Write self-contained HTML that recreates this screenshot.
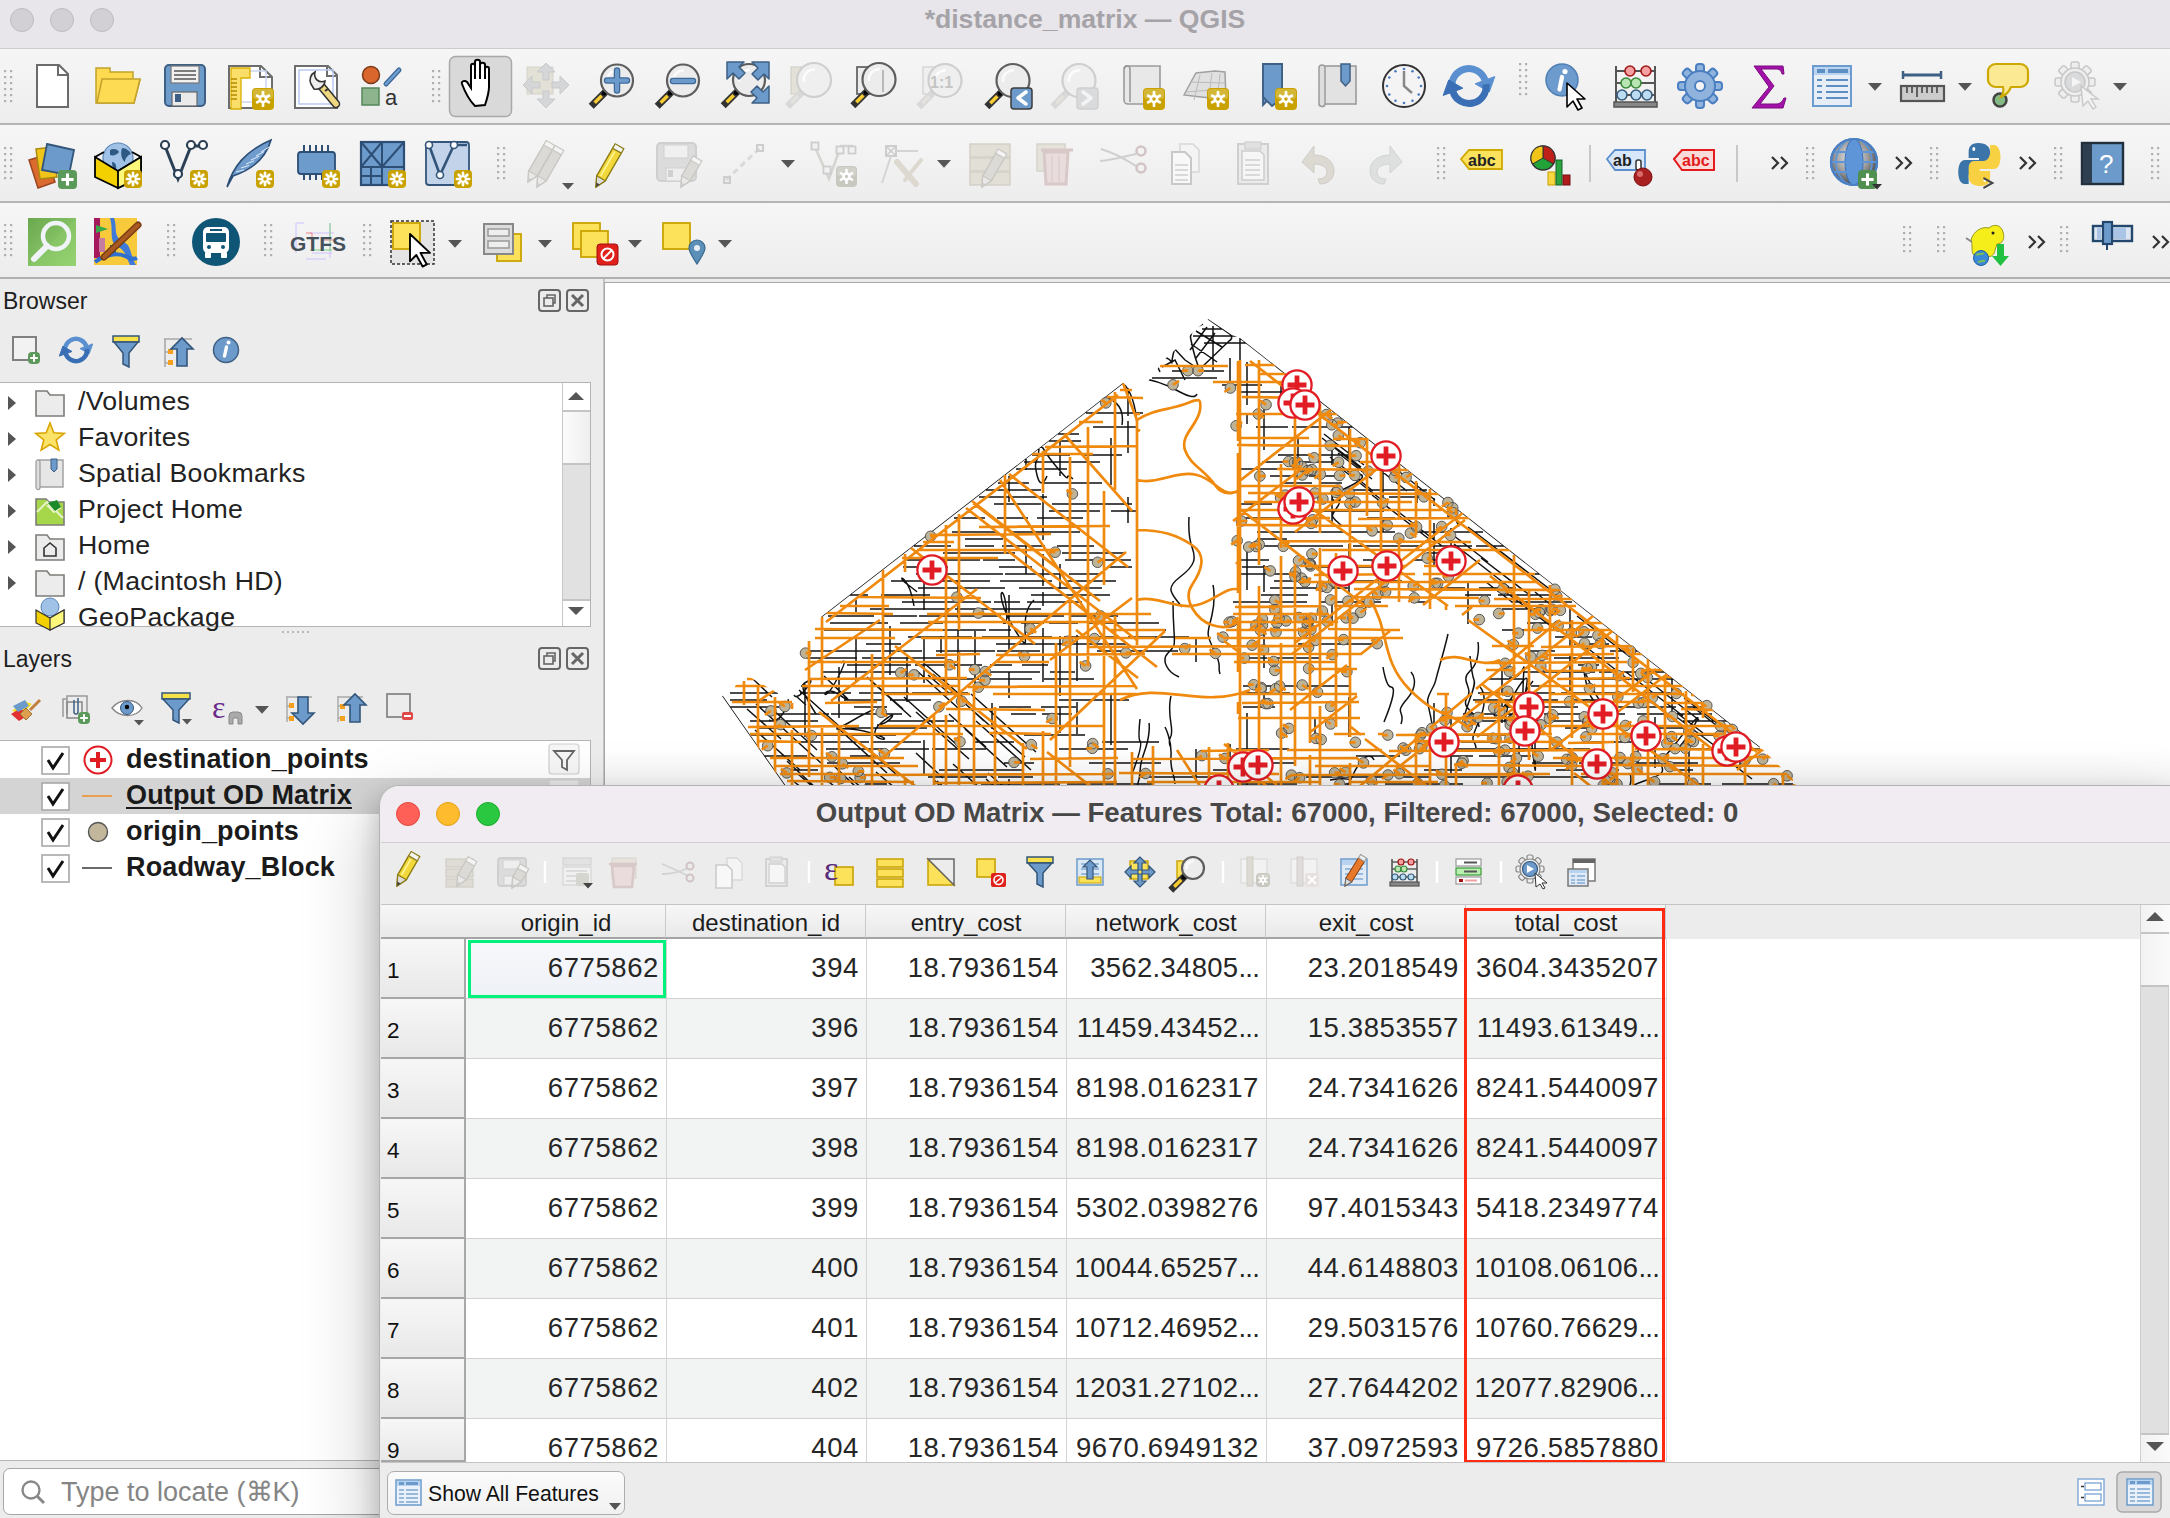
<!DOCTYPE html>
<html><head><meta charset="utf-8"><title>QGIS</title><style>
*{margin:0;padding:0;box-sizing:border-box}
html,body{width:2170px;height:1518px;overflow:hidden;background:#ececec;font-family:"Liberation Sans",sans-serif;color:#1e1e1e}
.a{position:absolute}
.t{position:absolute;white-space:nowrap;line-height:1}
svg.i{position:absolute;overflow:visible}
.grip{position:absolute;width:10px;background-image:radial-gradient(circle at 2px 2px,#a8a8a8 1.3px,transparent 1.6px);background-size:6px 6px}

.tbrow{position:absolute;left:0;width:2170px;background:linear-gradient(#f6f6f6,#ededed)}

.dlg{position:absolute;left:379px;top:785px;width:1810px;height:760px;border-radius:20px 20px 0 0;background:#ececec;box-shadow:-4px 10px 22px rgba(0,0,0,.16),-10px 24px 70px rgba(0,0,0,.20);overflow:hidden;border:1px solid #b4b4b4}
.hd{position:absolute;top:905px;height:34px;background:linear-gradient(#f7f7f7,#e9e9e9);border-bottom:2px solid #a4a4a4;border-right:1px solid #c9c9c9}
.rn{position:absolute;left:381px;width:85px;background:linear-gradient(#f7f7f7,#e8e8e8);border-bottom:2px solid #a6a6a6;border-right:2px solid #a8a8a8}
.num{letter-spacing:0.6px}
</style></head>
<body>
<div class="a" style="left:0px;top:0px;width:2170px;height:49px;background:#e8e6ea"></div><div class="a" style="left:0px;top:48px;width:2170px;height:1px;background:#cdcbce"></div><div class="a" style="left:10px;top:8px;width:24px;height:24px;border-radius:50%;background:#d2d0d5;border:1px solid #bdbbc0"></div><div class="a" style="left:50px;top:8px;width:24px;height:24px;border-radius:50%;background:#d2d0d5;border:1px solid #bdbbc0"></div><div class="a" style="left:90px;top:8px;width:24px;height:24px;border-radius:50%;background:#d2d0d5;border:1px solid #bdbbc0"></div><div class="t" style="left:585px;width:1000px;text-align:center;top:5.5px;font-size:26.6px;color:#a5a3a8;font-weight:bold;">*distance_matrix — QGIS</div><div class="tbrow" style="top:49px;height:74px"></div><div class="a" style="left:0px;top:123px;width:2170px;height:2px;background:#b4b4b4"></div><div class="tbrow" style="top:125px;height:76px"></div><div class="a" style="left:0px;top:201px;width:2170px;height:2px;background:#b4b4b4"></div><div class="tbrow" style="top:203px;height:74px"></div><div class="a" style="left:0px;top:277px;width:2170px;height:2px;background:#b0b0b0"></div><svg class="i" style="left:0px;top:0px" width="2170" height="280" viewBox="0 0 2170 280"><rect x="4" y="70" width="2.2" height="2.2" rx="0" fill="#b0b0b0" stroke="none" stroke-width="2" /><rect x="10" y="70" width="2.2" height="2.2" rx="0" fill="#b0b0b0" stroke="none" stroke-width="2" /><rect x="4" y="76" width="2.2" height="2.2" rx="0" fill="#b0b0b0" stroke="none" stroke-width="2" /><rect x="10" y="76" width="2.2" height="2.2" rx="0" fill="#b0b0b0" stroke="none" stroke-width="2" /><rect x="4" y="82" width="2.2" height="2.2" rx="0" fill="#b0b0b0" stroke="none" stroke-width="2" /><rect x="10" y="82" width="2.2" height="2.2" rx="0" fill="#b0b0b0" stroke="none" stroke-width="2" /><rect x="4" y="88" width="2.2" height="2.2" rx="0" fill="#b0b0b0" stroke="none" stroke-width="2" /><rect x="10" y="88" width="2.2" height="2.2" rx="0" fill="#b0b0b0" stroke="none" stroke-width="2" /><rect x="4" y="94" width="2.2" height="2.2" rx="0" fill="#b0b0b0" stroke="none" stroke-width="2" /><rect x="10" y="94" width="2.2" height="2.2" rx="0" fill="#b0b0b0" stroke="none" stroke-width="2" /><rect x="4" y="100" width="2.2" height="2.2" rx="0" fill="#b0b0b0" stroke="none" stroke-width="2" /><rect x="10" y="100" width="2.2" height="2.2" rx="0" fill="#b0b0b0" stroke="none" stroke-width="2" /><path d="M37 65h22l9 9v33h-31z" fill="#fff" stroke="#6b6b6b" stroke-width="2" /><path d="M58 65v10h10" fill="none" stroke="#6b6b6b" stroke-width="2" /><path d="M96 68h14v4h23v8h7l-6 23h-38z" fill="#fdda50" stroke="#c2a22c" stroke-width="1.5" /><path d="M97 103l5-24h38l-6 24z" fill="#fddb52" stroke="#c2a22c" stroke-width="1.5" /><rect x="165" y="65" width="40" height="41" rx="4" fill="#6d9bca" stroke="#3e5f84" stroke-width="2" /><rect x="171" y="66" width="28" height="17" rx="0" fill="#f0f0f0" stroke="#777" stroke-width="1.2" /><line x1="174" y1="71" x2="196" y2="71" stroke="#555" stroke-width="1.5" /><line x1="174" y1="75" x2="196" y2="75" stroke="#555" stroke-width="1.5" /><line x1="174" y1="79" x2="196" y2="79" stroke="#555" stroke-width="1.5" /><rect x="172" y="92" width="25" height="14" rx="0" fill="#eaeaea" stroke="#666" stroke-width="1.2" /><rect x="175" y="94" width="6" height="8" rx="0" fill="#3e5f84" stroke="none" stroke-width="2" /><path d="M229 66h32l11 11v31h-43z" fill="#fff" stroke="#6d6d6d" stroke-width="2" /><path d="M260 66v11h12" fill="none" stroke="#6d6d6d" stroke-width="2" /><rect x="236" y="71" width="30" height="31" rx="0" fill="none" stroke="#c8d4f0" stroke-width="1.5" /><path d="M231 68h19v10h-9v31h-10z" fill="#fbdd6a" stroke="#d9b000" stroke-width="1.3" /><line x1="231" y1="79" x2="237" y2="79" stroke="#b08a00" stroke-width="1.5" /><line x1="231" y1="83" x2="237" y2="83" stroke="#b08a00" stroke-width="1.5" /><line x1="231" y1="87" x2="237" y2="87" stroke="#b08a00" stroke-width="1.5" /><line x1="231" y1="91" x2="237" y2="91" stroke="#b08a00" stroke-width="1.5" /><line x1="231" y1="95" x2="237" y2="95" stroke="#b08a00" stroke-width="1.5" /><line x1="231" y1="99" x2="237" y2="99" stroke="#b08a00" stroke-width="1.5" /><rect x="252" y="88" width="22" height="22" rx="4" fill="#c9a200" stroke="none" stroke-width="2" /><rect x="253" y="89" width="20" height="10.0" rx="3" fill="#dcc55a" stroke="none" stroke-width="2" opacity="0.6"/><line x1="263.0" y1="99.0" x2="263.0" y2="106.92" stroke="#fff" stroke-width="2.6399999999999997" /><line x1="263.0" y1="99.0" x2="256.14107880202727" y2="102.96000000000001" stroke="#fff" stroke-width="2.6399999999999997" /><line x1="263.0" y1="99.0" x2="256.14107880202727" y2="95.04" stroke="#fff" stroke-width="2.6399999999999997" /><line x1="263.0" y1="99.0" x2="263.0" y2="91.08" stroke="#fff" stroke-width="2.6399999999999997" /><line x1="263.0" y1="99.0" x2="269.85892119797273" y2="95.03999999999999" stroke="#fff" stroke-width="2.6399999999999997" /><line x1="263.0" y1="99.0" x2="269.85892119797273" y2="102.96" stroke="#fff" stroke-width="2.6399999999999997" /><circle cx="263.0" cy="99.0" r="4.4" fill="#fff" stroke="none" stroke-width="2" /><circle cx="263.0" cy="99.0" r="1.76" fill="#c9a200" stroke="none" stroke-width="2" /><path d="M295 66h33l9 9v33h-42z" fill="#fff" stroke="#6d6d6d" stroke-width="2" /><path d="M327 66v10h10" fill="none" stroke="#6d6d6d" stroke-width="2" /><rect x="299" y="70" width="34" height="34" rx="0" fill="none" stroke="#b9c9f0" stroke-width="1.5" /><line x1="322" y1="87" x2="336" y2="104" stroke="#333" stroke-width="8.5" stroke-linecap="round"/><line x1="322" y1="87" x2="336" y2="104" stroke="#f0d880" stroke-width="5.5" stroke-linecap="round"/><line x1="325" y1="91" x2="328" y2="89" stroke="#333" stroke-width="2" /><path d="M311 84a9 9 0 0 1 4-12 8 8 0 0 0 2 8 8 8 0 0 0 8 1 9 9 0 0 1-11 8z" fill="#eee" stroke="#333" stroke-width="1.6" /><circle cx="371" cy="75" r="8.5" fill="#d9672d" stroke="#7a3a19" stroke-width="1.5" /><line x1="386" y1="84" x2="399" y2="70" stroke="#3e6a9a" stroke-width="5" stroke-linecap="round"/><line x1="386" y1="84" x2="399" y2="70" stroke="#6f9ed0" stroke-width="2.5" stroke-linecap="round"/><rect x="362" y="88" width="17" height="17" rx="0" fill="#8db48c" stroke="#55875a" stroke-width="1.5" /><text x="385" y="105" font-family="Liberation Sans" font-size="22" fill="#333" font-weight="normal" >a</text><rect x="432" y="70" width="2.2" height="2.2" rx="0" fill="#b0b0b0" stroke="none" stroke-width="2" /><rect x="438" y="70" width="2.2" height="2.2" rx="0" fill="#b0b0b0" stroke="none" stroke-width="2" /><rect x="432" y="76" width="2.2" height="2.2" rx="0" fill="#b0b0b0" stroke="none" stroke-width="2" /><rect x="438" y="76" width="2.2" height="2.2" rx="0" fill="#b0b0b0" stroke="none" stroke-width="2" /><rect x="432" y="82" width="2.2" height="2.2" rx="0" fill="#b0b0b0" stroke="none" stroke-width="2" /><rect x="438" y="82" width="2.2" height="2.2" rx="0" fill="#b0b0b0" stroke="none" stroke-width="2" /><rect x="432" y="88" width="2.2" height="2.2" rx="0" fill="#b0b0b0" stroke="none" stroke-width="2" /><rect x="438" y="88" width="2.2" height="2.2" rx="0" fill="#b0b0b0" stroke="none" stroke-width="2" /><rect x="432" y="94" width="2.2" height="2.2" rx="0" fill="#b0b0b0" stroke="none" stroke-width="2" /><rect x="438" y="94" width="2.2" height="2.2" rx="0" fill="#b0b0b0" stroke="none" stroke-width="2" /><rect x="432" y="100" width="2.2" height="2.2" rx="0" fill="#b0b0b0" stroke="none" stroke-width="2" /><rect x="438" y="100" width="2.2" height="2.2" rx="0" fill="#b0b0b0" stroke="none" stroke-width="2" /><rect x="449.5" y="56.5" width="62" height="60" rx="6" fill="#d9d9d9" stroke="#a9a9a9" stroke-width="1.5" /><path d="M475 106c-6-6-10-14-13-22-1-3 3-4 5-2l4 6v-22c0-3 4-3 4 0v13-17c0-3 5-3 5 0v17-14c0-3 5-3 5 0v14-10c0-3 4-3 4 0v18c0 6-2 12-4 18z" fill="#fff" stroke="#000" stroke-width="2" /><rect x="527" y="67" width="26" height="27" rx="0" fill="#e3e0d6" stroke="#d6d3ca" stroke-width="1" /><path d="M546 63l-9 9h6v8h6v-8h6z" fill="#d4d6d8" stroke="#c7c9cb" stroke-width="1" /><path d="M546 108l-9-9h6v-8h6v8h6z" fill="#d4d6d8" stroke="#c7c9cb" stroke-width="1" /><path d="M523 85l9-9v6h8v6h-8v6z" fill="#d4d6d8" stroke="#c7c9cb" stroke-width="1" /><path d="M569 85l-9-9v6h-8v6h8v6z" fill="#d4d6d8" stroke="#c7c9cb" stroke-width="1" /><line x1="605.6862915010153" y1="91.81370849898477" x2="593.665476220844" y2="103.83452377915607" stroke="#333" stroke-width="7" stroke-linecap="square"/><line x1="601.6862915010153" y1="95.81370849898477" x2="594.665476220844" y2="102.83452377915607" stroke="#f6cc32" stroke-width="3.5" /><circle cx="604.1862915010153" cy="93.31370849898477" r="2.2" fill="#000" stroke="none" stroke-width="2" /><circle cx="617" cy="80.5" r="16" fill="#ececec" stroke="#5e5e5e" stroke-width="2.2" /><path d="M607.4 82.1A9.92 9.92 0 0 1 617.8 70.58" fill="none" stroke="#fff" stroke-width="2.5" opacity="0.8"/><path d="M607 80.5h20M617 70.5v20" fill="none" stroke="#3e6a9a" stroke-width="6.5" stroke-linecap="round"/><path d="M607 80.5h20M617 70.5v20" fill="none" stroke="#6c9bcb" stroke-width="4" stroke-linecap="round"/><line x1="671.6862915010153" y1="91.81370849898477" x2="659.665476220844" y2="103.83452377915607" stroke="#333" stroke-width="7" stroke-linecap="square"/><line x1="667.6862915010153" y1="95.81370849898477" x2="660.665476220844" y2="102.83452377915607" stroke="#f6cc32" stroke-width="3.5" /><circle cx="670.1862915010153" cy="93.31370849898477" r="2.2" fill="#000" stroke="none" stroke-width="2" /><circle cx="683" cy="80.5" r="16" fill="#ececec" stroke="#5e5e5e" stroke-width="2.2" /><path d="M673.4 82.1A9.92 9.92 0 0 1 683.8 70.58" fill="none" stroke="#fff" stroke-width="2.5" opacity="0.8"/><path d="M673 81h20" fill="none" stroke="#3e6a9a" stroke-width="6.5" stroke-linecap="round"/><path d="M673 81h20" fill="none" stroke="#6c9bcb" stroke-width="4" stroke-linecap="round"/><line x1="737.6862915010153" y1="91.31370849898477" x2="725.665476220844" y2="103.33452377915607" stroke="#333" stroke-width="7" stroke-linecap="square"/><line x1="733.6862915010153" y1="95.31370849898477" x2="726.665476220844" y2="102.33452377915607" stroke="#f6cc32" stroke-width="3.5" /><circle cx="736.1862915010153" cy="92.81370849898477" r="2.2" fill="#000" stroke="none" stroke-width="2" /><circle cx="749" cy="80" r="16" fill="#ececec" stroke="#5e5e5e" stroke-width="2.2" /><path d="M739.4 81.6A9.92 9.92 0 0 1 749.8 70.08" fill="none" stroke="#fff" stroke-width="2.5" opacity="0.8"/><path d="M0 0h17l-5 5 6 6-6 6-6-6-6 6z" fill="#6c9bcb" stroke="#3e5f84" stroke-width="1.5" stroke-linejoin="round" transform="translate(727 62) rotate(0)"/><path d="M0 0h17l-5 5 6 6-6 6-6-6-6 6z" fill="#6c9bcb" stroke="#3e5f84" stroke-width="1.5" stroke-linejoin="round" transform="translate(769 62) rotate(90)"/><path d="M0 0h17l-5 5 6 6-6 6-6-6-6 6z" fill="#6c9bcb" stroke="#3e5f84" stroke-width="1.5" stroke-linejoin="round" transform="translate(769 103) rotate(180)"/><rect x="791" y="67" width="20" height="27" rx="0" fill="#e4e1d8" stroke="#d2d0c8" stroke-width="1.2" /><line x1="801.9791847198287" y1="92.0208152801713" x2="789.9583694396574" y2="104.04163056034261" stroke="#d8d8d8" stroke-width="7" stroke-linecap="square"/><line x1="797.9791847198287" y1="96.0208152801713" x2="790.9583694396574" y2="103.04163056034261" stroke="#e4e2dc" stroke-width="3.5" /><circle cx="814" cy="80" r="17" fill="#efefef" stroke="#cfcfcf" stroke-width="2.2" /><path d="M803.8 81.7A10.54 10.54 0 0 1 814.85 69.46000000000001" fill="none" stroke="#fff" stroke-width="2.5" opacity="0.8"/><rect x="857" y="67" width="18" height="27" rx="0" fill="#ececec" stroke="#666" stroke-width="1.8" /><line x1="867.3327381104219" y1="91.16726188957803" x2="855.3119228302506" y2="103.18807716974935" stroke="#333" stroke-width="7" stroke-linecap="square"/><line x1="863.3327381104219" y1="95.16726188957803" x2="856.3119228302506" y2="102.18807716974935" stroke="#f6cc32" stroke-width="3.5" /><circle cx="865.8327381104219" cy="92.66726188957803" r="2.2" fill="#000" stroke="none" stroke-width="2" /><circle cx="879" cy="79.5" r="16.5" fill="#ececec" stroke="#5e5e5e" stroke-width="2.2" /><path d="M869.1 81.15A10.23 10.23 0 0 1 879.825 69.27" fill="none" stroke="#fff" stroke-width="2.5" opacity="0.8"/><line x1="883" y1="70" x2="883" y2="92" stroke="#888" stroke-width="1" /><rect x="923" y="67" width="18" height="27" rx="0" fill="#efefef" stroke="#d0d0d0" stroke-width="1.2" /><line x1="933.3327381104219" y1="92.16726188957803" x2="921.3119228302506" y2="104.18807716974935" stroke="#d8d8d8" stroke-width="7" stroke-linecap="square"/><line x1="929.3327381104219" y1="96.16726188957803" x2="922.3119228302506" y2="103.18807716974935" stroke="#e4e2dc" stroke-width="3.5" /><circle cx="945" cy="80.5" r="16.5" fill="#efefef" stroke="#cfcfcf" stroke-width="2.2" /><path d="M935.1 82.15A10.23 10.23 0 0 1 945.825 70.27" fill="none" stroke="#fff" stroke-width="2.5" opacity="0.8"/><text x="930" y="88" font-family="Liberation Sans" font-size="16" fill="#c4c4c4" font-weight="bold" >1:1</text><line x1="1001.3327381104219" y1="92.16726188957803" x2="989.3119228302506" y2="104.18807716974935" stroke="#333" stroke-width="7" stroke-linecap="square"/><line x1="997.3327381104219" y1="96.16726188957803" x2="990.3119228302506" y2="103.18807716974935" stroke="#f6cc32" stroke-width="3.5" /><circle cx="999.8327381104219" cy="93.66726188957803" r="2.2" fill="#000" stroke="none" stroke-width="2" /><circle cx="1013" cy="80.5" r="16.5" fill="#ececec" stroke="#5e5e5e" stroke-width="2.2" /><path d="M1003.1 82.15A10.23 10.23 0 0 1 1013.825 70.27" fill="none" stroke="#fff" stroke-width="2.5" opacity="0.8"/><rect x="1011" y="88" width="21" height="21" rx="3" fill="#6c9bcb" stroke="#3c3c3c" stroke-width="1.5" /><path d="M1026 92l-8 6 8 6" fill="none" stroke="#fff" stroke-width="3.5" stroke-linejoin="round" stroke-linecap="round"/><line x1="1067.332738110422" y1="92.16726188957803" x2="1055.3119228302508" y2="104.18807716974935" stroke="#d8d8d8" stroke-width="7" stroke-linecap="square"/><line x1="1063.332738110422" y1="96.16726188957803" x2="1056.3119228302508" y2="103.18807716974935" stroke="#e4e2dc" stroke-width="3.5" /><circle cx="1079" cy="80.5" r="16.5" fill="#efefef" stroke="#cfcfcf" stroke-width="2.2" /><path d="M1069.1 82.15A10.23 10.23 0 0 1 1079.825 70.27" fill="none" stroke="#fff" stroke-width="2.5" opacity="0.8"/><rect x="1077" y="88" width="21" height="21" rx="3" fill="#d8dadc" stroke="#d0d0d0" stroke-width="1.5" /><path d="M1083 92l8 6-8 6" fill="none" stroke="#f4f4f4" stroke-width="3.5" stroke-linejoin="round" stroke-linecap="round"/><path d="M1125 66h35v38h-32a4 4 0 0 1-4-4v-31a4 4 0 0 1 4-3z" fill="#e8e8e8" stroke="#9a9a9a" stroke-width="1.6" /><path d="M1124 69a3 3 0 0 1 6 0v33" fill="none" stroke="#9a9a9a" stroke-width="1.6" /><rect x="1143" y="88" width="22" height="22" rx="4" fill="#c9a200" stroke="none" stroke-width="2" /><rect x="1144" y="89" width="20" height="10.0" rx="3" fill="#dcc55a" stroke="none" stroke-width="2" opacity="0.6"/><line x1="1154.0" y1="99.0" x2="1154.0" y2="106.92" stroke="#fff" stroke-width="2.6399999999999997" /><line x1="1154.0" y1="99.0" x2="1147.1410788020273" y2="102.96000000000001" stroke="#fff" stroke-width="2.6399999999999997" /><line x1="1154.0" y1="99.0" x2="1147.1410788020273" y2="95.04" stroke="#fff" stroke-width="2.6399999999999997" /><line x1="1154.0" y1="99.0" x2="1154.0" y2="91.08" stroke="#fff" stroke-width="2.6399999999999997" /><line x1="1154.0" y1="99.0" x2="1160.8589211979727" y2="95.03999999999999" stroke="#fff" stroke-width="2.6399999999999997" /><line x1="1154.0" y1="99.0" x2="1160.8589211979727" y2="102.96" stroke="#fff" stroke-width="2.6399999999999997" /><circle cx="1154.0" cy="99.0" r="4.4" fill="#fff" stroke="none" stroke-width="2" /><circle cx="1154.0" cy="99.0" r="1.76" fill="#c9a200" stroke="none" stroke-width="2" /><path d="M1184 95l8-15 4-7 19-2 10 1 1 28-15-2-10-1z" fill="#e0e0e0" stroke="#a0a0a0" stroke-width="1.5" /><path d="M1190 82l35 1M1186 92l38-3M1200 75l-6 25M1212 73l-4 30M1220 74l-3 27" fill="none" stroke="#bbb" stroke-width="1" /><rect x="1207" y="88" width="22" height="22" rx="4" fill="#c9a200" stroke="none" stroke-width="2" /><rect x="1208" y="89" width="20" height="10.0" rx="3" fill="#dcc55a" stroke="none" stroke-width="2" opacity="0.6"/><line x1="1218.0" y1="99.0" x2="1218.0" y2="106.92" stroke="#fff" stroke-width="2.6399999999999997" /><line x1="1218.0" y1="99.0" x2="1211.1410788020273" y2="102.96000000000001" stroke="#fff" stroke-width="2.6399999999999997" /><line x1="1218.0" y1="99.0" x2="1211.1410788020273" y2="95.04" stroke="#fff" stroke-width="2.6399999999999997" /><line x1="1218.0" y1="99.0" x2="1218.0" y2="91.08" stroke="#fff" stroke-width="2.6399999999999997" /><line x1="1218.0" y1="99.0" x2="1224.8589211979727" y2="95.03999999999999" stroke="#fff" stroke-width="2.6399999999999997" /><line x1="1218.0" y1="99.0" x2="1224.8589211979727" y2="102.96" stroke="#fff" stroke-width="2.6399999999999997" /><circle cx="1218.0" cy="99.0" r="4.4" fill="#fff" stroke="none" stroke-width="2" /><circle cx="1218.0" cy="99.0" r="1.76" fill="#c9a200" stroke="none" stroke-width="2" /><path d="M1263 64h19v41l-10 -9-9 9z" fill="#6c9bcb" stroke="#3e5f84" stroke-width="1.8" /><path d="M1263 64h19v34l-10 8-9-9z" fill="#6c9bcb" stroke="#3e5f84" stroke-width="1.8" /><rect x="1275" y="88" width="22" height="22" rx="4" fill="#c9a200" stroke="none" stroke-width="2" /><rect x="1276" y="89" width="20" height="10.0" rx="3" fill="#dcc55a" stroke="none" stroke-width="2" opacity="0.6"/><line x1="1286.0" y1="99.0" x2="1286.0" y2="106.92" stroke="#fff" stroke-width="2.6399999999999997" /><line x1="1286.0" y1="99.0" x2="1279.1410788020273" y2="102.96000000000001" stroke="#fff" stroke-width="2.6399999999999997" /><line x1="1286.0" y1="99.0" x2="1279.1410788020273" y2="95.04" stroke="#fff" stroke-width="2.6399999999999997" /><line x1="1286.0" y1="99.0" x2="1286.0" y2="91.08" stroke="#fff" stroke-width="2.6399999999999997" /><line x1="1286.0" y1="99.0" x2="1292.8589211979727" y2="95.03999999999999" stroke="#fff" stroke-width="2.6399999999999997" /><line x1="1286.0" y1="99.0" x2="1292.8589211979727" y2="102.96" stroke="#fff" stroke-width="2.6399999999999997" /><circle cx="1286.0" cy="99.0" r="4.4" fill="#fff" stroke="none" stroke-width="2" /><circle cx="1286.0" cy="99.0" r="1.76" fill="#c9a200" stroke="none" stroke-width="2" /><rect x="1321" y="66" width="35" height="38" rx="0" fill="#e2e2e2" stroke="#9c9c9c" stroke-width="1.6" /><path d="M1319 68a3 3 0 0 1 6 0v36a3 3 0 0 1-6-1z" fill="#ddd" stroke="#9c9c9c" stroke-width="1.5" /><path d="M1341 64h9v17l-4.5 5-4.5-5z" fill="#6c9bcb" stroke="#3e5f84" stroke-width="1.5" /><circle cx="1404" cy="86" r="21" fill="#f4f4f4" stroke="#333" stroke-width="2" /><circle cx="1421.0" cy="86.0" r="1.3" fill="#4a7ac0" stroke="none" stroke-width="2" /><circle cx="1418.7224318643355" cy="94.5" r="1.3" fill="#4a7ac0" stroke="none" stroke-width="2" /><circle cx="1412.5" cy="100.72243186433546" r="1.3" fill="#4a7ac0" stroke="none" stroke-width="2" /><circle cx="1404.0" cy="103.0" r="1.3" fill="#4a7ac0" stroke="none" stroke-width="2" /><circle cx="1395.5" cy="100.72243186433546" r="1.3" fill="#4a7ac0" stroke="none" stroke-width="2" /><circle cx="1389.2775681356645" cy="94.5" r="1.3" fill="#4a7ac0" stroke="none" stroke-width="2" /><circle cx="1387.0" cy="86.0" r="1.3" fill="#4a7ac0" stroke="none" stroke-width="2" /><circle cx="1389.2775681356645" cy="77.5" r="1.3" fill="#4a7ac0" stroke="none" stroke-width="2" /><circle cx="1395.5" cy="71.27756813566455" r="1.3" fill="#4a7ac0" stroke="none" stroke-width="2" /><circle cx="1404.0" cy="69.0" r="1.3" fill="#4a7ac0" stroke="none" stroke-width="2" /><circle cx="1412.5" cy="71.27756813566454" r="1.3" fill="#4a7ac0" stroke="none" stroke-width="2" /><circle cx="1418.7224318643355" cy="77.5" r="1.3" fill="#4a7ac0" stroke="none" stroke-width="2" /><path d="M1404 71v15l8 7" fill="none" stroke="#888" stroke-width="2.5" /><path d="M1452.0 87.7A17 17 0 0 1 1485.0 80.2" fill="none" stroke="#5a90d0" stroke-width="7" /><path d="M1489.3 92.0L1475.1 83.8L1494.8 76.6z" fill="#5a90d0" stroke="#5a90d0" stroke-width="1" /><path d="M1486.0 84.3A17 17 0 0 1 1453.0 91.8" fill="none" stroke="#3a6fb5" stroke-width="7" /><path d="M1448.7 80.0L1462.9 88.2L1443.2 95.4z" fill="#3a6fb5" stroke="#3a6fb5" stroke-width="1" /><rect x="1519" y="63" width="2.2" height="2.2" rx="0" fill="#b0b0b0" stroke="none" stroke-width="2" /><rect x="1525" y="63" width="2.2" height="2.2" rx="0" fill="#b0b0b0" stroke="none" stroke-width="2" /><rect x="1519" y="69" width="2.2" height="2.2" rx="0" fill="#b0b0b0" stroke="none" stroke-width="2" /><rect x="1525" y="69" width="2.2" height="2.2" rx="0" fill="#b0b0b0" stroke="none" stroke-width="2" /><rect x="1519" y="75" width="2.2" height="2.2" rx="0" fill="#b0b0b0" stroke="none" stroke-width="2" /><rect x="1525" y="75" width="2.2" height="2.2" rx="0" fill="#b0b0b0" stroke="none" stroke-width="2" /><rect x="1519" y="81" width="2.2" height="2.2" rx="0" fill="#b0b0b0" stroke="none" stroke-width="2" /><rect x="1525" y="81" width="2.2" height="2.2" rx="0" fill="#b0b0b0" stroke="none" stroke-width="2" /><rect x="1519" y="87" width="2.2" height="2.2" rx="0" fill="#b0b0b0" stroke="none" stroke-width="2" /><rect x="1525" y="87" width="2.2" height="2.2" rx="0" fill="#b0b0b0" stroke="none" stroke-width="2" /><rect x="1519" y="93" width="2.2" height="2.2" rx="0" fill="#b0b0b0" stroke="none" stroke-width="2" /><rect x="1525" y="93" width="2.2" height="2.2" rx="0" fill="#b0b0b0" stroke="none" stroke-width="2" /><circle cx="1562" cy="80" r="16" fill="#6d9bcd" stroke="#4f7fb4" stroke-width="1.5" /><circle cx="1565" cy="71.5" r="2.6" fill="#fff" stroke="none" stroke-width="2" /><path d="M1562 77l-2.5 12.5" fill="none" stroke="#fff" stroke-width="4.2" stroke-linecap="round"/><path d="M1567 83l0 24 6-6 5 9 4-2-5-9h8z" fill="#fff" stroke="#000" stroke-width="1.6" stroke-linejoin="round"/><rect x="1614" y="102" width="43" height="5" rx="0" fill="#888" stroke="#555" stroke-width="1.5" /><line x1="1616" y1="66" x2="1616" y2="102" stroke="#555" stroke-width="2" /><line x1="1655" y1="66" x2="1655" y2="102" stroke="#555" stroke-width="2" /><line x1="1616" y1="71" x2="1655" y2="71" stroke="#555" stroke-width="2" /><circle cx="1630" cy="71" r="5" fill="#f4a0a0" stroke="#a01818" stroke-width="1.6" /><circle cx="1646" cy="71" r="5" fill="#f4a0a0" stroke="#a01818" stroke-width="1.6" /><line x1="1616" y1="83" x2="1655" y2="83" stroke="#555" stroke-width="2" /><circle cx="1626" cy="83" r="5" fill="#b9e4b4" stroke="#3b8a3b" stroke-width="1.6" /><circle cx="1636" cy="83" r="5" fill="#b9e4b4" stroke="#3b8a3b" stroke-width="1.6" /><line x1="1616" y1="95" x2="1655" y2="95" stroke="#555" stroke-width="2" /><circle cx="1622" cy="95" r="5" fill="#bcdcf2" stroke="#365b7b" stroke-width="1.6" /><circle cx="1636" cy="95" r="5" fill="#bcdcf2" stroke="#365b7b" stroke-width="1.6" /><circle cx="1647" cy="95" r="5" fill="#bcdcf2" stroke="#365b7b" stroke-width="1.6" /><rect x="1696" y="64" width="8" height="10" rx="3" transform="rotate(0 1700 86)" fill="#8fb3dd" stroke="#4a7fc1" stroke-width="2"/><rect x="1696" y="64" width="8" height="10" rx="3" transform="rotate(45 1700 86)" fill="#8fb3dd" stroke="#4a7fc1" stroke-width="2"/><rect x="1696" y="64" width="8" height="10" rx="3" transform="rotate(90 1700 86)" fill="#8fb3dd" stroke="#4a7fc1" stroke-width="2"/><rect x="1696" y="64" width="8" height="10" rx="3" transform="rotate(135 1700 86)" fill="#8fb3dd" stroke="#4a7fc1" stroke-width="2"/><rect x="1696" y="64" width="8" height="10" rx="3" transform="rotate(180 1700 86)" fill="#8fb3dd" stroke="#4a7fc1" stroke-width="2"/><rect x="1696" y="64" width="8" height="10" rx="3" transform="rotate(225 1700 86)" fill="#8fb3dd" stroke="#4a7fc1" stroke-width="2"/><rect x="1696" y="64" width="8" height="10" rx="3" transform="rotate(270 1700 86)" fill="#8fb3dd" stroke="#4a7fc1" stroke-width="2"/><rect x="1696" y="64" width="8" height="10" rx="3" transform="rotate(315 1700 86)" fill="#8fb3dd" stroke="#4a7fc1" stroke-width="2"/><circle cx="1700" cy="86" r="15" fill="#8fb3dd" stroke="#4a7fc1" stroke-width="2" /><circle cx="1700" cy="86" r="5" fill="#f4f4f4" stroke="#4a7fc1" stroke-width="2" /><path d="M1754 66h29l1 8h-2c-1-4-3-5-7-5h-14l13 17-14 18h16c4 0 6-2 8-6h2l-3 10h-31l17-21z" fill="#a312a8" stroke="#7a0a80" stroke-width="1" /><rect x="1813" y="66" width="38" height="40" rx="0" fill="#e8eef6" stroke="#6c9bd0" stroke-width="2" /><rect x="1814" y="67" width="36" height="8" rx="0" fill="#b9d4f0" stroke="none" stroke-width="2" /><rect x="1817" y="69" width="8" height="4" rx="0" fill="#5e8fc4" stroke="none" stroke-width="2" /><rect x="1828" y="69" width="20" height="4" rx="0" fill="#5e8fc4" stroke="none" stroke-width="2" /><line x1="1817" y1="80" x2="1822" y2="80" stroke="#5e8fc4" stroke-width="2" /><line x1="1826" y1="80" x2="1848" y2="80" stroke="#5e8fc4" stroke-width="2" /><line x1="1817" y1="86" x2="1822" y2="86" stroke="#5e8fc4" stroke-width="2" /><line x1="1826" y1="86" x2="1848" y2="86" stroke="#5e8fc4" stroke-width="2" /><line x1="1817" y1="92" x2="1822" y2="92" stroke="#5e8fc4" stroke-width="2" /><line x1="1826" y1="92" x2="1848" y2="92" stroke="#5e8fc4" stroke-width="2" /><line x1="1817" y1="98" x2="1822" y2="98" stroke="#5e8fc4" stroke-width="2" /><line x1="1826" y1="98" x2="1848" y2="98" stroke="#5e8fc4" stroke-width="2" /><path d="M1868 83h14l-7.0 7.700000000000001z" fill="#555" stroke="none" stroke-width="2" /><rect x="1901" y="86" width="43" height="15" rx="0" fill="#ccc" stroke="#555" stroke-width="2.2" /><line x1="1907" y1="87" x2="1907" y2="93" stroke="#555" stroke-width="1.8" /><line x1="1912" y1="87" x2="1912" y2="93" stroke="#555" stroke-width="1.8" /><line x1="1917" y1="87" x2="1917" y2="97" stroke="#555" stroke-width="1.8" /><line x1="1922" y1="87" x2="1922" y2="93" stroke="#555" stroke-width="1.8" /><line x1="1927" y1="87" x2="1927" y2="93" stroke="#555" stroke-width="1.8" /><line x1="1932" y1="87" x2="1932" y2="93" stroke="#555" stroke-width="1.8" /><line x1="1937" y1="87" x2="1937" y2="93" stroke="#555" stroke-width="1.8" /><line x1="1903" y1="75" x2="1941" y2="75" stroke="#3e5f84" stroke-width="3" /><line x1="1903" y1="71" x2="1903" y2="79" stroke="#3e5f84" stroke-width="2.5" /><line x1="1941" y1="71" x2="1941" y2="79" stroke="#3e5f84" stroke-width="2.5" /><path d="M1958 83h14l-7.0 7.700000000000001z" fill="#555" stroke="none" stroke-width="2" /><circle cx="2000" cy="100" r="6.5" fill="#84ba84" stroke="#444" stroke-width="2.5" /><path d="M1996 64h24c4 0 8 3 8 7v9c0 4-4 7-8 7h-9c-2 5-5 8-10 10 2-3 3-6 2-10h-7c-4 0-8-3-8-7v-9c0-4 4-7 8-7z" fill="#fbe993" stroke="#cda900" stroke-width="2.2" /><rect x="2071" y="62" width="8" height="9" rx="2" transform="rotate(0 2075 82)" fill="#eee" stroke="#c8c8c8" stroke-width="1.5"/><rect x="2071" y="62" width="8" height="9" rx="2" transform="rotate(45 2075 82)" fill="#eee" stroke="#c8c8c8" stroke-width="1.5"/><rect x="2071" y="62" width="8" height="9" rx="2" transform="rotate(90 2075 82)" fill="#eee" stroke="#c8c8c8" stroke-width="1.5"/><rect x="2071" y="62" width="8" height="9" rx="2" transform="rotate(135 2075 82)" fill="#eee" stroke="#c8c8c8" stroke-width="1.5"/><rect x="2071" y="62" width="8" height="9" rx="2" transform="rotate(180 2075 82)" fill="#eee" stroke="#c8c8c8" stroke-width="1.5"/><rect x="2071" y="62" width="8" height="9" rx="2" transform="rotate(225 2075 82)" fill="#eee" stroke="#c8c8c8" stroke-width="1.5"/><rect x="2071" y="62" width="8" height="9" rx="2" transform="rotate(270 2075 82)" fill="#eee" stroke="#c8c8c8" stroke-width="1.5"/><rect x="2071" y="62" width="8" height="9" rx="2" transform="rotate(315 2075 82)" fill="#eee" stroke="#c8c8c8" stroke-width="1.5"/><circle cx="2075" cy="82" r="14" fill="#eee" stroke="#c8c8c8" stroke-width="1.5" /><circle cx="2075" cy="82" r="10" fill="#d8dadc" stroke="#c8c8c8" stroke-width="1.5" /><path d="M2072 77l9 5-9 5z" fill="#f4f4f4" stroke="none" stroke-width="2" /><path d="M2081 86l2 20 5-5 5 8 3-2-5-8h7z" fill="#f2f2f2" stroke="#c8c8c8" stroke-width="1.4" /><path d="M2113 83h14l-7.0 7.700000000000001z" fill="#555" stroke="none" stroke-width="2" /><rect x="4" y="147" width="2.2" height="2.2" rx="0" fill="#b0b0b0" stroke="none" stroke-width="2" /><rect x="10" y="147" width="2.2" height="2.2" rx="0" fill="#b0b0b0" stroke="none" stroke-width="2" /><rect x="4" y="153" width="2.2" height="2.2" rx="0" fill="#b0b0b0" stroke="none" stroke-width="2" /><rect x="10" y="153" width="2.2" height="2.2" rx="0" fill="#b0b0b0" stroke="none" stroke-width="2" /><rect x="4" y="159" width="2.2" height="2.2" rx="0" fill="#b0b0b0" stroke="none" stroke-width="2" /><rect x="10" y="159" width="2.2" height="2.2" rx="0" fill="#b0b0b0" stroke="none" stroke-width="2" /><rect x="4" y="165" width="2.2" height="2.2" rx="0" fill="#b0b0b0" stroke="none" stroke-width="2" /><rect x="10" y="165" width="2.2" height="2.2" rx="0" fill="#b0b0b0" stroke="none" stroke-width="2" /><rect x="4" y="171" width="2.2" height="2.2" rx="0" fill="#b0b0b0" stroke="none" stroke-width="2" /><rect x="10" y="171" width="2.2" height="2.2" rx="0" fill="#b0b0b0" stroke="none" stroke-width="2" /><rect x="4" y="177" width="2.2" height="2.2" rx="0" fill="#b0b0b0" stroke="none" stroke-width="2" /><rect x="10" y="177" width="2.2" height="2.2" rx="0" fill="#b0b0b0" stroke="none" stroke-width="2" /><path d="M29 160l17-5 9 27-17 6z" fill="#db6a2f" stroke="#9a4620" stroke-width="1.5" /><path d="M36 149l17-2 4 30-17 2z" fill="#f0c419" stroke="#a98a10" stroke-width="1.5" /><path d="M47 144l27 6-5 25-27-5z" fill="#6c9bcb" stroke="#33557a" stroke-width="1.8" /><rect x="58" y="170" width="19" height="19" rx="4" fill="#5b995b" stroke="none" stroke-width="2" /><rect x="65.98" y="173.42" width="3.04" height="12.16" rx="0" fill="#fff" stroke="none" stroke-width="2" /><rect x="61.42" y="177.98" width="12.16" height="3.04" rx="0" fill="#fff" stroke="none" stroke-width="2" /><circle cx="118" cy="158" r="15" fill="#9fc2e6" stroke="#5c86b6" stroke-width="1.2" /><path d="M110 150c3-2 8-1 9 2-2 3-6 4-9 3zM122 148c4 0 8 3 9 6-3 1-6 4-6 8-3-2-5-8-3-14zM112 162c3 0 5 3 4 8-2 0-4-3-4-8z" fill="#2f5985" stroke="none" stroke-width="2" /><path d="M95 157l23 14 23-14v20l-23 11-23-11z" fill="#f3d000" stroke="#000" stroke-width="1.8" /><path d="M118 171v17l23-11v-20z" fill="#fdf77a" stroke="#000" stroke-width="1.8" /><path d="M95 157l9-5M141 157l-9-5" fill="none" stroke="#000" stroke-width="1.8" /><rect x="124" y="170" width="18" height="18" rx="4" fill="#c9a200" stroke="none" stroke-width="2" /><line x1="133.0" y1="179.0" x2="139.12" y2="179.0" stroke="#fff" stroke-width="2.6999999999999997" stroke-linecap="round"/><line x1="133.0" y1="179.0" x2="137.32749350086166" y2="183.32749350086166" stroke="#fff" stroke-width="2.6999999999999997" stroke-linecap="round"/><line x1="133.0" y1="179.0" x2="133.0" y2="185.12" stroke="#fff" stroke-width="2.6999999999999997" stroke-linecap="round"/><line x1="133.0" y1="179.0" x2="128.67250649913834" y2="183.32749350086166" stroke="#fff" stroke-width="2.6999999999999997" stroke-linecap="round"/><line x1="133.0" y1="179.0" x2="126.88" y2="179.0" stroke="#fff" stroke-width="2.6999999999999997" stroke-linecap="round"/><line x1="133.0" y1="179.0" x2="128.67250649913834" y2="174.67250649913834" stroke="#fff" stroke-width="2.6999999999999997" stroke-linecap="round"/><line x1="133.0" y1="179.0" x2="133.0" y2="172.88" stroke="#fff" stroke-width="2.6999999999999997" stroke-linecap="round"/><line x1="133.0" y1="179.0" x2="137.32749350086166" y2="174.67250649913834" stroke="#fff" stroke-width="2.6999999999999997" stroke-linecap="round"/><circle cx="133.0" cy="179.0" r="1.8" fill="#c9a200" stroke="none" stroke-width="2" /><path d="M165 146l13 33 13-33h15" fill="none" stroke="#2b3f55" stroke-width="3" /><circle cx="165" cy="145" r="4" fill="#fff" stroke="#2b3f55" stroke-width="2.2" /><circle cx="178" cy="174" r="4" fill="#fff" stroke="#2b3f55" stroke-width="2.2" /><circle cx="191" cy="145" r="4" fill="#fff" stroke="#2b3f55" stroke-width="2.2" /><circle cx="203" cy="145" r="4" fill="#fff" stroke="#2b3f55" stroke-width="2.2" /><rect x="190" y="170" width="18" height="18" rx="4" fill="#c9a200" stroke="none" stroke-width="2" /><line x1="199.0" y1="179.0" x2="205.12" y2="179.0" stroke="#fff" stroke-width="2.6999999999999997" stroke-linecap="round"/><line x1="199.0" y1="179.0" x2="203.32749350086166" y2="183.32749350086166" stroke="#fff" stroke-width="2.6999999999999997" stroke-linecap="round"/><line x1="199.0" y1="179.0" x2="199.0" y2="185.12" stroke="#fff" stroke-width="2.6999999999999997" stroke-linecap="round"/><line x1="199.0" y1="179.0" x2="194.67250649913834" y2="183.32749350086166" stroke="#fff" stroke-width="2.6999999999999997" stroke-linecap="round"/><line x1="199.0" y1="179.0" x2="192.88" y2="179.0" stroke="#fff" stroke-width="2.6999999999999997" stroke-linecap="round"/><line x1="199.0" y1="179.0" x2="194.67250649913834" y2="174.67250649913834" stroke="#fff" stroke-width="2.6999999999999997" stroke-linecap="round"/><line x1="199.0" y1="179.0" x2="199.0" y2="172.88" stroke="#fff" stroke-width="2.6999999999999997" stroke-linecap="round"/><line x1="199.0" y1="179.0" x2="203.32749350086166" y2="174.67250649913834" stroke="#fff" stroke-width="2.6999999999999997" stroke-linecap="round"/><circle cx="199.0" cy="179.0" r="1.8" fill="#c9a200" stroke="none" stroke-width="2" /><path d="M227 187c6-20 18-36 44-47-4 14-14 28-38 36l-6 11z" fill="#6f9ccd" stroke="#2b4f77" stroke-width="1.6" /><line x1="236" y1="172" x2="244" y2="170.0" stroke="#e0ecf8" stroke-width="1" /><line x1="241" y1="168" x2="249" y2="165.4" stroke="#e0ecf8" stroke-width="1" /><line x1="246" y1="164" x2="254" y2="160.8" stroke="#e0ecf8" stroke-width="1" /><line x1="251" y1="160" x2="259" y2="156.2" stroke="#e0ecf8" stroke-width="1" /><line x1="256" y1="156" x2="264" y2="151.6" stroke="#e0ecf8" stroke-width="1" /><line x1="261" y1="152" x2="269" y2="147.0" stroke="#e0ecf8" stroke-width="1" /><rect x="256" y="170" width="18" height="18" rx="4" fill="#c9a200" stroke="none" stroke-width="2" /><line x1="265.0" y1="179.0" x2="271.12" y2="179.0" stroke="#fff" stroke-width="2.6999999999999997" stroke-linecap="round"/><line x1="265.0" y1="179.0" x2="269.3274935008617" y2="183.32749350086166" stroke="#fff" stroke-width="2.6999999999999997" stroke-linecap="round"/><line x1="265.0" y1="179.0" x2="265.0" y2="185.12" stroke="#fff" stroke-width="2.6999999999999997" stroke-linecap="round"/><line x1="265.0" y1="179.0" x2="260.6725064991383" y2="183.32749350086166" stroke="#fff" stroke-width="2.6999999999999997" stroke-linecap="round"/><line x1="265.0" y1="179.0" x2="258.88" y2="179.0" stroke="#fff" stroke-width="2.6999999999999997" stroke-linecap="round"/><line x1="265.0" y1="179.0" x2="260.6725064991383" y2="174.67250649913834" stroke="#fff" stroke-width="2.6999999999999997" stroke-linecap="round"/><line x1="265.0" y1="179.0" x2="265.0" y2="172.88" stroke="#fff" stroke-width="2.6999999999999997" stroke-linecap="round"/><line x1="265.0" y1="179.0" x2="269.3274935008617" y2="174.67250649913834" stroke="#fff" stroke-width="2.6999999999999997" stroke-linecap="round"/><circle cx="265.0" cy="179.0" r="1.8" fill="#c9a200" stroke="none" stroke-width="2" /><rect x="298" y="152" width="37" height="22" rx="3" fill="#6d9bcb" stroke="#2d4e75" stroke-width="1.8" /><line x1="304" y1="145" x2="304" y2="152" stroke="#2d4e75" stroke-width="2" /><line x1="304" y1="174" x2="304" y2="180" stroke="#2d4e75" stroke-width="2" /><line x1="310" y1="145" x2="310" y2="152" stroke="#2d4e75" stroke-width="2" /><line x1="310" y1="174" x2="310" y2="180" stroke="#2d4e75" stroke-width="2" /><line x1="316" y1="145" x2="316" y2="152" stroke="#2d4e75" stroke-width="2" /><line x1="316" y1="174" x2="316" y2="180" stroke="#2d4e75" stroke-width="2" /><line x1="322" y1="145" x2="322" y2="152" stroke="#2d4e75" stroke-width="2" /><line x1="322" y1="174" x2="322" y2="180" stroke="#2d4e75" stroke-width="2" /><line x1="328" y1="145" x2="328" y2="152" stroke="#2d4e75" stroke-width="2" /><line x1="328" y1="174" x2="328" y2="180" stroke="#2d4e75" stroke-width="2" /><rect x="322" y="170" width="18" height="18" rx="4" fill="#c9a200" stroke="none" stroke-width="2" /><line x1="331.0" y1="179.0" x2="337.12" y2="179.0" stroke="#fff" stroke-width="2.6999999999999997" stroke-linecap="round"/><line x1="331.0" y1="179.0" x2="335.3274935008617" y2="183.32749350086166" stroke="#fff" stroke-width="2.6999999999999997" stroke-linecap="round"/><line x1="331.0" y1="179.0" x2="331.0" y2="185.12" stroke="#fff" stroke-width="2.6999999999999997" stroke-linecap="round"/><line x1="331.0" y1="179.0" x2="326.6725064991383" y2="183.32749350086166" stroke="#fff" stroke-width="2.6999999999999997" stroke-linecap="round"/><line x1="331.0" y1="179.0" x2="324.88" y2="179.0" stroke="#fff" stroke-width="2.6999999999999997" stroke-linecap="round"/><line x1="331.0" y1="179.0" x2="326.6725064991383" y2="174.67250649913834" stroke="#fff" stroke-width="2.6999999999999997" stroke-linecap="round"/><line x1="331.0" y1="179.0" x2="331.0" y2="172.88" stroke="#fff" stroke-width="2.6999999999999997" stroke-linecap="round"/><line x1="331.0" y1="179.0" x2="335.3274935008617" y2="174.67250649913834" stroke="#fff" stroke-width="2.6999999999999997" stroke-linecap="round"/><circle cx="331.0" cy="179.0" r="1.8" fill="#c9a200" stroke="none" stroke-width="2" /><rect x="361" y="142" width="43" height="43" rx="0" fill="#6d9bcb" stroke="#2d4e75" stroke-width="2.2" /><path d="M361 167h43M382 142v43M361 142l21 25M382 142l-21 25M404 142l-22 25M361 176h21M371 167v18" fill="none" stroke="#2d4e75" stroke-width="2" /><rect x="388" y="170" width="18" height="18" rx="4" fill="#c9a200" stroke="none" stroke-width="2" /><line x1="397.0" y1="179.0" x2="403.12" y2="179.0" stroke="#fff" stroke-width="2.6999999999999997" stroke-linecap="round"/><line x1="397.0" y1="179.0" x2="401.3274935008617" y2="183.32749350086166" stroke="#fff" stroke-width="2.6999999999999997" stroke-linecap="round"/><line x1="397.0" y1="179.0" x2="397.0" y2="185.12" stroke="#fff" stroke-width="2.6999999999999997" stroke-linecap="round"/><line x1="397.0" y1="179.0" x2="392.6725064991383" y2="183.32749350086166" stroke="#fff" stroke-width="2.6999999999999997" stroke-linecap="round"/><line x1="397.0" y1="179.0" x2="390.88" y2="179.0" stroke="#fff" stroke-width="2.6999999999999997" stroke-linecap="round"/><line x1="397.0" y1="179.0" x2="392.6725064991383" y2="174.67250649913834" stroke="#fff" stroke-width="2.6999999999999997" stroke-linecap="round"/><line x1="397.0" y1="179.0" x2="397.0" y2="172.88" stroke="#fff" stroke-width="2.6999999999999997" stroke-linecap="round"/><line x1="397.0" y1="179.0" x2="401.3274935008617" y2="174.67250649913834" stroke="#fff" stroke-width="2.6999999999999997" stroke-linecap="round"/><circle cx="397.0" cy="179.0" r="1.8" fill="#c9a200" stroke="none" stroke-width="2" /><rect x="426" y="142" width="43" height="43" rx="3" fill="#c2d3ea" stroke="#33557a" stroke-width="1.8" /><path d="M429 145l11 30 14-30h13" fill="none" stroke="#33557a" stroke-width="2.6" /><circle cx="429" cy="145" r="3.5" fill="#fff" stroke="#33557a" stroke-width="1.6" /><circle cx="440" cy="175" r="3.5" fill="#fff" stroke="#33557a" stroke-width="1.6" /><circle cx="454" cy="145" r="3.5" fill="#fff" stroke="#33557a" stroke-width="1.6" /><rect x="454" y="170" width="18" height="18" rx="4" fill="#c9a200" stroke="none" stroke-width="2" /><line x1="463.0" y1="179.0" x2="469.12" y2="179.0" stroke="#fff" stroke-width="2.6999999999999997" stroke-linecap="round"/><line x1="463.0" y1="179.0" x2="467.3274935008617" y2="183.32749350086166" stroke="#fff" stroke-width="2.6999999999999997" stroke-linecap="round"/><line x1="463.0" y1="179.0" x2="463.0" y2="185.12" stroke="#fff" stroke-width="2.6999999999999997" stroke-linecap="round"/><line x1="463.0" y1="179.0" x2="458.6725064991383" y2="183.32749350086166" stroke="#fff" stroke-width="2.6999999999999997" stroke-linecap="round"/><line x1="463.0" y1="179.0" x2="456.88" y2="179.0" stroke="#fff" stroke-width="2.6999999999999997" stroke-linecap="round"/><line x1="463.0" y1="179.0" x2="458.6725064991383" y2="174.67250649913834" stroke="#fff" stroke-width="2.6999999999999997" stroke-linecap="round"/><line x1="463.0" y1="179.0" x2="463.0" y2="172.88" stroke="#fff" stroke-width="2.6999999999999997" stroke-linecap="round"/><line x1="463.0" y1="179.0" x2="467.3274935008617" y2="174.67250649913834" stroke="#fff" stroke-width="2.6999999999999997" stroke-linecap="round"/><circle cx="463.0" cy="179.0" r="1.8" fill="#c9a200" stroke="none" stroke-width="2" /><rect x="497" y="147" width="2.2" height="2.2" rx="0" fill="#b0b0b0" stroke="none" stroke-width="2" /><rect x="503" y="147" width="2.2" height="2.2" rx="0" fill="#b0b0b0" stroke="none" stroke-width="2" /><rect x="497" y="153" width="2.2" height="2.2" rx="0" fill="#b0b0b0" stroke="none" stroke-width="2" /><rect x="503" y="153" width="2.2" height="2.2" rx="0" fill="#b0b0b0" stroke="none" stroke-width="2" /><rect x="497" y="159" width="2.2" height="2.2" rx="0" fill="#b0b0b0" stroke="none" stroke-width="2" /><rect x="503" y="159" width="2.2" height="2.2" rx="0" fill="#b0b0b0" stroke="none" stroke-width="2" /><rect x="497" y="165" width="2.2" height="2.2" rx="0" fill="#b0b0b0" stroke="none" stroke-width="2" /><rect x="503" y="165" width="2.2" height="2.2" rx="0" fill="#b0b0b0" stroke="none" stroke-width="2" /><rect x="497" y="171" width="2.2" height="2.2" rx="0" fill="#b0b0b0" stroke="none" stroke-width="2" /><rect x="503" y="171" width="2.2" height="2.2" rx="0" fill="#b0b0b0" stroke="none" stroke-width="2" /><rect x="497" y="177" width="2.2" height="2.2" rx="0" fill="#b0b0b0" stroke="none" stroke-width="2" /><rect x="503" y="177" width="2.2" height="2.2" rx="0" fill="#b0b0b0" stroke="none" stroke-width="2" /><g transform="translate(528 182) rotate(-60)"><path d="M0 0l10-5h30v10h-30z" fill="#dcdad6" stroke="#c9c7c2" stroke-width="1.4" /><path d="M0 0l10-5v10z" fill="#e8e8e8" stroke="#c9c7c2" stroke-width="1.2" /><path d="M0 0l4-2v4z" fill="#ccc" stroke="none" stroke-width="2" /><line x1="40" y1="-5" x2="40" y2="5" stroke="#eee" stroke-width="1" /><rect x="40" y="-5" width="5" height="10" rx="0" fill="#f4f4f4" stroke="#c9c7c2" stroke-width="1.2" /></g><g transform="translate(537 187) rotate(-60)"><path d="M0 0l10-5h30v10h-30z" fill="#dcdad6" stroke="#c9c7c2" stroke-width="1.4" /><path d="M0 0l10-5v10z" fill="#e8e8e8" stroke="#c9c7c2" stroke-width="1.2" /><path d="M0 0l4-2v4z" fill="#ccc" stroke="none" stroke-width="2" /><line x1="40" y1="-5" x2="40" y2="5" stroke="#eee" stroke-width="1" /><rect x="40" y="-5" width="5" height="10" rx="0" fill="#f4f4f4" stroke="#c9c7c2" stroke-width="1.2" /></g><path d="M562 183h12l-6.0 6.6000000000000005z" fill="#555" stroke="none" stroke-width="2" /><g transform="translate(596 187) rotate(-60)"><path d="M0 0l10-5h32v10h-32z" fill="#f2d83a" stroke="#8a7a10" stroke-width="1.4" /><path d="M0 0l10-5v10z" fill="#ddd" stroke="#8a7a10" stroke-width="1.2" /><path d="M0 0l4-2v4z" fill="#444" stroke="none" stroke-width="2" /><line x1="42" y1="-5" x2="42" y2="5" stroke="#eee" stroke-width="1" /><rect x="42" y="-5" width="5" height="10" rx="0" fill="#f4f4f4" stroke="#8a7a10" stroke-width="1.2" /><line x1="12" y1="-1.5" x2="40" y2="-1.5" stroke="#fff6a0" stroke-width="1.5" /></g><rect x="657" y="143" width="39" height="38" rx="4" fill="#dcdcdc" stroke="#cfcfcf" stroke-width="2" /><rect x="664" y="145" width="24" height="13" rx="0" fill="#f0f0f0" stroke="#cfcfcf" stroke-width="1" /><rect x="666" y="168" width="22" height="13" rx="0" fill="#eee" stroke="#cfcfcf" stroke-width="1" /><rect x="668" y="170" width="5" height="7" rx="0" fill="#d0d0d0" stroke="none" stroke-width="2" /><g transform="translate(681 187) rotate(-60)"><path d="M0 0l10-5h18v10h-18z" fill="#dcdad6" stroke="#c9c7c2" stroke-width="1.4" /><path d="M0 0l10-5v10z" fill="#e8e8e8" stroke="#c9c7c2" stroke-width="1.2" /><path d="M0 0l4-2v4z" fill="#ccc" stroke="none" stroke-width="2" /><line x1="28" y1="-5" x2="28" y2="5" stroke="#eee" stroke-width="1" /><rect x="28" y="-5" width="5" height="10" rx="0" fill="#f4f4f4" stroke="#c9c7c2" stroke-width="1.2" /></g><line x1="726" y1="180" x2="760" y2="148" stroke="#dadada" stroke-width="3" stroke-dasharray="6 4"/><rect x="724" y="177" width="6" height="6" rx="0" fill="none" stroke="#cdcdcd" stroke-width="2" /><rect x="757" y="145" width="6" height="6" rx="0" fill="none" stroke="#cdcdcd" stroke-width="2" /><path d="M781 160h14l-7.0 7.700000000000001z" fill="#555" stroke="none" stroke-width="2" /><path d="M815 147l14 32 12-33h12" fill="none" stroke="#d4d4d0" stroke-width="2.5" /><rect x="811.5" y="142.5" width="7" height="7" rx="0" fill="#f2f2f2" stroke="#cdcdcd" stroke-width="1.8" /><rect x="823.5" y="166.5" width="7" height="7" rx="0" fill="#f2f2f2" stroke="#cdcdcd" stroke-width="1.8" /><rect x="836.5" y="146.5" width="7" height="7" rx="0" fill="#f2f2f2" stroke="#cdcdcd" stroke-width="1.8" /><rect x="848.5" y="146.5" width="7" height="7" rx="0" fill="#f2f2f2" stroke="#cdcdcd" stroke-width="1.8" /><rect x="836" y="166" width="21" height="21" rx="4" fill="#c8c8c0" stroke="none" stroke-width="2" /><rect x="837" y="167" width="19" height="9.5" rx="3" fill="#d8d8d0" stroke="none" stroke-width="2" opacity="0.6"/><line x1="846.5" y1="176.5" x2="846.5" y2="184.06" stroke="#fff" stroke-width="2.52" /><line x1="846.5" y1="176.5" x2="839.9528479473896" y2="180.28" stroke="#fff" stroke-width="2.52" /><line x1="846.5" y1="176.5" x2="839.9528479473896" y2="172.72" stroke="#fff" stroke-width="2.52" /><line x1="846.5" y1="176.5" x2="846.5" y2="168.94" stroke="#fff" stroke-width="2.52" /><line x1="846.5" y1="176.5" x2="853.0471520526104" y2="172.72" stroke="#fff" stroke-width="2.52" /><line x1="846.5" y1="176.5" x2="853.0471520526104" y2="180.28" stroke="#fff" stroke-width="2.52" /><circle cx="846.5" cy="176.5" r="4.2" fill="#fff" stroke="none" stroke-width="2" /><circle cx="846.5" cy="176.5" r="1.68" fill="#c8c8c0" stroke="none" stroke-width="2" /><rect x="886" y="146" width="10" height="10" rx="0" fill="#f2f2f2" stroke="#cdcdcd" stroke-width="2" /><path d="M886 146l10 10M896 146l-10 10" fill="none" stroke="#cdcdcd" stroke-width="1.5" /><line x1="896" y1="151" x2="918" y2="151" stroke="#d4d4d4" stroke-width="2" /><line x1="891" y1="156" x2="882" y2="183" stroke="#d4d4d4" stroke-width="2" /><line x1="897" y1="162" x2="916" y2="184" stroke="#ddd9d0" stroke-width="6" stroke-linecap="round"/><line x1="905" y1="180" x2="921" y2="160" stroke="#ddd9d0" stroke-width="4" stroke-linecap="round"/><path d="M937 160h14l-7.0 7.700000000000001z" fill="#555" stroke="none" stroke-width="2" /><rect x="970" y="144" width="40" height="13" rx="0" fill="#e2e0d6" stroke="#d3d1c8" stroke-width="1.5" /><rect x="970" y="158" width="40" height="13" rx="0" fill="#e2e0d6" stroke="#d3d1c8" stroke-width="1.5" /><rect x="970" y="172" width="40" height="13" rx="0" fill="#e2e0d6" stroke="#d3d1c8" stroke-width="1.5" /><g transform="translate(982 187) rotate(-60)"><path d="M0 0l10-5h26v10h-26z" fill="#dcdad6" stroke="#c9c7c2" stroke-width="1.4" /><path d="M0 0l10-5v10z" fill="#e8e8e8" stroke="#c9c7c2" stroke-width="1.2" /><path d="M0 0l4-2v4z" fill="#ccc" stroke="none" stroke-width="2" /><line x1="36" y1="-5" x2="36" y2="5" stroke="#eee" stroke-width="1" /><rect x="36" y="-5" width="5" height="10" rx="0" fill="#f4f4f4" stroke="#c9c7c2" stroke-width="1.2" /></g><rect x="1037" y="144" width="28" height="27" rx="0" fill="#e4e2da" stroke="#d6d4cc" stroke-width="1.5" /><path d="M1041 150h32M1044 152l2 32h20l2-32z" fill="#e8dcdc" stroke="#d8c8c8" stroke-width="3" /><path d="M1052 156v26M1059 156v26" fill="none" stroke="#e0d2d2" stroke-width="2" /><path d="M1101 149c10 3 24 10 35 17M1100 161c12-1 22-4 36-7" fill="none" stroke="#cfcfcf" stroke-width="2" /><circle cx="1141" cy="151" r="4.5" fill="none" stroke="#d2c4c4" stroke-width="2.5" /><circle cx="1141" cy="168" r="4.5" fill="none" stroke="#d2c4c4" stroke-width="2.5" /><path d="M1180 144h13l6 6v22h-19z" fill="#f4f4f4" stroke="#d6d6d6" stroke-width="1.5" /><path d="M1172 152h13l6 6v26h-19z" fill="#f8f8f8" stroke="#c8c8c8" stroke-width="2" /><line x1="1175" y1="165" x2="1188" y2="165" stroke="#cfcfcf" stroke-width="1.5" /><line x1="1175" y1="170" x2="1188" y2="170" stroke="#cfcfcf" stroke-width="1.5" /><line x1="1175" y1="175" x2="1188" y2="175" stroke="#cfcfcf" stroke-width="1.5" /><line x1="1175" y1="180" x2="1188" y2="180" stroke="#cfcfcf" stroke-width="1.5" /><rect x="1238" y="144" width="30" height="40" rx="0" fill="#ebebeb" stroke="#cfcfcf" stroke-width="2" /><rect x="1245" y="142" width="16" height="7" rx="0" fill="#e0e0e0" stroke="#cfcfcf" stroke-width="1.2" /><path d="M1242 151h18l4 4v25h-22z" fill="#f6f6f6" stroke="#cdcdcd" stroke-width="1.5" /><line x1="1245" y1="160" x2="1260" y2="160" stroke="#cfcfcf" stroke-width="1.5" /><line x1="1245" y1="165" x2="1260" y2="165" stroke="#cfcfcf" stroke-width="1.5" /><line x1="1245" y1="170" x2="1260" y2="170" stroke="#cfcfcf" stroke-width="1.5" /><line x1="1245" y1="175" x2="1260" y2="175" stroke="#cfcfcf" stroke-width="1.5" /><path d="M1302 162l12-16v9c14 0 20 8 20 16 0 8-6 13-14 13l-2-5c6 0 9-3 9-7s-4-8-13-8v9z" fill="#dcd8d2" stroke="#d0ccc6" stroke-width="1" /><path d="M1402 162l-12-16v9c-14 0-20 8-20 16 0 8 6 13 14 13l2-5c-6 0-9-3-9-7s4-8 13-8v9z" fill="#dde0de" stroke="#d0d4d2" stroke-width="1" /><rect x="1437" y="147" width="2.2" height="2.2" rx="0" fill="#b0b0b0" stroke="none" stroke-width="2" /><rect x="1443" y="147" width="2.2" height="2.2" rx="0" fill="#b0b0b0" stroke="none" stroke-width="2" /><rect x="1437" y="153" width="2.2" height="2.2" rx="0" fill="#b0b0b0" stroke="none" stroke-width="2" /><rect x="1443" y="153" width="2.2" height="2.2" rx="0" fill="#b0b0b0" stroke="none" stroke-width="2" /><rect x="1437" y="159" width="2.2" height="2.2" rx="0" fill="#b0b0b0" stroke="none" stroke-width="2" /><rect x="1443" y="159" width="2.2" height="2.2" rx="0" fill="#b0b0b0" stroke="none" stroke-width="2" /><rect x="1437" y="165" width="2.2" height="2.2" rx="0" fill="#b0b0b0" stroke="none" stroke-width="2" /><rect x="1443" y="165" width="2.2" height="2.2" rx="0" fill="#b0b0b0" stroke="none" stroke-width="2" /><rect x="1437" y="171" width="2.2" height="2.2" rx="0" fill="#b0b0b0" stroke="none" stroke-width="2" /><rect x="1443" y="171" width="2.2" height="2.2" rx="0" fill="#b0b0b0" stroke="none" stroke-width="2" /><rect x="1437" y="177" width="2.2" height="2.2" rx="0" fill="#b0b0b0" stroke="none" stroke-width="2" /><rect x="1443" y="177" width="2.2" height="2.2" rx="0" fill="#b0b0b0" stroke="none" stroke-width="2" /><path d="M1461 159l8-9h33v19h-33z" fill="#fbe15c" stroke="#cfa800" stroke-width="1.8" /><text x="1468" y="166" font-family="Liberation Sans" font-size="16" fill="#222" font-weight="bold" >abc</text><circle cx="1543" cy="158" r="12" fill="#21a33a" stroke="#333" stroke-width="1.5" /><path d="M1543 158v-12a12 12 0 0 1 10.4 18z" fill="#c0201a" stroke="#333" stroke-width="1" /><path d="M1543 158v-12a12 12 0 0 0-10.4 18z" fill="#f0c419" stroke="#333" stroke-width="1" /><rect x="1548" y="172" width="7" height="13" rx="0" fill="#f8d840" stroke="#c9a000" stroke-width="1" /><rect x="1556" y="160" width="6" height="25" rx="0" fill="#2aa43e" stroke="#16602a" stroke-width="1" /><rect x="1563" y="175" width="7" height="10" rx="0" fill="#b01c1c" stroke="#701010" stroke-width="1" /><line x1="1590" y1="145" x2="1590" y2="182" stroke="#c8c8c8" stroke-width="2" /><path d="M1607 159l8-9h30v20h-30z" fill="#d7e6f8" stroke="#5b8fcf" stroke-width="1.8" /><text x="1613" y="166" font-family="Liberation Sans" font-size="16" fill="#222" font-weight="bold" >ab</text><path d="M1638 164v10" fill="none" stroke="#333" stroke-width="2" /><rect x="1636" y="160" width="5" height="10" rx="2" fill="#fff" stroke="#333" stroke-width="1.5" /><circle cx="1643" cy="177" r="9" fill="#a82020" stroke="#7a1010" stroke-width="1" /><circle cx="1640" cy="174" r="3" fill="#d86a6a" stroke="none" stroke-width="2" /><path d="M1674 159l8-9h32v20h-32z" fill="#fbdada" stroke="#e21b1b" stroke-width="2" /><text x="1682" y="166" font-family="Liberation Sans" font-size="16" fill="#e21b1b" font-weight="bold" >abc</text><line x1="1737" y1="145" x2="1737" y2="182" stroke="#c8c8c8" stroke-width="2" /><path d="M1772 157l6 6-6 6M1781 157l6 6-6 6" fill="none" stroke="#333" stroke-width="2.2" /><rect x="1806" y="147" width="2.2" height="2.2" rx="0" fill="#b0b0b0" stroke="none" stroke-width="2" /><rect x="1812" y="147" width="2.2" height="2.2" rx="0" fill="#b0b0b0" stroke="none" stroke-width="2" /><rect x="1806" y="153" width="2.2" height="2.2" rx="0" fill="#b0b0b0" stroke="none" stroke-width="2" /><rect x="1812" y="153" width="2.2" height="2.2" rx="0" fill="#b0b0b0" stroke="none" stroke-width="2" /><rect x="1806" y="159" width="2.2" height="2.2" rx="0" fill="#b0b0b0" stroke="none" stroke-width="2" /><rect x="1812" y="159" width="2.2" height="2.2" rx="0" fill="#b0b0b0" stroke="none" stroke-width="2" /><rect x="1806" y="165" width="2.2" height="2.2" rx="0" fill="#b0b0b0" stroke="none" stroke-width="2" /><rect x="1812" y="165" width="2.2" height="2.2" rx="0" fill="#b0b0b0" stroke="none" stroke-width="2" /><rect x="1806" y="171" width="2.2" height="2.2" rx="0" fill="#b0b0b0" stroke="none" stroke-width="2" /><rect x="1812" y="171" width="2.2" height="2.2" rx="0" fill="#b0b0b0" stroke="none" stroke-width="2" /><rect x="1806" y="177" width="2.2" height="2.2" rx="0" fill="#b0b0b0" stroke="none" stroke-width="2" /><rect x="1812" y="177" width="2.2" height="2.2" rx="0" fill="#b0b0b0" stroke="none" stroke-width="2" /><defs><radialGradient id="gg" cx="0.45" cy="0.4" r="0.6"><stop offset="0" stop-color="#f4f4f4"/><stop offset="0.6" stop-color="#9a9a9a"/><stop offset="1" stop-color="#4a4a4a"/></radialGradient></defs><circle cx="1854" cy="162" r="23" fill="url(#gg)" stroke="#4a80c4" stroke-width="2.2" /><path d="M1854 139a9 23 0 0 1 0 46a9 23 0 0 1 0-46z" fill="#5d95d8" stroke="#3a70b8" stroke-width="1" /><path d="M1834 152h40M1831 162h46M1834 172h40M1854 139v46" fill="none" stroke="#5d95d8" stroke-width="2" /><path d="M1854 139a18 23 0 0 1 0 46a18 23 0 0 1 0-46z" fill="none" stroke="#5d95d8" stroke-width="1.6" /><circle cx="1854" cy="162" r="23" fill="none" stroke="#4a80c4" stroke-width="2.2" /><rect x="1858" y="170" width="19" height="19" rx="4" fill="#4f8f4f" stroke="none" stroke-width="2" /><rect x="1865.98" y="173.42" width="3.04" height="12.16" rx="0" fill="#fff" stroke="none" stroke-width="2" /><rect x="1861.42" y="177.98" width="12.16" height="3.04" rx="0" fill="#fff" stroke="none" stroke-width="2" /><path d="M1872 184h10l-5.0 5.5z" fill="#333" stroke="none" stroke-width="2" /><path d="M1896 157l6 6-6 6M1905 157l6 6-6 6" fill="none" stroke="#333" stroke-width="2.2" /><rect x="1930" y="147" width="2.2" height="2.2" rx="0" fill="#b0b0b0" stroke="none" stroke-width="2" /><rect x="1936" y="147" width="2.2" height="2.2" rx="0" fill="#b0b0b0" stroke="none" stroke-width="2" /><rect x="1930" y="153" width="2.2" height="2.2" rx="0" fill="#b0b0b0" stroke="none" stroke-width="2" /><rect x="1936" y="153" width="2.2" height="2.2" rx="0" fill="#b0b0b0" stroke="none" stroke-width="2" /><rect x="1930" y="159" width="2.2" height="2.2" rx="0" fill="#b0b0b0" stroke="none" stroke-width="2" /><rect x="1936" y="159" width="2.2" height="2.2" rx="0" fill="#b0b0b0" stroke="none" stroke-width="2" /><rect x="1930" y="165" width="2.2" height="2.2" rx="0" fill="#b0b0b0" stroke="none" stroke-width="2" /><rect x="1936" y="165" width="2.2" height="2.2" rx="0" fill="#b0b0b0" stroke="none" stroke-width="2" /><rect x="1930" y="171" width="2.2" height="2.2" rx="0" fill="#b0b0b0" stroke="none" stroke-width="2" /><rect x="1936" y="171" width="2.2" height="2.2" rx="0" fill="#b0b0b0" stroke="none" stroke-width="2" /><rect x="1930" y="177" width="2.2" height="2.2" rx="0" fill="#b0b0b0" stroke="none" stroke-width="2" /><rect x="1936" y="177" width="2.2" height="2.2" rx="0" fill="#b0b0b0" stroke="none" stroke-width="2" /><g transform="translate(1979 164) scale(0.74 1) translate(-1979 -164)"><path d="M1978 143c-10 0-13 4-13 9v6h14v2h-19c-6 0-9 5-9 12s3 12 9 12h5v-7c0-5 4-9 9-9h13c4 0 7-3 7-7v-9c0-5-5-9-16-9z" fill="#3a74a8" stroke="none" stroke-width="2" /><path d="M1981 186c10 0 13-4 13-9v-6h-14v-2h19c6 0 9-5 9-12s-3-12-9-12h-5v7c0 5-4 9-9 9h-13c-4 0-7 3-7 7v9c0 5 5 9 16 9z" fill="#f7d141" stroke="none" stroke-width="2" /><circle cx="1972" cy="149" r="2" fill="#fff" stroke="none" stroke-width="2" /><circle cx="1987" cy="180" r="2" fill="#fff" stroke="none" stroke-width="2" /><path d="M1985 178l12 5-12 5" fill="none" stroke="#444" stroke-width="2.2" /></g><path d="M2020 157l6 6-6 6M2029 157l6 6-6 6" fill="none" stroke="#333" stroke-width="2.2" /><rect x="2054" y="147" width="2.2" height="2.2" rx="0" fill="#b0b0b0" stroke="none" stroke-width="2" /><rect x="2060" y="147" width="2.2" height="2.2" rx="0" fill="#b0b0b0" stroke="none" stroke-width="2" /><rect x="2054" y="153" width="2.2" height="2.2" rx="0" fill="#b0b0b0" stroke="none" stroke-width="2" /><rect x="2060" y="153" width="2.2" height="2.2" rx="0" fill="#b0b0b0" stroke="none" stroke-width="2" /><rect x="2054" y="159" width="2.2" height="2.2" rx="0" fill="#b0b0b0" stroke="none" stroke-width="2" /><rect x="2060" y="159" width="2.2" height="2.2" rx="0" fill="#b0b0b0" stroke="none" stroke-width="2" /><rect x="2054" y="165" width="2.2" height="2.2" rx="0" fill="#b0b0b0" stroke="none" stroke-width="2" /><rect x="2060" y="165" width="2.2" height="2.2" rx="0" fill="#b0b0b0" stroke="none" stroke-width="2" /><rect x="2054" y="171" width="2.2" height="2.2" rx="0" fill="#b0b0b0" stroke="none" stroke-width="2" /><rect x="2060" y="171" width="2.2" height="2.2" rx="0" fill="#b0b0b0" stroke="none" stroke-width="2" /><rect x="2054" y="177" width="2.2" height="2.2" rx="0" fill="#b0b0b0" stroke="none" stroke-width="2" /><rect x="2060" y="177" width="2.2" height="2.2" rx="0" fill="#b0b0b0" stroke="none" stroke-width="2" /><rect x="2082" y="143" width="41" height="41" rx="0" fill="#6c9bcb" stroke="#22303e" stroke-width="2.4" /><rect x="2083" y="144" width="9" height="39" rx="0" fill="#2e3f52" stroke="none" stroke-width="2" /><text x="2099" y="173" font-family="Liberation Sans" font-size="26" fill="#fff" font-weight="normal" >?</text><rect x="2151" y="147" width="2.2" height="2.2" rx="0" fill="#b0b0b0" stroke="none" stroke-width="2" /><rect x="2157" y="147" width="2.2" height="2.2" rx="0" fill="#b0b0b0" stroke="none" stroke-width="2" /><rect x="2151" y="153" width="2.2" height="2.2" rx="0" fill="#b0b0b0" stroke="none" stroke-width="2" /><rect x="2157" y="153" width="2.2" height="2.2" rx="0" fill="#b0b0b0" stroke="none" stroke-width="2" /><rect x="2151" y="159" width="2.2" height="2.2" rx="0" fill="#b0b0b0" stroke="none" stroke-width="2" /><rect x="2157" y="159" width="2.2" height="2.2" rx="0" fill="#b0b0b0" stroke="none" stroke-width="2" /><rect x="2151" y="165" width="2.2" height="2.2" rx="0" fill="#b0b0b0" stroke="none" stroke-width="2" /><rect x="2157" y="165" width="2.2" height="2.2" rx="0" fill="#b0b0b0" stroke="none" stroke-width="2" /><rect x="2151" y="171" width="2.2" height="2.2" rx="0" fill="#b0b0b0" stroke="none" stroke-width="2" /><rect x="2157" y="171" width="2.2" height="2.2" rx="0" fill="#b0b0b0" stroke="none" stroke-width="2" /><rect x="2151" y="177" width="2.2" height="2.2" rx="0" fill="#b0b0b0" stroke="none" stroke-width="2" /><rect x="2157" y="177" width="2.2" height="2.2" rx="0" fill="#b0b0b0" stroke="none" stroke-width="2" /><rect x="4" y="224" width="2.2" height="2.2" rx="0" fill="#b0b0b0" stroke="none" stroke-width="2" /><rect x="10" y="224" width="2.2" height="2.2" rx="0" fill="#b0b0b0" stroke="none" stroke-width="2" /><rect x="4" y="230" width="2.2" height="2.2" rx="0" fill="#b0b0b0" stroke="none" stroke-width="2" /><rect x="10" y="230" width="2.2" height="2.2" rx="0" fill="#b0b0b0" stroke="none" stroke-width="2" /><rect x="4" y="236" width="2.2" height="2.2" rx="0" fill="#b0b0b0" stroke="none" stroke-width="2" /><rect x="10" y="236" width="2.2" height="2.2" rx="0" fill="#b0b0b0" stroke="none" stroke-width="2" /><rect x="4" y="242" width="2.2" height="2.2" rx="0" fill="#b0b0b0" stroke="none" stroke-width="2" /><rect x="10" y="242" width="2.2" height="2.2" rx="0" fill="#b0b0b0" stroke="none" stroke-width="2" /><rect x="4" y="248" width="2.2" height="2.2" rx="0" fill="#b0b0b0" stroke="none" stroke-width="2" /><rect x="10" y="248" width="2.2" height="2.2" rx="0" fill="#b0b0b0" stroke="none" stroke-width="2" /><rect x="4" y="254" width="2.2" height="2.2" rx="0" fill="#b0b0b0" stroke="none" stroke-width="2" /><rect x="10" y="254" width="2.2" height="2.2" rx="0" fill="#b0b0b0" stroke="none" stroke-width="2" /><defs><linearGradient id="gs" x1="0" y1="0" x2="1" y2="1"><stop offset="0" stop-color="#6aa84f"/><stop offset="1" stop-color="#9cd576"/></linearGradient></defs><rect x="28" y="218" width="48" height="48" rx="0" fill="url(#gs)" stroke="none" stroke-width="2" /><path d="M28 266l48-48v48z" fill="#8ccf6a" stroke="none" stroke-width="0" opacity="0.35"/><circle cx="56" cy="236" r="13" fill="none" stroke="#f0f4f8" stroke-width="4.5" /><line x1="47" y1="246" x2="34" y2="259" stroke="#f0f4f8" stroke-width="6" stroke-linecap="round"/><rect x="94" y="218" width="43" height="47" rx="0" fill="#f8c93a" stroke="none" stroke-width="2" /><path d="M94 218h6v40h-6z" fill="#a3195b" stroke="none" stroke-width="2" /><path d="M114 218c4 10-2 18 10 24 8 4 6 14 12 23h-6c-4-8-4-14-12-18-10-6-4-16-8-29z" fill="#3f7ad8" stroke="none" stroke-width="2" /><path d="M96 225l12 4-12 4z" fill="#3ba84a" stroke="none" stroke-width="2" /><rect x="110" y="245" width="6" height="10" rx="0" fill="#2a6e82" stroke="none" stroke-width="2" /><rect x="99" y="238" width="6" height="14" rx="0" fill="#c57ca0" stroke="none" stroke-width="2" /><path d="M95 262c8-6 20-10 30-6 4 2 8 4 12 2" fill="none" stroke="#2f6fd0" stroke-width="4" /><line x1="104" y1="257" x2="138" y2="225" stroke="#7a3d12" stroke-width="7" stroke-linecap="round"/><line x1="104" y1="257" x2="138" y2="225" stroke="#a85a20" stroke-width="4" stroke-linecap="round"/><rect x="167" y="224" width="2.2" height="2.2" rx="0" fill="#b0b0b0" stroke="none" stroke-width="2" /><rect x="173" y="224" width="2.2" height="2.2" rx="0" fill="#b0b0b0" stroke="none" stroke-width="2" /><rect x="167" y="230" width="2.2" height="2.2" rx="0" fill="#b0b0b0" stroke="none" stroke-width="2" /><rect x="173" y="230" width="2.2" height="2.2" rx="0" fill="#b0b0b0" stroke="none" stroke-width="2" /><rect x="167" y="236" width="2.2" height="2.2" rx="0" fill="#b0b0b0" stroke="none" stroke-width="2" /><rect x="173" y="236" width="2.2" height="2.2" rx="0" fill="#b0b0b0" stroke="none" stroke-width="2" /><rect x="167" y="242" width="2.2" height="2.2" rx="0" fill="#b0b0b0" stroke="none" stroke-width="2" /><rect x="173" y="242" width="2.2" height="2.2" rx="0" fill="#b0b0b0" stroke="none" stroke-width="2" /><rect x="167" y="248" width="2.2" height="2.2" rx="0" fill="#b0b0b0" stroke="none" stroke-width="2" /><rect x="173" y="248" width="2.2" height="2.2" rx="0" fill="#b0b0b0" stroke="none" stroke-width="2" /><rect x="167" y="254" width="2.2" height="2.2" rx="0" fill="#b0b0b0" stroke="none" stroke-width="2" /><rect x="173" y="254" width="2.2" height="2.2" rx="0" fill="#b0b0b0" stroke="none" stroke-width="2" /><circle cx="216" cy="242" r="24" fill="#0e5576" stroke="none" stroke-width="2" /><rect x="203" y="227" width="26" height="26" rx="5" fill="#fff" stroke="none" stroke-width="2" /><rect x="206" y="233" width="20" height="9" rx="1" fill="#0e5576" stroke="none" stroke-width="2" /><rect x="210" y="229" width="12" height="2" rx="0" fill="#0e5576" stroke="none" stroke-width="2" /><rect x="205" y="252" width="6" height="6" rx="1" fill="#fff" stroke="none" stroke-width="2" /><rect x="221" y="252" width="6" height="6" rx="1" fill="#fff" stroke="none" stroke-width="2" /><circle cx="209" cy="247" r="2" fill="#0e5576" stroke="none" stroke-width="2" /><circle cx="223" cy="247" r="2" fill="#0e5576" stroke="none" stroke-width="2" /><rect x="264" y="224" width="2.2" height="2.2" rx="0" fill="#b0b0b0" stroke="none" stroke-width="2" /><rect x="270" y="224" width="2.2" height="2.2" rx="0" fill="#b0b0b0" stroke="none" stroke-width="2" /><rect x="264" y="230" width="2.2" height="2.2" rx="0" fill="#b0b0b0" stroke="none" stroke-width="2" /><rect x="270" y="230" width="2.2" height="2.2" rx="0" fill="#b0b0b0" stroke="none" stroke-width="2" /><rect x="264" y="236" width="2.2" height="2.2" rx="0" fill="#b0b0b0" stroke="none" stroke-width="2" /><rect x="270" y="236" width="2.2" height="2.2" rx="0" fill="#b0b0b0" stroke="none" stroke-width="2" /><rect x="264" y="242" width="2.2" height="2.2" rx="0" fill="#b0b0b0" stroke="none" stroke-width="2" /><rect x="270" y="242" width="2.2" height="2.2" rx="0" fill="#b0b0b0" stroke="none" stroke-width="2" /><rect x="264" y="248" width="2.2" height="2.2" rx="0" fill="#b0b0b0" stroke="none" stroke-width="2" /><rect x="270" y="248" width="2.2" height="2.2" rx="0" fill="#b0b0b0" stroke="none" stroke-width="2" /><rect x="264" y="254" width="2.2" height="2.2" rx="0" fill="#b0b0b0" stroke="none" stroke-width="2" /><rect x="270" y="254" width="2.2" height="2.2" rx="0" fill="#b0b0b0" stroke="none" stroke-width="2" /><path d="M296 223h8M296 223v30M330 223v35M310 233h24M312 253h20M306 259h20" fill="none" stroke="#d0c0ff" stroke-width="1" /><path d="M306 233h6M312 233v15M322 240h12" fill="none" stroke="#f08080" stroke-width="1" /><path d="M330 223v28M310 250h22" fill="none" stroke="#80d080" stroke-width="1" /><text x="290" y="251" font-family="Liberation Sans" font-size="21" fill="#44505a" font-weight="bold" >GTFS</text><rect x="363" y="224" width="2.2" height="2.2" rx="0" fill="#b0b0b0" stroke="none" stroke-width="2" /><rect x="369" y="224" width="2.2" height="2.2" rx="0" fill="#b0b0b0" stroke="none" stroke-width="2" /><rect x="363" y="230" width="2.2" height="2.2" rx="0" fill="#b0b0b0" stroke="none" stroke-width="2" /><rect x="369" y="230" width="2.2" height="2.2" rx="0" fill="#b0b0b0" stroke="none" stroke-width="2" /><rect x="363" y="236" width="2.2" height="2.2" rx="0" fill="#b0b0b0" stroke="none" stroke-width="2" /><rect x="369" y="236" width="2.2" height="2.2" rx="0" fill="#b0b0b0" stroke="none" stroke-width="2" /><rect x="363" y="242" width="2.2" height="2.2" rx="0" fill="#b0b0b0" stroke="none" stroke-width="2" /><rect x="369" y="242" width="2.2" height="2.2" rx="0" fill="#b0b0b0" stroke="none" stroke-width="2" /><rect x="363" y="248" width="2.2" height="2.2" rx="0" fill="#b0b0b0" stroke="none" stroke-width="2" /><rect x="369" y="248" width="2.2" height="2.2" rx="0" fill="#b0b0b0" stroke="none" stroke-width="2" /><rect x="363" y="254" width="2.2" height="2.2" rx="0" fill="#b0b0b0" stroke="none" stroke-width="2" /><rect x="369" y="254" width="2.2" height="2.2" rx="0" fill="#b0b0b0" stroke="none" stroke-width="2" /><rect x="391" y="221" width="43" height="43" rx="0" fill="#e4e4e4" stroke="#333" stroke-width="1.5" stroke-dasharray="3 2"/><rect x="393" y="223" width="27" height="26" rx="0" fill="#fbe25a" stroke="#c9a300" stroke-width="1.8" /><path d="M0 0v26l6-6 6 11 4-2-6-11h9z" fill="#fff" stroke="#000" stroke-width="1.8" stroke-linejoin="round" transform="translate(410 234) scale(1.05)"/><path d="M448 240h14l-7.0 7.700000000000001z" fill="#555" stroke="none" stroke-width="2" /><rect x="497" y="234" width="24" height="27" rx="0" fill="#fbe25a" stroke="#c9a300" stroke-width="1.8" /><rect x="484" y="224" width="29" height="30" rx="0" fill="#dcdcdc" stroke="#888" stroke-width="2" /><rect x="488" y="229" width="21" height="7" rx="0" fill="#eee" stroke="#999" stroke-width="1.5" /><rect x="488" y="241" width="21" height="7" rx="0" fill="#eee" stroke="#999" stroke-width="1.5" /><path d="M538 240h14l-7.0 7.700000000000001z" fill="#555" stroke="none" stroke-width="2" /><rect x="573" y="223" width="27" height="26" rx="0" fill="#fbe25a" stroke="#c9a300" stroke-width="1.8" /><rect x="581" y="231" width="27" height="26" rx="0" fill="#fbe25a" stroke="#c9a300" stroke-width="1.8" /><rect x="597" y="244" width="21" height="21" rx="3" fill="#e0201a" stroke="#a01010" stroke-width="1" /><circle cx="607.5" cy="254.5" r="6" fill="none" stroke="#fff" stroke-width="2" /><line x1="603" y1="259" x2="612" y2="250" stroke="#fff" stroke-width="2" /><path d="M628 240h14l-7.0 7.700000000000001z" fill="#555" stroke="none" stroke-width="2" /><rect x="663" y="223" width="27" height="26" rx="0" fill="#fbe25a" stroke="#c9a300" stroke-width="1.8" /><path d="M697 264c-5-8-8-12-8-16a8 8 0 0 1 16 0c0 4-3 8-8 16z" fill="#5b8fb8" stroke="#3b6a90" stroke-width="1.2" /><circle cx="697" cy="248" r="3" fill="#e8eef4" stroke="none" stroke-width="2" /><path d="M718 240h14l-7.0 7.700000000000001z" fill="#555" stroke="none" stroke-width="2" /><rect x="1903" y="226" width="2.2" height="2.2" rx="0" fill="#b0b0b0" stroke="none" stroke-width="2" /><rect x="1909" y="226" width="2.2" height="2.2" rx="0" fill="#b0b0b0" stroke="none" stroke-width="2" /><rect x="1903" y="232" width="2.2" height="2.2" rx="0" fill="#b0b0b0" stroke="none" stroke-width="2" /><rect x="1909" y="232" width="2.2" height="2.2" rx="0" fill="#b0b0b0" stroke="none" stroke-width="2" /><rect x="1903" y="238" width="2.2" height="2.2" rx="0" fill="#b0b0b0" stroke="none" stroke-width="2" /><rect x="1909" y="238" width="2.2" height="2.2" rx="0" fill="#b0b0b0" stroke="none" stroke-width="2" /><rect x="1903" y="244" width="2.2" height="2.2" rx="0" fill="#b0b0b0" stroke="none" stroke-width="2" /><rect x="1909" y="244" width="2.2" height="2.2" rx="0" fill="#b0b0b0" stroke="none" stroke-width="2" /><rect x="1903" y="250" width="2.2" height="2.2" rx="0" fill="#b0b0b0" stroke="none" stroke-width="2" /><rect x="1909" y="250" width="2.2" height="2.2" rx="0" fill="#b0b0b0" stroke="none" stroke-width="2" /><rect x="1937" y="226" width="2.2" height="2.2" rx="0" fill="#b0b0b0" stroke="none" stroke-width="2" /><rect x="1943" y="226" width="2.2" height="2.2" rx="0" fill="#b0b0b0" stroke="none" stroke-width="2" /><rect x="1937" y="232" width="2.2" height="2.2" rx="0" fill="#b0b0b0" stroke="none" stroke-width="2" /><rect x="1943" y="232" width="2.2" height="2.2" rx="0" fill="#b0b0b0" stroke="none" stroke-width="2" /><rect x="1937" y="238" width="2.2" height="2.2" rx="0" fill="#b0b0b0" stroke="none" stroke-width="2" /><rect x="1943" y="238" width="2.2" height="2.2" rx="0" fill="#b0b0b0" stroke="none" stroke-width="2" /><rect x="1937" y="244" width="2.2" height="2.2" rx="0" fill="#b0b0b0" stroke="none" stroke-width="2" /><rect x="1943" y="244" width="2.2" height="2.2" rx="0" fill="#b0b0b0" stroke="none" stroke-width="2" /><rect x="1937" y="250" width="2.2" height="2.2" rx="0" fill="#b0b0b0" stroke="none" stroke-width="2" /><rect x="1943" y="250" width="2.2" height="2.2" rx="0" fill="#b0b0b0" stroke="none" stroke-width="2" /><path d="M1971 240c2-8 10-14 18-12 4-4 12-4 14 4 2 6 0 12-6 12l-2 6c0 4-4 8-8 6l-4 4c-4 2-8 0-8-4l-2-2c-2-4 0-10-2-14z" fill="#f6ee1a" stroke="#9a9a20" stroke-width="1" /><circle cx="1993" cy="233" r="1.5" fill="#222" stroke="none" stroke-width="2" /><line x1="1966" y1="238" x2="1972" y2="242" stroke="#888" stroke-width="2" /><circle cx="1981" cy="258" r="7.5" fill="#3b88d8" stroke="#2060a0" stroke-width="1" /><path d="M1976 255c3-2 6 0 8-2M1978 262c3 0 5-2 7-1" fill="none" stroke="#7ac050" stroke-width="2" /><path d="M1997 244h7v12h5l-8.5 10-8.5-10h5z" fill="#22c040" stroke="none" stroke-width="2" /><path d="M2029 236l6 6-6 6M2038 236l6 6-6 6" fill="none" stroke="#333" stroke-width="2.2" /><rect x="2060" y="226" width="2.2" height="2.2" rx="0" fill="#b0b0b0" stroke="none" stroke-width="2" /><rect x="2066" y="226" width="2.2" height="2.2" rx="0" fill="#b0b0b0" stroke="none" stroke-width="2" /><rect x="2060" y="232" width="2.2" height="2.2" rx="0" fill="#b0b0b0" stroke="none" stroke-width="2" /><rect x="2066" y="232" width="2.2" height="2.2" rx="0" fill="#b0b0b0" stroke="none" stroke-width="2" /><rect x="2060" y="238" width="2.2" height="2.2" rx="0" fill="#b0b0b0" stroke="none" stroke-width="2" /><rect x="2066" y="238" width="2.2" height="2.2" rx="0" fill="#b0b0b0" stroke="none" stroke-width="2" /><rect x="2060" y="244" width="2.2" height="2.2" rx="0" fill="#b0b0b0" stroke="none" stroke-width="2" /><rect x="2066" y="244" width="2.2" height="2.2" rx="0" fill="#b0b0b0" stroke="none" stroke-width="2" /><rect x="2060" y="250" width="2.2" height="2.2" rx="0" fill="#b0b0b0" stroke="none" stroke-width="2" /><rect x="2066" y="250" width="2.2" height="2.2" rx="0" fill="#b0b0b0" stroke="none" stroke-width="2" /><rect x="2093" y="226" width="39" height="15" rx="0" fill="#dde6f0" stroke="#23476d" stroke-width="2.4" /><rect x="2097" y="228" width="4" height="11" rx="0" fill="#a9c4e4" stroke="none" stroke-width="2" /><rect x="2112" y="228" width="14" height="11" rx="0" fill="#a9c4e4" stroke="none" stroke-width="2" /><rect x="2103" y="222" width="9" height="22" rx="0" fill="#6c9bcb" stroke="#23476d" stroke-width="2.2" /><line x1="2107" y1="244" x2="2107" y2="250" stroke="#23476d" stroke-width="2" /><path d="M2153 236l6 6-6 6M2162 236l6 6-6 6" fill="none" stroke="#333" stroke-width="2.2" /></svg><div class="t" style="left:3px;top:289.5px;font-size:23px;color:#1e1e1e;font-weight:normal;">Browser</div><div class="a" style="left:0px;top:382px;width:591px;height:245px;background:#fff;border:1px solid #b4b4b4;border-left:none"></div><div class="a" style="left:562px;top:383px;width:28px;height:243px;background:#fff;border-left:1px solid #c8c8c8"></div><div class="a" style="left:563px;top:410px;width:27px;height:53px;background:linear-gradient(90deg,#fbfbfb,#efefef);border-top:2px solid #c4c4c4"></div><div class="a" style="left:563px;top:463px;width:27px;height:138px;background:#e1e1e1;border-top:2px solid #c4c4c4;border-bottom:2px solid #c4c4c4"></div><div class="t" style="left:78px;top:388.4px;font-size:26.7px;color:#222;font-weight:normal;letter-spacing:0.3px">/Volumes</div><div class="t" style="left:78px;top:424.4px;font-size:26.7px;color:#222;font-weight:normal;letter-spacing:0.3px">Favorites</div><div class="t" style="left:78px;top:460.4px;font-size:26.7px;color:#222;font-weight:normal;letter-spacing:0.3px">Spatial Bookmarks</div><div class="t" style="left:78px;top:496.4px;font-size:26.7px;color:#222;font-weight:normal;letter-spacing:0.3px">Project Home</div><div class="t" style="left:78px;top:532.4px;font-size:26.7px;color:#222;font-weight:normal;letter-spacing:0.3px">Home</div><div class="t" style="left:78px;top:568.4px;font-size:26.7px;color:#222;font-weight:normal;letter-spacing:0.3px">/ (Macintosh HD)</div><div class="t" style="left:78px;top:604.4px;font-size:26.7px;color:#222;font-weight:normal;letter-spacing:0.3px">GeoPackage</div><svg class="i" style="left:0px;top:280px" width="605" height="360" viewBox="0 280 605 360"><rect x="539" y="290" width="21" height="21" rx="3" fill="none" stroke="#666" stroke-width="2" /><rect x="544" y="298" width="9" height="8" rx="0" fill="none" stroke="#666" stroke-width="1.6" /><path d="M547 298v-3h8v8h-2" fill="none" stroke="#666" stroke-width="1.6" /><rect x="567" y="290" width="21" height="21" rx="3" fill="none" stroke="#666" stroke-width="2" /><path d="M572 295l11 11M583 295l-11 11" fill="none" stroke="#666" stroke-width="3" /><rect x="13" y="337" width="23" height="23" rx="0" fill="#f2f2f2" stroke="#808080" stroke-width="2" /><rect x="28" y="352" width="12" height="12" rx="4" fill="#5b995b" stroke="none" stroke-width="2" /><rect x="33.04" y="354.16" width="1.92" height="7.68" rx="0" fill="#fff" stroke="none" stroke-width="2" /><rect x="30.16" y="357.04" width="7.68" height="1.92" rx="0" fill="#fff" stroke="none" stroke-width="2" /><path d="M65.0 351.1A11 11 0 0 1 86.3 346.2" fill="none" stroke="#5a90d0" stroke-width="4.5" /><path d="M89.1 353.8L80.0 348.5L92.7 343.9z" fill="#5a90d0" stroke="#5a90d0" stroke-width="1" /><path d="M87.0 348.9A11 11 0 0 1 65.7 353.8" fill="none" stroke="#3a6fb5" stroke-width="4.5" /><path d="M62.9 346.2L72.0 351.5L59.3 356.1z" fill="#3a6fb5" stroke="#3a6fb5" stroke-width="1" /><rect x="113" y="336" width="26" height="6" rx="0" fill="#f7e14a" stroke="#33557a" stroke-width="1.5" /><path d="M114 342h24l-9 11v14l-6-3v-11z" fill="#6c9bcb" stroke="#33557a" stroke-width="1.5" /><path d="M164 339h28M165 339v28M165 352h8M165 363h8" fill="none" stroke="#a8a8a8" stroke-width="1.6" /><rect x="168" y="349" width="5" height="5" rx="0" fill="#f6a020" stroke="none" stroke-width="2" /><rect x="168" y="360" width="5" height="5" rx="0" fill="#f6a020" stroke="none" stroke-width="2" /><path d="M177 366v-17h-6l11-11 11 11h-6v17z" fill="#6c9bcb" stroke="#33557a" stroke-width="1.6" /><circle cx="226" cy="350" r="12.5" fill="#6c9bcb" stroke="#3e5f84" stroke-width="1.5" /><circle cx="228.5" cy="342.5" r="2" fill="#fff" stroke="none" stroke-width="2" /><path d="M226.5 347l-2 9" fill="none" stroke="#fff" stroke-width="3.4" stroke-linecap="round"/><path d="M8 396l8 7-8 7z" fill="#555" stroke="none" stroke-width="2" /><path d="M8 432l8 7-8 7z" fill="#555" stroke="none" stroke-width="2" /><path d="M8 468l8 7-8 7z" fill="#555" stroke="none" stroke-width="2" /><path d="M8 504l8 7-8 7z" fill="#555" stroke="none" stroke-width="2" /><path d="M8 540l8 7-8 7z" fill="#555" stroke="none" stroke-width="2" /><path d="M8 576l8 7-8 7z" fill="#555" stroke="none" stroke-width="2" /><path d="M36 391h11l3 4h14v21h-28z" fill="#ececec" stroke="#7c7c78" stroke-width="1.6" /><path d="M50.0 423.0L53.8 432.7L64.3 433.4L56.2 440.0L58.8 450.1L50.0 444.5L41.2 450.1L43.8 440.0L35.7 433.4L46.2 432.7z" fill="#fbe36a" stroke="#d9a400" stroke-width="1.6" /><rect x="38" y="460" width="25" height="27" rx="0" fill="#e6e6e6" stroke="#9c9c9c" stroke-width="1.4" /><path d="M36 462a2 2 0 0 1 4 0v26a2 2 0 0 1-4-1z" fill="#ddd" stroke="#9c9c9c" stroke-width="1.2" /><path d="M51 459h6v10l-3 3-3-3z" fill="#6c9bcb" stroke="#3e5f84" stroke-width="1" /><path d="M36 499h10l3 3h15v23h-28z" fill="#a6d64a" stroke="#7c7c78" stroke-width="1.6" /><path d="M37 512l10 -10 16 16M48 506l8-4 4 6-6 4z" fill="none" stroke="#e8f4c8" stroke-width="2" /><path d="M48 503l9-3 4 7-6 4z" fill="#1d8a2a" stroke="none" stroke-width="2" /><path d="M36 535h11l3 4h14v21h-28z" fill="#ececec" stroke="#7c7c78" stroke-width="1.6" /><path d="M44 556v-8l6-5 6 5v8z" fill="none" stroke="#333" stroke-width="1.6" /><path d="M36 571h11l3 4h14v21h-28z" fill="#ececec" stroke="#7c7c78" stroke-width="1.6" /><circle cx="50" cy="607" r="9" fill="#9fc2e6" stroke="#5c86b6" stroke-width="1" /><path d="M36 610l14 8 14-8v13l-14 7-14-7z" fill="#f3d000" stroke="#333" stroke-width="1.2" /><path d="M50 618v12l14-7v-13z" fill="#fdf77a" stroke="#333" stroke-width="1.2" /><path d="M568 400l8-8 8 8z" fill="#555" stroke="none" stroke-width="2" /><path d="M568 607l8 8 8-8z" fill="#555" stroke="none" stroke-width="2" /><rect x="282" y="631" width="2" height="2" rx="0" fill="#b8b8b8" stroke="none" stroke-width="2" /><rect x="287" y="631" width="2" height="2" rx="0" fill="#b8b8b8" stroke="none" stroke-width="2" /><rect x="292" y="631" width="2" height="2" rx="0" fill="#b8b8b8" stroke="none" stroke-width="2" /><rect x="297" y="631" width="2" height="2" rx="0" fill="#b8b8b8" stroke="none" stroke-width="2" /><rect x="302" y="631" width="2" height="2" rx="0" fill="#b8b8b8" stroke="none" stroke-width="2" /><rect x="307" y="631" width="2" height="2" rx="0" fill="#b8b8b8" stroke="none" stroke-width="2" /></svg><div class="a" style="left:603px;top:279px;width:2px;height:1190px;background:#c4c4c4"></div><div class="t" style="left:3px;top:647.5px;font-size:23px;color:#1e1e1e;font-weight:normal;">Layers</div><div class="a" style="left:0px;top:740px;width:591px;height:721px;background:#fff;border:1px solid #b4b4b4;border-left:none"></div><div class="a" style="left:0px;top:778px;width:590px;height:36px;background:#d4d4d4"></div><div class="t" style="left:126px;top:746.1px;font-size:27px;color:#1a1a1a;font-weight:bold;letter-spacing:0.15px;">destination_points</div><div class="t" style="left:126px;top:782.1px;font-size:27px;color:#1a1a1a;font-weight:bold;letter-spacing:0.15px;text-decoration:underline;text-decoration-thickness:2px;text-underline-offset:3px">Output OD Matrix</div><div class="t" style="left:126px;top:818.1px;font-size:27px;color:#1a1a1a;font-weight:bold;letter-spacing:0.15px;">origin_points</div><div class="t" style="left:126px;top:854.1px;font-size:27px;color:#1a1a1a;font-weight:bold;letter-spacing:0.15px;">Roadway_Block</div><svg class="i" style="left:0px;top:640px" width="605" height="260" viewBox="0 640 605 260"><rect x="539" y="648" width="21" height="21" rx="3" fill="none" stroke="#666" stroke-width="2" /><rect x="544" y="656" width="9" height="8" rx="0" fill="none" stroke="#666" stroke-width="1.6" /><path d="M547 656v-3h8v8h-2" fill="none" stroke="#666" stroke-width="1.6" /><rect x="567" y="648" width="21" height="21" rx="3" fill="none" stroke="#666" stroke-width="2" /><path d="M572 653l11 11M583 653l-11 11" fill="none" stroke="#666" stroke-width="3" /><path d="M12 711l12-10 8 3-10 10z" fill="#f6e020" stroke="none" stroke-width="2" /><path d="M11 714l10-6 6 8-8 5z" fill="#e03030" stroke="none" stroke-width="2" /><path d="M13 706l12-6 4 6-11 6z" fill="#6c9bcb" stroke="none" stroke-width="2" /><path d="M20 714l6-6 6 6-6 6z" fill="#dca050" stroke="#a07030" stroke-width="1" /><line x1="30" y1="710" x2="40" y2="700" stroke="#c08040" stroke-width="3" /><path d="M63 717v-18h4M67 714v-18h20v18" fill="none" stroke="#999" stroke-width="1.5" /><rect x="67" y="702" width="15" height="16" rx="0" fill="none" stroke="#888" stroke-width="1.5" /><path d="M74 700v12a2 2 0 0 0 4 0v-14" fill="none" stroke="#3e5f84" stroke-width="1.5" /><rect x="78" y="712" width="12" height="12" rx="4" fill="#5b995b" stroke="none" stroke-width="2" /><rect x="83.04" y="714.16" width="1.92" height="7.68" rx="0" fill="#fff" stroke="none" stroke-width="2" /><rect x="80.16" y="717.04" width="7.68" height="1.92" rx="0" fill="#fff" stroke="none" stroke-width="2" /><path d="M112 708c8-10 24-10 30 0-6 10-22 10-30 0z" fill="#fff" stroke="#888" stroke-width="1.4" /><circle cx="127" cy="708" r="6.5" fill="#6c9bcb" stroke="#33557a" stroke-width="1" /><circle cx="127" cy="707" r="2.2" fill="#000" stroke="none" stroke-width="2" /><path d="M134 720h10l-5.0 5.5z" fill="#555" stroke="none" stroke-width="2" /><rect x="162" y="693" width="28" height="6" rx="0" fill="#f7e14a" stroke="#33557a" stroke-width="1.5" /><path d="M163 699h26l-10 11v13l-6-3v-10z" fill="#6c9bcb" stroke="#33557a" stroke-width="1.5" /><path d="M182 719h10l-5.0 5.5z" fill="#555" stroke="none" stroke-width="2" /><text x="212" y="718" font-size="32" fill="#6a2a8a" font-weight="normal" font-family="Liberation Serif">ε</text><path d="M229 724v-8a4 4 0 0 1 4-4h5a4 4 0 0 1 4 4v8h-4v-6h-5v6z" fill="#aaa" stroke="#888" stroke-width="1" /><path d="M255 706h14l-7.0 7.700000000000001z" fill="#555" stroke="none" stroke-width="2" /><path d="M286 697h26M287 697v25M287 706h6M287 718h6" fill="none" stroke="#a8a8a8" stroke-width="1.4" /><rect x="289" y="703" width="5" height="5" rx="0" fill="#f6a020" stroke="none" stroke-width="2" /><rect x="289" y="716" width="5" height="5" rx="0" fill="#f6a020" stroke="none" stroke-width="2" /><path d="M298 697v16h-6l11 11 11-11h-6v-16z" fill="#6c9bcb" stroke="#33557a" stroke-width="1.6" /><path d="M337 697h26M338 697v25M338 706h6M338 718h6" fill="none" stroke="#a8a8a8" stroke-width="1.4" /><rect x="340" y="704" width="5" height="5" rx="0" fill="#f6a020" stroke="none" stroke-width="2" /><rect x="340" y="716" width="5" height="5" rx="0" fill="#f6a020" stroke="none" stroke-width="2" /><path d="M350 722v-17h-6l11-11 11 11h-6v17z" fill="#6c9bcb" stroke="#33557a" stroke-width="1.6" /><rect x="387" y="694" width="23" height="23" rx="0" fill="none" stroke="#888" stroke-width="1.8" /><rect x="402" y="712" width="11" height="8" rx="2" fill="#e04848" stroke="none" stroke-width="2" /><line x1="404" y1="716" x2="411" y2="716" stroke="#fff" stroke-width="2" /><rect x="42" y="747" width="27" height="27" rx="0" fill="#fff" stroke="#a8a8a8" stroke-width="1.6" /><path d="M48 760l5 8 10-15" fill="none" stroke="#111" stroke-width="3" /><rect x="42" y="783" width="27" height="27" rx="0" fill="#fff" stroke="#a8a8a8" stroke-width="1.6" /><path d="M48 796l5 8 10-15" fill="none" stroke="#111" stroke-width="3" /><rect x="42" y="819" width="27" height="27" rx="0" fill="#fff" stroke="#a8a8a8" stroke-width="1.6" /><path d="M48 832l5 8 10-15" fill="none" stroke="#111" stroke-width="3" /><rect x="42" y="855" width="27" height="27" rx="0" fill="#fff" stroke="#a8a8a8" stroke-width="1.6" /><path d="M48 868l5 8 10-15" fill="none" stroke="#111" stroke-width="3" /><circle cx="98" cy="760" r="13.5" fill="#fff" stroke="#e01b22" stroke-width="2" /><path d="M90 760h16M98 752v16" fill="none" stroke="#e01b22" stroke-width="4" /><line x1="82" y1="796" x2="112" y2="796" stroke="#e8a050" stroke-width="2" /><circle cx="98" cy="832" r="9.5" fill="#c2b79c" stroke="#555" stroke-width="1.4" /><line x1="82" y1="868" x2="112" y2="868" stroke="#444" stroke-width="1.6" /><rect x="549" y="744" width="30" height="30" rx="3" fill="#f6f6f6" stroke="#cfcfcf" stroke-width="1.2" /><path d="M554 751h20l-7 9v10l-5-3v-7z" fill="none" stroke="#666" stroke-width="1.8" /><rect x="549" y="780" width="30" height="6" rx="0" fill="#e8e8e8" stroke="#cfcfcf" stroke-width="1" /></svg><div class="a" style="left:0px;top:1461px;width:380px;height:57px;background:#ececec"></div><div class="a" style="left:3px;top:1468px;width:400px;height:47px;background:#fff;border:1.5px solid #a6a6a6;border-radius:7px"></div><svg class="i" style="left:0px;top:1460px" width="100" height="58" viewBox="0 1460 100 58"><circle cx="31" cy="1490" r="8.5" fill="none" stroke="#888" stroke-width="2.4" /><line x1="37" y1="1496" x2="44" y2="1503" stroke="#888" stroke-width="3" /></svg><div class="t" style="left:61px;top:1479.1px;font-size:27px;color:#858585;font-weight:normal;">Type to locate (⌘K)</div><div class="a" style="left:604px;top:282px;width:1566px;height:510px;background:#fff;border-top:1px solid #a8a8a8;border-left:1px solid #a8a8a8"></div><svg class="i" style="left:605px;top:283px" width="1565" height="503" viewBox="605 283 1565 503"><defs><clipPath id="mc"><path d="M1208 319L1232 335L1240 338L1760 747L1800 786L785 786L722 696L748 676L790 700L803 683L805 645L821 617L1123 383L1140 392L1165 359L1175 350L1190 335z"/></clipPath><linearGradient id="msh" x1="0" y1="0" x2="0" y2="1"><stop offset="0" stop-color="#000" stop-opacity="0"/><stop offset="1" stop-color="#000" stop-opacity="0.04"/></linearGradient></defs><path d="M1202 329L1228 329M1193 336L1237 336M1204 343L1249 343M1172 371L1224 371M1152 378L1217 378M1222 385L1262 385M1240 392L1312 392M1086 413L1143 413M1093 427L1137 427M1256 427L1288 427M1292 427L1359 427M1058 434L1079 434M1049 441L1081 441M1032 455L1070 455M1082 455L1122 455M1278 455L1348 455M1024 462L1100 462M1262 462L1335 462M1016 469L1067 469M1240 469L1289 469M1291 469L1324 469M1270 476L1302 476M1309 476L1339 476M998 483L1029 483M1043 483L1102 483M1282 483L1312 483M1319 483L1342 483M986 490L1041 490M1353 490L1427 490M979 497L1047 497M1389 497L1430 497M994 504L1041 504M1052 504L1132 504M1241 504L1272 504M1049 511L1100 511M1111 511L1138 511M1297 511L1383 511M954 518L985 518M997 518L1028 518M1037 518L1083 518M1239 518L1293 518M1367 518L1395 518M1407 518L1444 518M1237 525L1262 525M1275 525L1309 525M952 532L998 532M1011 532L1080 532M1257 532L1344 532M1351 532L1395 532M1407 532L1483 532M965 539L1003 539M1257 539L1287 539M914 546L951 546M965 546L994 546M1002 546L1045 546M1057 546L1094 546M1264 546L1343 546M1353 546L1422 546M1430 546L1472 546M1476 546L1509 546M943 553L1015 553M1062 553L1124 553M1427 553L1455 553M907 560L980 560M983 560L1015 560M1065 560L1131 560M1238 560L1269 560M1363 560L1401 560M1412 560L1461 560M903 567L948 567M999 567L1032 567M1107 567L1132 567M1242 567L1272 567M1318 567L1372 567M916 574L1003 574M1005 574L1061 574M1069 574L1100 574M1241 574L1301 574M1446 574L1515 574M1524 574L1544 574M891 581L932 581M940 581L990 581M1000 581L1052 581M1066 581L1116 581M1274 581L1298 581M1341 581L1402 581M918 588L1005 588M1019 588L1102 588M1270 588L1348 588M1440 588L1465 588M1479 588L1516 588M850 595L868 595M881 595L930 595M1031 595L1110 595M1261 595L1308 595M1465 595L1491 595M1498 595L1549 595M902 602L991 602M994 602L1020 602M1027 602L1082 602M1233 602L1273 602M1280 602L1307 602M1321 602L1381 602M1413 602L1427 602M1511 602L1572 602M870 609L951 609M955 609L1041 609M1502 609L1549 609M828 616L874 616M882 616L917 616M919 616L1001 616M1008 616L1064 616M1070 616L1118 616M830 623L888 623M900 623L943 623M1021 623L1044 623M1049 623L1078 623M1089 623L1159 623M1527 623L1549 623M1554 623L1608 623M824 630L914 630M924 630L986 630M989 630L1011 630M1126 630L1166 630M1502 630L1553 630M908 637L972 637M982 637L1052 637M1064 637L1116 637M1128 637L1189 637M1555 637L1592 637M866 644L901 644M996 644L1063 644M1072 644L1128 644M1298 644L1381 644M1574 644L1609 644M809 651L881 651M883 651L922 651M936 651L995 651M997 651L1040 651M1097 651L1178 651M1529 651L1555 651M1610 651L1639 651M807 658L857 658M862 658L945 658M1244 658L1267 658M1271 658L1320 658M1554 658L1619 658M847 665L911 665M915 665L982 665M990 665L1012 665M1022 665L1048 665M1578 665L1599 665M821 672L899 672M991 672L1040 672M1050 672L1075 672M1524 672L1595 672M1599 672L1668 672M933 679L979 679M987 679L1032 679M1044 679L1094 679M1488 679L1524 679M1560 679L1616 679M1620 679L1676 679M829 686L874 686M882 686L950 686M1073 686L1109 686M1243 686L1277 686M1284 686L1349 686M1531 686L1603 686M1606 686L1660 686M730 693L778 693M800 693L851 693M859 693L909 693M912 693L968 693M1241 693L1290 693M1478 693L1499 693M1503 693L1555 693M1561 693L1624 693M1638 693L1671 693M730 700L767 700M844 700L883 700M890 700L931 700M1059 700L1129 700M1473 700L1558 700M1571 700L1601 700M730 707L779 707M854 707L887 707M999 707L1031 707M1041 707L1076 707M1243 707L1275 707M1494 707L1578 707M1589 707L1676 707M1687 707L1715 707M772 714L829 714M831 714L902 714M1011 714L1036 714M1042 714L1072 714M1463 714L1530 714M1544 714L1625 714M1637 714L1712 714M750 721L818 721M887 721L954 721M1482 721L1546 721M1549 721L1596 721M1683 721L1728 721M759 728L783 728M845 728L927 728M1565 728L1600 728M1652 728L1684 728M751 735L800 735M813 735L896 735M1024 735L1085 735M1454 735L1515 735M1692 735L1748 735M791 742L869 742M872 742L921 742M975 742L1014 742M1102 742L1159 742M1461 742L1525 742M1590 742L1651 742M826 749L883 749M893 749L929 749M932 749L986 749M1059 749L1128 749M1236 749L1289 749M1434 749L1501 749M1506 749L1590 749M1670 749L1760 749M764 756L807 756M850 756L878 756M1356 756L1400 756M1442 756L1473 756M1479 756L1531 756M827 763L900 763M1004 763L1034 763M1089 763L1161 763M1244 763L1294 763M1532 763L1574 763M1579 763L1631 763M1636 763L1698 763M790 770L818 770M939 770L1023 770M1213 770L1262 770M1424 770L1462 770M1556 770L1619 770M1668 770L1693 770M928 777L987 777M998 777L1033 777M1141 777L1228 777M1306 777L1390 777M1397 777L1430 777M1444 777L1522 777M1531 777L1610 777M865 784L887 784M981 784L1060 784M1067 784L1088 784M1090 784L1153 784M1237 784L1297 784M1385 784L1463 784M1651 784L1711 784M1722 784L1793 784M805 686L805 737M839 667L839 718M856 600L856 612M856 639L856 683M890 626L890 675M907 657L907 702M924 574L924 610M924 637L924 683M924 740L924 774M941 636L941 653M958 580L958 618M958 629L958 678M975 631L975 688M992 703L992 729M1009 476L1009 502M1009 595L1009 652M1009 672L1009 698M1009 779L1009 790M1026 459L1026 470M1026 544L1026 574M1043 494L1043 540M1043 554L1043 586M1043 592L1043 606M1043 628L1043 682M1060 441L1060 476M1060 564L1060 589M1060 636L1060 696M1060 707L1060 733M1077 635L1077 681M1077 702L1077 734M1111 438L1111 485M1111 693L1111 745M1128 388L1128 416M1128 421L1128 453M1128 497L1128 523M1196 637L1196 662M1196 749L1196 780M1213 326L1213 370M1230 358L1230 391M1230 744L1230 764M1247 362L1247 405M1247 413L1247 424M1247 542L1247 590M1247 713L1247 751M1247 779L1247 791M1264 401L1264 450M1264 565L1264 592M1264 634L1264 668M1264 695L1264 707M1281 384L1281 412M1281 667L1281 701M1298 388L1298 413M1298 439L1298 457M1315 719L1315 734M1332 442L1332 465M1332 489L1332 523M1332 599L1332 625M1349 427L1349 457M1349 544L1349 594M1349 697L1349 737M1383 461L1383 512M1383 520L1383 532M1417 483L1417 503M1434 498L1434 506M1434 523L1434 567M1434 703L1434 742M1451 528L1451 584M1451 718L1451 773M1468 582L1468 624M1502 662L1502 695M1502 702L1502 723M1519 745L1519 778M1570 606L1570 647M1570 655L1570 691M1638 734L1638 770M1655 717L1655 768M1672 679L1672 720M1689 750L1689 782M1740 746L1740 768M787 761L818 790M925 664L946 682M870 680L911 717M833 765L856 787M747 709L781 739M829 782L834 786M941 678L976 709M988 773L1007 790M864 785L869 789M953 764L981 789M876 772L895 788M796 696L806 705M971 694L1036 752M933 674L984 721M949 714L986 747M970 708L1025 757M937 781L946 789M849 777L863 789M916 670L958 708M799 690L839 726M827 718L887 773M755 730L800 770M771 708L817 750M867 677L903 709M868 749L898 776M976 721L1031 770M904 697L956 744M986 779L996 788M753 679L772 697M965 729L1007 767M798 774L813 787M756 704L821 763M934 780L943 789M916 753L943 778M792 780L802 788M928 675L950 694M916 712L969 759M1454 544L1509 587M1730 762L1752 779M1481 558L1531 596M1322 438L1369 475M1693 707L1726 733M1500 551L1560 597M1650 682L1699 720M1486 582L1512 602M1503 590L1552 627M1372 495L1429 539M1684 698L1743 743M1677 713L1703 733M1670 712L1719 749M1380 470L1407 491M1338 453L1372 479M1755 786L1760 790M1324 434L1364 465M1334 463L1387 504M1512 594L1556 628M1577 616L1630 657M1468 527L1514 562M1449 532L1488 562M1391 465L1435 500M1396 510L1442 546M1626 672L1683 716M1328 442L1361 467M1330 457L1373 491M1642 694L1666 712M1535 592L1556 609M1586 647L1629 680M1047 476s-6 16 -10 -1s1 -9 2 -26s-5 -9 16 16s6 4 18 14M1503 708s8 -14 3 7s3 -15 23 1s-7 19 -6 -26s5 -10 -14 -12M1359 474s14 2 -15 15s6 16 -7 6s9 -1 1 11s-8 9 4 20M874 710s-0 -2 -24 12s-14 1 21 11s-12 9 10 -10s8 3 -4 2M1374 760s-7 -17 -24 21s-10 3 -4 3s11 -8 -16 -4M1372 562s6 -11 9 20s7 -10 -17 28M1674 746s-0 13 18 -17s-10 7 -25 25s11 15 -23 27s-8 14 -14 -8M841 663s10 -10 -5 18s-15 2 2 13s13 8 -14 -18M1448 517s1 -18 7 -2s7 19 -13 -26M1604 704s-12 6 -18 -22s3 6 15 20s-11 -8 -18 -1M769 720s12 7 19 -19s-0 9 17 -11s-9 -2 -2 -4s-11 -9 13 28M1524 727s4 -17 9 27s0 -14 3 -26s-1 -17 -4 19M1494 714s0 12 22 -23s4 13 9 13s-11 0 8 -23M1160 372s-10 -19 4 -15s3 16 12 -13s3 -8 13 -15M1002 621s7 11 4 -15s-13 -12 9 24s-1 -12 19 -30M916 591s4 3 -9 -7s2 -10 7 22M1173 601s0 15 1 30s1 15 -6 22s-1 19 11 24M1189 517s-1 19 3 30s4 18 -12 30s-8 17 2 30M1213 585s3 12 -1 30s-7 17 2 35s3 15 6 24M1171 696s-3 10 0 28s-4 10 -1 22M1165 727s7 13 6 29s3 15 4 28M1140 719s-2 20 -0 22s0 12 -8 33M1149 723s2 11 -5 30s-1 15 -7 34M1383 667s3 20 8 20s2 13 -7 35M1411 672s10 11 -4 27s-1 11 -6 25M1478 642s3 19 -8 29s4 16 -3 27s12 14 12 29M1448 634s-3 13 -9 34s-2 11 -8 23s-3 9 1 33M1480 687s10 9 -1 34s-4 16 -3 27M1470 656s2 19 4 24s-3 14 -9 34M1240 338L1760 747M1123 383L821 617M722 696L785 786M1208 319L1231 335Q1233 339 1229 341L1200 369M1203 324Q1188 330 1191 340Q1195 360 1200 370M1196 331L1222 347M1191 344L1217 362M1207 327L1190 350M1215 333L1196 358M1171 345L1185 360L1197 368M1162 367L1175 360L1185 380M1130 376Q1160 380 1180 392Q1195 400 1197 394M1103 393L1123 383Q1135 395 1137 425M1108 398Q1125 405 1122 425M1240 338v45M1250 346h30" fill="none" stroke="#111" stroke-width="1.5" clip-path="url(#mc)"/><path d="M1332.5 490.1a5.3 5.3 0 1 0 10.6 0a5.3 5.3 0 1 0-10.6 0M1457.8 760.8a5.3 5.3 0 1 0 10.6 0a5.3 5.3 0 1 0-10.6 0M1567.0 757.9a5.3 5.3 0 1 0 10.6 0a5.3 5.3 0 1 0-10.6 0M1421.9 558.1a5.3 5.3 0 1 0 10.6 0a5.3 5.3 0 1 0-10.6 0M1366.9 530.9a5.3 5.3 0 1 0 10.6 0a5.3 5.3 0 1 0-10.6 0M1671.1 693.5a5.3 5.3 0 1 0 10.6 0a5.3 5.3 0 1 0-10.6 0M1366.1 780.4a5.3 5.3 0 1 0 10.6 0a5.3 5.3 0 1 0-10.6 0M835.4 778.5a5.3 5.3 0 1 0 10.6 0a5.3 5.3 0 1 0-10.6 0M1657.7 758.7a5.3 5.3 0 1 0 10.6 0a5.3 5.3 0 1 0-10.6 0M1269.5 670.4a5.3 5.3 0 1 0 10.6 0a5.3 5.3 0 1 0-10.6 0M826.6 756.8a5.3 5.3 0 1 0 10.6 0a5.3 5.3 0 1 0-10.6 0M1584.2 688.5a5.3 5.3 0 1 0 10.6 0a5.3 5.3 0 1 0-10.6 0M1715.2 726.1a5.3 5.3 0 1 0 10.6 0a5.3 5.3 0 1 0-10.6 0M1414.2 748.7a5.3 5.3 0 1 0 10.6 0a5.3 5.3 0 1 0-10.6 0M1445.2 535.4a5.3 5.3 0 1 0 10.6 0a5.3 5.3 0 1 0-10.6 0M1464.8 720.7a5.3 5.3 0 1 0 10.6 0a5.3 5.3 0 1 0-10.6 0M1637.8 720.9a5.3 5.3 0 1 0 10.6 0a5.3 5.3 0 1 0-10.6 0M969.4 669.7a5.3 5.3 0 1 0 10.6 0a5.3 5.3 0 1 0-10.6 0M1289.7 576.7a5.3 5.3 0 1 0 10.6 0a5.3 5.3 0 1 0-10.6 0M1409.0 597.9a5.3 5.3 0 1 0 10.6 0a5.3 5.3 0 1 0-10.6 0M1371.9 643.7a5.3 5.3 0 1 0 10.6 0a5.3 5.3 0 1 0-10.6 0M1592.6 635.4a5.3 5.3 0 1 0 10.6 0a5.3 5.3 0 1 0-10.6 0M1578.7 631.8a5.3 5.3 0 1 0 10.6 0a5.3 5.3 0 1 0-10.6 0M1310.2 640.4a5.3 5.3 0 1 0 10.6 0a5.3 5.3 0 1 0-10.6 0M1412.4 783.3a5.3 5.3 0 1 0 10.6 0a5.3 5.3 0 1 0-10.6 0M1525.6 656.8a5.3 5.3 0 1 0 10.6 0a5.3 5.3 0 1 0-10.6 0M1768.2 783.7a5.3 5.3 0 1 0 10.6 0a5.3 5.3 0 1 0-10.6 0M1270.2 688.8a5.3 5.3 0 1 0 10.6 0a5.3 5.3 0 1 0-10.6 0M1661.5 743.5a5.3 5.3 0 1 0 10.6 0a5.3 5.3 0 1 0-10.6 0M1341.6 671.7a5.3 5.3 0 1 0 10.6 0a5.3 5.3 0 1 0-10.6 0M973.1 613.1a5.3 5.3 0 1 0 10.6 0a5.3 5.3 0 1 0-10.6 0M1305.6 629.6a5.3 5.3 0 1 0 10.6 0a5.3 5.3 0 1 0-10.6 0M1612.5 696.7a5.3 5.3 0 1 0 10.6 0a5.3 5.3 0 1 0-10.6 0M1630.5 756.6a5.3 5.3 0 1 0 10.6 0a5.3 5.3 0 1 0-10.6 0M1497.7 588.8a5.3 5.3 0 1 0 10.6 0a5.3 5.3 0 1 0-10.6 0M895.4 672.8a5.3 5.3 0 1 0 10.6 0a5.3 5.3 0 1 0-10.6 0M1297.0 475.0a5.3 5.3 0 1 0 10.6 0a5.3 5.3 0 1 0-10.6 0M1405.1 533.1a5.3 5.3 0 1 0 10.6 0a5.3 5.3 0 1 0-10.6 0M1283.6 728.4a5.3 5.3 0 1 0 10.6 0a5.3 5.3 0 1 0-10.6 0M1701.5 705.6a5.3 5.3 0 1 0 10.6 0a5.3 5.3 0 1 0-10.6 0M1580.6 736.9a5.3 5.3 0 1 0 10.6 0a5.3 5.3 0 1 0-10.6 0M908.6 674.8a5.3 5.3 0 1 0 10.6 0a5.3 5.3 0 1 0-10.6 0M837.1 763.8a5.3 5.3 0 1 0 10.6 0a5.3 5.3 0 1 0-10.6 0M1535.8 609.7a5.3 5.3 0 1 0 10.6 0a5.3 5.3 0 1 0-10.6 0M1566.1 632.9a5.3 5.3 0 1 0 10.6 0a5.3 5.3 0 1 0-10.6 0M781.5 772.9a5.3 5.3 0 1 0 10.6 0a5.3 5.3 0 1 0-10.6 0M1666.3 736.6a5.3 5.3 0 1 0 10.6 0a5.3 5.3 0 1 0-10.6 0M1257.1 625.3a5.3 5.3 0 1 0 10.6 0a5.3 5.3 0 1 0-10.6 0M806.1 735.5a5.3 5.3 0 1 0 10.6 0a5.3 5.3 0 1 0-10.6 0M1275.3 497.9a5.3 5.3 0 1 0 10.6 0a5.3 5.3 0 1 0-10.6 0M1363.8 602.0a5.3 5.3 0 1 0 10.6 0a5.3 5.3 0 1 0-10.6 0M1019.2 656.3a5.3 5.3 0 1 0 10.6 0a5.3 5.3 0 1 0-10.6 0M1549.6 589.3a5.3 5.3 0 1 0 10.6 0a5.3 5.3 0 1 0-10.6 0M1400.8 477.4a5.3 5.3 0 1 0 10.6 0a5.3 5.3 0 1 0-10.6 0M1230.8 425.8a5.3 5.3 0 1 0 10.6 0a5.3 5.3 0 1 0-10.6 0M1436.4 526.5a5.3 5.3 0 1 0 10.6 0a5.3 5.3 0 1 0-10.6 0M1598.8 765.4a5.3 5.3 0 1 0 10.6 0a5.3 5.3 0 1 0-10.6 0M1637.9 702.5a5.3 5.3 0 1 0 10.6 0a5.3 5.3 0 1 0-10.6 0M1080.3 665.9a5.3 5.3 0 1 0 10.6 0a5.3 5.3 0 1 0-10.6 0M1089.1 638.6a5.3 5.3 0 1 0 10.6 0a5.3 5.3 0 1 0-10.6 0M1270.7 632.2a5.3 5.3 0 1 0 10.6 0a5.3 5.3 0 1 0-10.6 0M775.2 724.6a5.3 5.3 0 1 0 10.6 0a5.3 5.3 0 1 0-10.6 0M1632.8 734.3a5.3 5.3 0 1 0 10.6 0a5.3 5.3 0 1 0-10.6 0M1426.5 728.4a5.3 5.3 0 1 0 10.6 0a5.3 5.3 0 1 0-10.6 0M1276.3 733.1a5.3 5.3 0 1 0 10.6 0a5.3 5.3 0 1 0-10.6 0M1087.0 748.3a5.3 5.3 0 1 0 10.6 0a5.3 5.3 0 1 0-10.6 0M956.3 701.2a5.3 5.3 0 1 0 10.6 0a5.3 5.3 0 1 0-10.6 0M1294.4 777.7a5.3 5.3 0 1 0 10.6 0a5.3 5.3 0 1 0-10.6 0M1024.9 628.7a5.3 5.3 0 1 0 10.6 0a5.3 5.3 0 1 0-10.6 0M1338.3 639.6a5.3 5.3 0 1 0 10.6 0a5.3 5.3 0 1 0-10.6 0M1316.5 586.4a5.3 5.3 0 1 0 10.6 0a5.3 5.3 0 1 0-10.6 0M1564.2 701.6a5.3 5.3 0 1 0 10.6 0a5.3 5.3 0 1 0-10.6 0M1224.0 622.2a5.3 5.3 0 1 0 10.6 0a5.3 5.3 0 1 0-10.6 0M1587.9 718.7a5.3 5.3 0 1 0 10.6 0a5.3 5.3 0 1 0-10.6 0M1439.5 720.2a5.3 5.3 0 1 0 10.6 0a5.3 5.3 0 1 0-10.6 0M1315.0 474.3a5.3 5.3 0 1 0 10.6 0a5.3 5.3 0 1 0-10.6 0M1317.6 499.0a5.3 5.3 0 1 0 10.6 0a5.3 5.3 0 1 0-10.6 0M1586.2 666.9a5.3 5.3 0 1 0 10.6 0a5.3 5.3 0 1 0-10.6 0M1289.2 462.5a5.3 5.3 0 1 0 10.6 0a5.3 5.3 0 1 0-10.6 0M1380.3 591.8a5.3 5.3 0 1 0 10.6 0a5.3 5.3 0 1 0-10.6 0M1321.9 621.3a5.3 5.3 0 1 0 10.6 0a5.3 5.3 0 1 0-10.6 0M1219.7 758.4a5.3 5.3 0 1 0 10.6 0a5.3 5.3 0 1 0-10.6 0M1503.8 767.5a5.3 5.3 0 1 0 10.6 0a5.3 5.3 0 1 0-10.6 0M1461.8 726.7a5.3 5.3 0 1 0 10.6 0a5.3 5.3 0 1 0-10.6 0M1502.5 691.3a5.3 5.3 0 1 0 10.6 0a5.3 5.3 0 1 0-10.6 0M1430.0 583.3a5.3 5.3 0 1 0 10.6 0a5.3 5.3 0 1 0-10.6 0M1438.6 557.7a5.3 5.3 0 1 0 10.6 0a5.3 5.3 0 1 0-10.6 0M1321.6 587.5a5.3 5.3 0 1 0 10.6 0a5.3 5.3 0 1 0-10.6 0M1008.7 762.4a5.3 5.3 0 1 0 10.6 0a5.3 5.3 0 1 0-10.6 0M1606.9 772.8a5.3 5.3 0 1 0 10.6 0a5.3 5.3 0 1 0-10.6 0M1591.1 714.1a5.3 5.3 0 1 0 10.6 0a5.3 5.3 0 1 0-10.6 0M1167.7 384.8a5.3 5.3 0 1 0 10.6 0a5.3 5.3 0 1 0-10.6 0M1374.1 461.9a5.3 5.3 0 1 0 10.6 0a5.3 5.3 0 1 0-10.6 0M1757.4 759.2a5.3 5.3 0 1 0 10.6 0a5.3 5.3 0 1 0-10.6 0M1303.3 668.5a5.3 5.3 0 1 0 10.6 0a5.3 5.3 0 1 0-10.6 0M1372.5 594.6a5.3 5.3 0 1 0 10.6 0a5.3 5.3 0 1 0-10.6 0M1328.2 581.5a5.3 5.3 0 1 0 10.6 0a5.3 5.3 0 1 0-10.6 0M1726.9 729.4a5.3 5.3 0 1 0 10.6 0a5.3 5.3 0 1 0-10.6 0M1179.4 648.6a5.3 5.3 0 1 0 10.6 0a5.3 5.3 0 1 0-10.6 0M1354.9 442.7a5.3 5.3 0 1 0 10.6 0a5.3 5.3 0 1 0-10.6 0M1026.0 744.6a5.3 5.3 0 1 0 10.6 0a5.3 5.3 0 1 0-10.6 0M1248.4 684.7a5.3 5.3 0 1 0 10.6 0a5.3 5.3 0 1 0-10.6 0M1511.0 730.8a5.3 5.3 0 1 0 10.6 0a5.3 5.3 0 1 0-10.6 0M1685.2 740.2a5.3 5.3 0 1 0 10.6 0a5.3 5.3 0 1 0-10.6 0M1303.3 647.4a5.3 5.3 0 1 0 10.6 0a5.3 5.3 0 1 0-10.6 0M1296.5 466.5a5.3 5.3 0 1 0 10.6 0a5.3 5.3 0 1 0-10.6 0M1555.1 610.3a5.3 5.3 0 1 0 10.6 0a5.3 5.3 0 1 0-10.6 0M1504.2 671.5a5.3 5.3 0 1 0 10.6 0a5.3 5.3 0 1 0-10.6 0M1296.9 685.0a5.3 5.3 0 1 0 10.6 0a5.3 5.3 0 1 0-10.6 0M879.1 753.6a5.3 5.3 0 1 0 10.6 0a5.3 5.3 0 1 0-10.6 0M1253.0 414.0a5.3 5.3 0 1 0 10.6 0a5.3 5.3 0 1 0-10.6 0M1501.8 781.8a5.3 5.3 0 1 0 10.6 0a5.3 5.3 0 1 0-10.6 0M1292.3 462.4a5.3 5.3 0 1 0 10.6 0a5.3 5.3 0 1 0-10.6 0M1296.1 578.1a5.3 5.3 0 1 0 10.6 0a5.3 5.3 0 1 0-10.6 0M1299.7 581.8a5.3 5.3 0 1 0 10.6 0a5.3 5.3 0 1 0-10.6 0M1389.1 477.1a5.3 5.3 0 1 0 10.6 0a5.3 5.3 0 1 0-10.6 0M1474.0 619.6a5.3 5.3 0 1 0 10.6 0a5.3 5.3 0 1 0-10.6 0M1350.1 742.3a5.3 5.3 0 1 0 10.6 0a5.3 5.3 0 1 0-10.6 0M1680.2 748.3a5.3 5.3 0 1 0 10.6 0a5.3 5.3 0 1 0-10.6 0M1309.7 493.0a5.3 5.3 0 1 0 10.6 0a5.3 5.3 0 1 0-10.6 0M980.0 671.6a5.3 5.3 0 1 0 10.6 0a5.3 5.3 0 1 0-10.6 0M1506.2 721.1a5.3 5.3 0 1 0 10.6 0a5.3 5.3 0 1 0-10.6 0M1532.1 628.1a5.3 5.3 0 1 0 10.6 0a5.3 5.3 0 1 0-10.6 0M762.4 745.7a5.3 5.3 0 1 0 10.6 0a5.3 5.3 0 1 0-10.6 0M1182.6 370.7a5.3 5.3 0 1 0 10.6 0a5.3 5.3 0 1 0-10.6 0M1511.1 758.2a5.3 5.3 0 1 0 10.6 0a5.3 5.3 0 1 0-10.6 0M1544.1 718.4a5.3 5.3 0 1 0 10.6 0a5.3 5.3 0 1 0-10.6 0M1255.9 687.5a5.3 5.3 0 1 0 10.6 0a5.3 5.3 0 1 0-10.6 0M1614.7 757.5a5.3 5.3 0 1 0 10.6 0a5.3 5.3 0 1 0-10.6 0M1344.1 493.3a5.3 5.3 0 1 0 10.6 0a5.3 5.3 0 1 0-10.6 0M1649.3 781.8a5.3 5.3 0 1 0 10.6 0a5.3 5.3 0 1 0-10.6 0M1280.8 620.9a5.3 5.3 0 1 0 10.6 0a5.3 5.3 0 1 0-10.6 0M1326.5 424.8a5.3 5.3 0 1 0 10.6 0a5.3 5.3 0 1 0-10.6 0M1377.3 502.8a5.3 5.3 0 1 0 10.6 0a5.3 5.3 0 1 0-10.6 0M1269.6 600.2a5.3 5.3 0 1 0 10.6 0a5.3 5.3 0 1 0-10.6 0M1739.8 760.0a5.3 5.3 0 1 0 10.6 0a5.3 5.3 0 1 0-10.6 0M1494.6 711.0a5.3 5.3 0 1 0 10.6 0a5.3 5.3 0 1 0-10.6 0M779.6 706.5a5.3 5.3 0 1 0 10.6 0a5.3 5.3 0 1 0-10.6 0M854.8 777.5a5.3 5.3 0 1 0 10.6 0a5.3 5.3 0 1 0-10.6 0M1325.1 599.9a5.3 5.3 0 1 0 10.6 0a5.3 5.3 0 1 0-10.6 0M1504.7 738.1a5.3 5.3 0 1 0 10.6 0a5.3 5.3 0 1 0-10.6 0M1378.1 582.1a5.3 5.3 0 1 0 10.6 0a5.3 5.3 0 1 0-10.6 0M1602.1 714.3a5.3 5.3 0 1 0 10.6 0a5.3 5.3 0 1 0-10.6 0M1642.1 677.6a5.3 5.3 0 1 0 10.6 0a5.3 5.3 0 1 0-10.6 0M1092.3 562.3a5.3 5.3 0 1 0 10.6 0a5.3 5.3 0 1 0-10.6 0M1278.0 546.3a5.3 5.3 0 1 0 10.6 0a5.3 5.3 0 1 0-10.6 0M1432.4 583.3a5.3 5.3 0 1 0 10.6 0a5.3 5.3 0 1 0-10.6 0M1561.4 759.3a5.3 5.3 0 1 0 10.6 0a5.3 5.3 0 1 0-10.6 0M1622.7 763.6a5.3 5.3 0 1 0 10.6 0a5.3 5.3 0 1 0-10.6 0M1310.7 738.4a5.3 5.3 0 1 0 10.6 0a5.3 5.3 0 1 0-10.6 0M1595.0 643.4a5.3 5.3 0 1 0 10.6 0a5.3 5.3 0 1 0-10.6 0M1456.6 763.2a5.3 5.3 0 1 0 10.6 0a5.3 5.3 0 1 0-10.6 0M1350.8 455.7a5.3 5.3 0 1 0 10.6 0a5.3 5.3 0 1 0-10.6 0M765.6 710.9a5.3 5.3 0 1 0 10.6 0a5.3 5.3 0 1 0-10.6 0M1547.4 714.8a5.3 5.3 0 1 0 10.6 0a5.3 5.3 0 1 0-10.6 0M1302.7 470.5a5.3 5.3 0 1 0 10.6 0a5.3 5.3 0 1 0-10.6 0M1120.6 652.9a5.3 5.3 0 1 0 10.6 0a5.3 5.3 0 1 0-10.6 0M1325.4 706.4a5.3 5.3 0 1 0 10.6 0a5.3 5.3 0 1 0-10.6 0M1286.1 775.1a5.3 5.3 0 1 0 10.6 0a5.3 5.3 0 1 0-10.6 0M1340.7 617.9a5.3 5.3 0 1 0 10.6 0a5.3 5.3 0 1 0-10.6 0M1687.5 783.3a5.3 5.3 0 1 0 10.6 0a5.3 5.3 0 1 0-10.6 0M1225.1 388.0a5.3 5.3 0 1 0 10.6 0a5.3 5.3 0 1 0-10.6 0M1416.6 746.5a5.3 5.3 0 1 0 10.6 0a5.3 5.3 0 1 0-10.6 0M1305.8 523.4a5.3 5.3 0 1 0 10.6 0a5.3 5.3 0 1 0-10.6 0M1308.8 457.8a5.3 5.3 0 1 0 10.6 0a5.3 5.3 0 1 0-10.6 0M1329.3 772.8a5.3 5.3 0 1 0 10.6 0a5.3 5.3 0 1 0-10.6 0M1254.5 476.1a5.3 5.3 0 1 0 10.6 0a5.3 5.3 0 1 0-10.6 0M1293.7 617.5a5.3 5.3 0 1 0 10.6 0a5.3 5.3 0 1 0-10.6 0M1262.7 703.6a5.3 5.3 0 1 0 10.6 0a5.3 5.3 0 1 0-10.6 0M1462.4 721.5a5.3 5.3 0 1 0 10.6 0a5.3 5.3 0 1 0-10.6 0M1532.9 756.3a5.3 5.3 0 1 0 10.6 0a5.3 5.3 0 1 0-10.6 0M1333.0 435.3a5.3 5.3 0 1 0 10.6 0a5.3 5.3 0 1 0-10.6 0M1551.3 596.0a5.3 5.3 0 1 0 10.6 0a5.3 5.3 0 1 0-10.6 0M1499.9 663.3a5.3 5.3 0 1 0 10.6 0a5.3 5.3 0 1 0-10.6 0M1095.0 615.9a5.3 5.3 0 1 0 10.6 0a5.3 5.3 0 1 0-10.6 0M1635.5 673.4a5.3 5.3 0 1 0 10.6 0a5.3 5.3 0 1 0-10.6 0M1344.6 503.4a5.3 5.3 0 1 0 10.6 0a5.3 5.3 0 1 0-10.6 0M1382.0 525.1a5.3 5.3 0 1 0 10.6 0a5.3 5.3 0 1 0-10.6 0M1604.5 779.8a5.3 5.3 0 1 0 10.6 0a5.3 5.3 0 1 0-10.6 0M1499.7 750.1a5.3 5.3 0 1 0 10.6 0a5.3 5.3 0 1 0-10.6 0M1283.3 461.5a5.3 5.3 0 1 0 10.6 0a5.3 5.3 0 1 0-10.6 0M1246.8 645.2a5.3 5.3 0 1 0 10.6 0a5.3 5.3 0 1 0-10.6 0M1393.5 538.3a5.3 5.3 0 1 0 10.6 0a5.3 5.3 0 1 0-10.6 0M1350.0 502.0a5.3 5.3 0 1 0 10.6 0a5.3 5.3 0 1 0-10.6 0M1332.3 423.0a5.3 5.3 0 1 0 10.6 0a5.3 5.3 0 1 0-10.6 0M1382.7 775.0a5.3 5.3 0 1 0 10.6 0a5.3 5.3 0 1 0-10.6 0M1250.7 625.1a5.3 5.3 0 1 0 10.6 0a5.3 5.3 0 1 0-10.6 0M1442.6 502.5a5.3 5.3 0 1 0 10.6 0a5.3 5.3 0 1 0-10.6 0M1236.1 521.0a5.3 5.3 0 1 0 10.6 0a5.3 5.3 0 1 0-10.6 0M1513.0 633.1a5.3 5.3 0 1 0 10.6 0a5.3 5.3 0 1 0-10.6 0M1305.3 565.9a5.3 5.3 0 1 0 10.6 0a5.3 5.3 0 1 0-10.6 0M1667.1 716.5a5.3 5.3 0 1 0 10.6 0a5.3 5.3 0 1 0-10.6 0M1355.2 612.5a5.3 5.3 0 1 0 10.6 0a5.3 5.3 0 1 0-10.6 0M1334.4 784.3a5.3 5.3 0 1 0 10.6 0a5.3 5.3 0 1 0-10.6 0M1441.7 712.4a5.3 5.3 0 1 0 10.6 0a5.3 5.3 0 1 0-10.6 0M1530.2 614.3a5.3 5.3 0 1 0 10.6 0a5.3 5.3 0 1 0-10.6 0M1312.2 692.2a5.3 5.3 0 1 0 10.6 0a5.3 5.3 0 1 0-10.6 0M1493.4 613.5a5.3 5.3 0 1 0 10.6 0a5.3 5.3 0 1 0-10.6 0M1418.6 496.8a5.3 5.3 0 1 0 10.6 0a5.3 5.3 0 1 0-10.6 0M1552.8 626.0a5.3 5.3 0 1 0 10.6 0a5.3 5.3 0 1 0-10.6 0M1315.9 739.5a5.3 5.3 0 1 0 10.6 0a5.3 5.3 0 1 0-10.6 0M1781.8 775.8a5.3 5.3 0 1 0 10.6 0a5.3 5.3 0 1 0-10.6 0M1307.4 519.8a5.3 5.3 0 1 0 10.6 0a5.3 5.3 0 1 0-10.6 0M1306.1 618.3a5.3 5.3 0 1 0 10.6 0a5.3 5.3 0 1 0-10.6 0M979.7 680.4a5.3 5.3 0 1 0 10.6 0a5.3 5.3 0 1 0-10.6 0M1324.9 445.4a5.3 5.3 0 1 0 10.6 0a5.3 5.3 0 1 0-10.6 0M1325.4 724.0a5.3 5.3 0 1 0 10.6 0a5.3 5.3 0 1 0-10.6 0M800.2 653.1a5.3 5.3 0 1 0 10.6 0a5.3 5.3 0 1 0-10.6 0M1271.6 623.0a5.3 5.3 0 1 0 10.6 0a5.3 5.3 0 1 0-10.6 0M1062.6 641.3a5.3 5.3 0 1 0 10.6 0a5.3 5.3 0 1 0-10.6 0M1627.8 662.4a5.3 5.3 0 1 0 10.6 0a5.3 5.3 0 1 0-10.6 0M1340.2 772.3a5.3 5.3 0 1 0 10.6 0a5.3 5.3 0 1 0-10.6 0M1582.8 721.8a5.3 5.3 0 1 0 10.6 0a5.3 5.3 0 1 0-10.6 0M1507.4 772.7a5.3 5.3 0 1 0 10.6 0a5.3 5.3 0 1 0-10.6 0M1397.9 748.0a5.3 5.3 0 1 0 10.6 0a5.3 5.3 0 1 0-10.6 0M1531.3 728.4a5.3 5.3 0 1 0 10.6 0a5.3 5.3 0 1 0-10.6 0M1544.8 610.8a5.3 5.3 0 1 0 10.6 0a5.3 5.3 0 1 0-10.6 0M1631.6 768.6a5.3 5.3 0 1 0 10.6 0a5.3 5.3 0 1 0-10.6 0M1255.9 689.0a5.3 5.3 0 1 0 10.6 0a5.3 5.3 0 1 0-10.6 0M1280.1 495.1a5.3 5.3 0 1 0 10.6 0a5.3 5.3 0 1 0-10.6 0M1488.4 707.9a5.3 5.3 0 1 0 10.6 0a5.3 5.3 0 1 0-10.6 0M1250.8 546.5a5.3 5.3 0 1 0 10.6 0a5.3 5.3 0 1 0-10.6 0M853.0 771.3a5.3 5.3 0 1 0 10.6 0a5.3 5.3 0 1 0-10.6 0M973.1 687.2a5.3 5.3 0 1 0 10.6 0a5.3 5.3 0 1 0-10.6 0M1490.7 738.7a5.3 5.3 0 1 0 10.6 0a5.3 5.3 0 1 0-10.6 0M1625.2 651.0a5.3 5.3 0 1 0 10.6 0a5.3 5.3 0 1 0-10.6 0M1389.9 470.5a5.3 5.3 0 1 0 10.6 0a5.3 5.3 0 1 0-10.6 0M1317.1 611.1a5.3 5.3 0 1 0 10.6 0a5.3 5.3 0 1 0-10.6 0M1535.7 724.8a5.3 5.3 0 1 0 10.6 0a5.3 5.3 0 1 0-10.6 0M1347.8 618.1a5.3 5.3 0 1 0 10.6 0a5.3 5.3 0 1 0-10.6 0M1535.5 666.3a5.3 5.3 0 1 0 10.6 0a5.3 5.3 0 1 0-10.6 0M1333.3 462.2a5.3 5.3 0 1 0 10.6 0a5.3 5.3 0 1 0-10.6 0M1217.7 637.1a5.3 5.3 0 1 0 10.6 0a5.3 5.3 0 1 0-10.6 0M1436.5 774.3a5.3 5.3 0 1 0 10.6 0a5.3 5.3 0 1 0-10.6 0M1683.6 731.0a5.3 5.3 0 1 0 10.6 0a5.3 5.3 0 1 0-10.6 0M1255.8 755.9a5.3 5.3 0 1 0 10.6 0a5.3 5.3 0 1 0-10.6 0M1713.9 736.0a5.3 5.3 0 1 0 10.6 0a5.3 5.3 0 1 0-10.6 0M1505.0 724.8a5.3 5.3 0 1 0 10.6 0a5.3 5.3 0 1 0-10.6 0M1443.1 576.2a5.3 5.3 0 1 0 10.6 0a5.3 5.3 0 1 0-10.6 0M1321.0 414.6a5.3 5.3 0 1 0 10.6 0a5.3 5.3 0 1 0-10.6 0M1598.0 785.4a5.3 5.3 0 1 0 10.6 0a5.3 5.3 0 1 0-10.6 0M1688.1 741.6a5.3 5.3 0 1 0 10.6 0a5.3 5.3 0 1 0-10.6 0M944.2 664.8a5.3 5.3 0 1 0 10.6 0a5.3 5.3 0 1 0-10.6 0M1415.3 735.1a5.3 5.3 0 1 0 10.6 0a5.3 5.3 0 1 0-10.6 0M1400.7 750.2a5.3 5.3 0 1 0 10.6 0a5.3 5.3 0 1 0-10.6 0M1447.5 512.6a5.3 5.3 0 1 0 10.6 0a5.3 5.3 0 1 0-10.6 0M1479.2 600.8a5.3 5.3 0 1 0 10.6 0a5.3 5.3 0 1 0-10.6 0M1273.8 618.1a5.3 5.3 0 1 0 10.6 0a5.3 5.3 0 1 0-10.6 0M1253.9 544.6a5.3 5.3 0 1 0 10.6 0a5.3 5.3 0 1 0-10.6 0M1192.7 370.7a5.3 5.3 0 1 0 10.6 0a5.3 5.3 0 1 0-10.6 0M1269.6 609.6a5.3 5.3 0 1 0 10.6 0a5.3 5.3 0 1 0-10.6 0M1140.3 773.5a5.3 5.3 0 1 0 10.6 0a5.3 5.3 0 1 0-10.6 0M1239.3 766.0a5.3 5.3 0 1 0 10.6 0a5.3 5.3 0 1 0-10.6 0M1582.0 668.4a5.3 5.3 0 1 0 10.6 0a5.3 5.3 0 1 0-10.6 0M1582.2 721.7a5.3 5.3 0 1 0 10.6 0a5.3 5.3 0 1 0-10.6 0M1522.8 776.2a5.3 5.3 0 1 0 10.6 0a5.3 5.3 0 1 0-10.6 0M1046.8 718.5a5.3 5.3 0 1 0 10.6 0a5.3 5.3 0 1 0-10.6 0M1102.6 773.8a5.3 5.3 0 1 0 10.6 0a5.3 5.3 0 1 0-10.6 0M1579.2 643.3a5.3 5.3 0 1 0 10.6 0a5.3 5.3 0 1 0-10.6 0M1326.9 654.6a5.3 5.3 0 1 0 10.6 0a5.3 5.3 0 1 0-10.6 0M1508.1 644.5a5.3 5.3 0 1 0 10.6 0a5.3 5.3 0 1 0-10.6 0M1620.1 725.5a5.3 5.3 0 1 0 10.6 0a5.3 5.3 0 1 0-10.6 0M1579.0 716.8a5.3 5.3 0 1 0 10.6 0a5.3 5.3 0 1 0-10.6 0M1528.0 699.5a5.3 5.3 0 1 0 10.6 0a5.3 5.3 0 1 0-10.6 0M875.9 712.3a5.3 5.3 0 1 0 10.6 0a5.3 5.3 0 1 0-10.6 0M1226.9 621.5a5.3 5.3 0 1 0 10.6 0a5.3 5.3 0 1 0-10.6 0M1210.2 653.4a5.3 5.3 0 1 0 10.6 0a5.3 5.3 0 1 0-10.6 0M1647.0 697.8a5.3 5.3 0 1 0 10.6 0a5.3 5.3 0 1 0-10.6 0M1382.5 735.1a5.3 5.3 0 1 0 10.6 0a5.3 5.3 0 1 0-10.6 0M1534.0 612.6a5.3 5.3 0 1 0 10.6 0a5.3 5.3 0 1 0-10.6 0M1493.9 751.9a5.3 5.3 0 1 0 10.6 0a5.3 5.3 0 1 0-10.6 0M1481.8 783.1a5.3 5.3 0 1 0 10.6 0a5.3 5.3 0 1 0-10.6 0M1546.8 609.3a5.3 5.3 0 1 0 10.6 0a5.3 5.3 0 1 0-10.6 0M1298.3 632.3a5.3 5.3 0 1 0 10.6 0a5.3 5.3 0 1 0-10.6 0M1611.7 784.2a5.3 5.3 0 1 0 10.6 0a5.3 5.3 0 1 0-10.6 0M1362.9 471.1a5.3 5.3 0 1 0 10.6 0a5.3 5.3 0 1 0-10.6 0M1416.7 732.7a5.3 5.3 0 1 0 10.6 0a5.3 5.3 0 1 0-10.6 0M1257.4 758.9a5.3 5.3 0 1 0 10.6 0a5.3 5.3 0 1 0-10.6 0M925.3 536.3a5.3 5.3 0 1 0 10.6 0a5.3 5.3 0 1 0-10.6 0M1255.2 630.3a5.3 5.3 0 1 0 10.6 0a5.3 5.3 0 1 0-10.6 0M1231.9 540.7a5.3 5.3 0 1 0 10.6 0a5.3 5.3 0 1 0-10.6 0M1566.5 765.5a5.3 5.3 0 1 0 10.6 0a5.3 5.3 0 1 0-10.6 0M1293.2 560.8a5.3 5.3 0 1 0 10.6 0a5.3 5.3 0 1 0-10.6 0M954.7 741.8a5.3 5.3 0 1 0 10.6 0a5.3 5.3 0 1 0-10.6 0M1257.1 618.9a5.3 5.3 0 1 0 10.6 0a5.3 5.3 0 1 0-10.6 0M1330.7 492.5a5.3 5.3 0 1 0 10.6 0a5.3 5.3 0 1 0-10.6 0M1305.2 564.1a5.3 5.3 0 1 0 10.6 0a5.3 5.3 0 1 0-10.6 0M933.6 706.8a5.3 5.3 0 1 0 10.6 0a5.3 5.3 0 1 0-10.6 0M1445.8 553.3a5.3 5.3 0 1 0 10.6 0a5.3 5.3 0 1 0-10.6 0M1243.4 547.0a5.3 5.3 0 1 0 10.6 0a5.3 5.3 0 1 0-10.6 0M1536.8 655.4a5.3 5.3 0 1 0 10.6 0a5.3 5.3 0 1 0-10.6 0M1100.5 402.9a5.3 5.3 0 1 0 10.6 0a5.3 5.3 0 1 0-10.6 0M1290.3 571.9a5.3 5.3 0 1 0 10.6 0a5.3 5.3 0 1 0-10.6 0M1303.1 621.2a5.3 5.3 0 1 0 10.6 0a5.3 5.3 0 1 0-10.6 0M1394.1 773.7a5.3 5.3 0 1 0 10.6 0a5.3 5.3 0 1 0-10.6 0M1049.9 552.2a5.3 5.3 0 1 0 10.6 0a5.3 5.3 0 1 0-10.6 0M1306.6 553.9a5.3 5.3 0 1 0 10.6 0a5.3 5.3 0 1 0-10.6 0M1258.3 649.9a5.3 5.3 0 1 0 10.6 0a5.3 5.3 0 1 0-10.6 0M1669.9 748.6a5.3 5.3 0 1 0 10.6 0a5.3 5.3 0 1 0-10.6 0M1613.1 675.7a5.3 5.3 0 1 0 10.6 0a5.3 5.3 0 1 0-10.6 0M1067.1 493.9a5.3 5.3 0 1 0 10.6 0a5.3 5.3 0 1 0-10.6 0M1260.3 703.6a5.3 5.3 0 1 0 10.6 0a5.3 5.3 0 1 0-10.6 0M1586.4 728.6a5.3 5.3 0 1 0 10.6 0a5.3 5.3 0 1 0-10.6 0M1619.6 737.5a5.3 5.3 0 1 0 10.6 0a5.3 5.3 0 1 0-10.6 0M1268.3 661.5a5.3 5.3 0 1 0 10.6 0a5.3 5.3 0 1 0-10.6 0M1306.6 469.6a5.3 5.3 0 1 0 10.6 0a5.3 5.3 0 1 0-10.6 0M1411.3 526.9a5.3 5.3 0 1 0 10.6 0a5.3 5.3 0 1 0-10.6 0M1087.4 743.6a5.3 5.3 0 1 0 10.6 0a5.3 5.3 0 1 0-10.6 0M1260.8 404.7a5.3 5.3 0 1 0 10.6 0a5.3 5.3 0 1 0-10.6 0M1472.7 717.4a5.3 5.3 0 1 0 10.6 0a5.3 5.3 0 1 0-10.6 0M1342.8 575.4a5.3 5.3 0 1 0 10.6 0a5.3 5.3 0 1 0-10.6 0M1334.2 475.5a5.3 5.3 0 1 0 10.6 0a5.3 5.3 0 1 0-10.6 0M1633.1 703.0a5.3 5.3 0 1 0 10.6 0a5.3 5.3 0 1 0-10.6 0M1551.5 742.1a5.3 5.3 0 1 0 10.6 0a5.3 5.3 0 1 0-10.6 0M824.4 777.4a5.3 5.3 0 1 0 10.6 0a5.3 5.3 0 1 0-10.6 0M1447.4 507.8a5.3 5.3 0 1 0 10.6 0a5.3 5.3 0 1 0-10.6 0M1407.9 586.1a5.3 5.3 0 1 0 10.6 0a5.3 5.3 0 1 0-10.6 0M1274.4 686.1a5.3 5.3 0 1 0 10.6 0a5.3 5.3 0 1 0-10.6 0M1301.9 624.0a5.3 5.3 0 1 0 10.6 0a5.3 5.3 0 1 0-10.6 0M1349.6 475.4a5.3 5.3 0 1 0 10.6 0a5.3 5.3 0 1 0-10.6 0M1439.1 785.5a5.3 5.3 0 1 0 10.6 0a5.3 5.3 0 1 0-10.6 0M1342.6 601.1a5.3 5.3 0 1 0 10.6 0a5.3 5.3 0 1 0-10.6 0M1487.5 738.2a5.3 5.3 0 1 0 10.6 0a5.3 5.3 0 1 0-10.6 0M951.5 597.1a5.3 5.3 0 1 0 10.6 0a5.3 5.3 0 1 0-10.6 0M1239.0 658.1a5.3 5.3 0 1 0 10.6 0a5.3 5.3 0 1 0-10.6 0M1358.2 762.9a5.3 5.3 0 1 0 10.6 0a5.3 5.3 0 1 0-10.6 0M1196.6 755.6a5.3 5.3 0 1 0 10.6 0a5.3 5.3 0 1 0-10.6 0M1664.5 766.7a5.3 5.3 0 1 0 10.6 0a5.3 5.3 0 1 0-10.6 0M1304.1 563.8a5.3 5.3 0 1 0 10.6 0a5.3 5.3 0 1 0-10.6 0M1265.0 570.9a5.3 5.3 0 1 0 10.6 0a5.3 5.3 0 1 0-10.6 0" fill="#bdb399" stroke="#4a4a4a" stroke-width="0.9"/><path d="M1160 366L1228 366M1245 365L1276 365M1260 374L1292 374M1213 382L1300 382M1120 390L1132 390M1107 397L1143 398M1242 397L1322 398M1134 414L1140 414M1236 414L1338 414M1079 422L1103 422M1337 422L1350 422M1240 438L1309 438M1333 439L1369 439M1045 447L1138 446M1237 445L1357 446M1032 454L1093 454M1360 462L1402 462M1277 469L1410 470M1239 486L1341 486M1248 493L1443 494M1244 502L1412 502M1446 503L1452 503M1237 510L1441 510M1251 519L1330 518M1358 519L1472 518M979 527L1110 526M1236 525L1418 526M930 535L1051 534M923 542L954 542M1282 541L1471 542M917 550L1059 550M1322 550L1515 550M902 558L998 558M1300 566L1405 566M1424 566L1464 566M1314 575L1415 574M1423 574L1535 574M1299 582L1538 582M1354 589L1565 590M860 597L981 598M1355 597L1479 598M1494 599L1572 599M840 606L889 606M1235 607L1320 606M1334 606L1388 606M1455 606L1576 606M827 613L893 614M927 614L1151 614M1233 614L1329 614M928 622L1117 622M1232 622L1338 622M1561 623L1604 623M815 629L943 630M1111 630L1165 630M1226 630L1316 630M1328 629L1400 630M1524 630L1614 630M815 638L895 638M921 638L1155 638M1175 638L1211 638M1223 638L1403 638M1089 647L1313 646M1492 646L1534 646M1541 647L1636 646M936 655L980 654M996 655L1145 654M1172 654L1362 654M1546 655L1614 654M1633 654L1645 654M808 662L959 662M997 662L1049 662M1234 662L1335 662M1486 663L1627 662M1308 669L1357 669M1486 670L1510 670M1545 671L1618 670M1641 670L1667 670M747 679L754 679M808 679L967 678M1557 679L1630 678M1666 677L1672 677M735 686L771 686M802 686L959 686M968 687L1134 686M1539 686L1683 686M881 694L970 694M993 694L1137 694M1240 694L1357 694M1437 694L1449 694M1480 694L1535 694M1549 694L1684 694M1691 695L1697 695M732 702L792 702M825 703L877 702M1242 703L1359 702M1475 702L1644 702M1666 703L1708 703M946 709L1045 710M1681 709L1714 710M1238 718L1360 718M1443 718L1535 718M748 727L859 726M879 726L1105 726M1544 726L1736 726M750 734L963 734M989 733L1051 734M1334 734L1365 734M1378 734L1384 734M1396 735L1552 734M1587 734L1646 734M1652 734L1723 734M1736 734L1748 734M759 741L801 742M1413 741L1561 742M1568 743L1614 742M1201 751L1269 750M1287 750L1382 750M1389 751L1605 750M1635 749L1767 750M770 758L904 758M1030 759L1118 758M1133 759L1358 758M1553 758L1719 758M1731 757L1774 757M774 766L918 766M1315 766L1429 766M1454 765L1596 766M1605 765L1781 766M780 774L859 774M865 775L1113 774M1119 773L1279 774M1291 775L1550 774M1581 774L1793 774M787 781L914 782M935 783L1117 782M1147 782L1320 782M1349 782L1438 782M744 681L744 705M758 687L758 749M775 697L775 777M792 703L792 709M792 730L792 791M809 641L809 777M822 617L822 685M822 725L822 787M839 730L839 791M872 654L872 786M883 570L883 712M905 554L905 572M905 777L905 789M934 715L934 789M946 525L946 696M946 715L946 787M959 514L959 630M959 652L959 790M974 684L974 788M995 707L995 791M1005 475L1005 554M1023 743L1023 791M1043 451L1043 493M1043 731L1043 789M1056 643L1056 787M1070 457L1070 559M1070 597L1070 767M1088 427L1088 666M1104 491L1104 585M1104 612L1104 790M1115 392L1115 490M1115 616L1115 787M1132 752L1132 789M1153 746L1153 789M1187 785L1187 791M1209 747L1209 789M1228 743L1228 792M1238 361L1238 441M1238 453L1238 593M1238 623L1238 672M1238 702L1238 714M1259 360L1259 565M1259 586L1259 757M1259 765L1259 789M1281 464L1281 548M1281 556L1281 622M1281 643L1281 790M1295 385L1295 525M1295 564L1295 766M1310 616L1310 743M1310 755L1310 791M1320 404L1320 533M1320 548L1320 685M1320 706L1320 791M1336 553L1336 727M1350 429L1350 473M1350 505L1350 579M1350 606L1350 737M1350 763L1350 788M1367 438L1367 516M1381 452L1381 580M1399 463L1399 518M1399 540L1399 602M1416 481L1416 535M1416 734L1416 788M1430 489L1430 609M1430 732L1430 787M1446 604L1446 610M1446 694L1446 791M1456 509L1456 515M1456 763L1456 789M1499 689L1499 788M1514 555L1514 676M1514 694L1514 773M1529 589L1529 760M1529 780L1529 786M1550 585L1550 751M1572 620L1572 738M1572 748L1572 790M1603 630L1603 787M1617 635L1617 786M1633 648L1633 692M1633 728L1633 789M1648 659L1648 787M1665 677L1665 744M1686 691L1686 788M1703 706L1703 718M1703 744L1703 787M1725 724L1725 754M1745 738L1745 788M1783 774L1783 786M1794 784L1794 790M1351 727L1361 735M1365 739L1428 787M895 646L1027 749M1136 428L1140 431M1240 509L1364 605M1490 576L1734 766M1295 643L1464 512M1240 765L1269 788M1574 773L1593 788M1606 721L1670 672M1295 532L1394 456M911 548L1035 644M966 508L1138 641M1008 551L1157 667M831 701L977 589M1396 769L1597 613M1292 654L1465 520M1552 749L1656 669M819 712L919 789M973 503L1100 601M1477 737L1615 629M972 501L1082 587M1237 483L1332 409M1483 685L1616 788M1076 630L1138 678M1224 744L1277 785M1737 770L1766 747M1009 474L1128 567M1224 641L1239 652M1309 733L1357 696M1462 615L1472 607M1047 752L1094 789M1250 361L1757 752M1118 395L826 622M1300 470L1233 521M1132 598L1050 660M1126 552L880 760M1000 480L1137 689M1177 750L1200 786M1240 560L1236 564M1165 631L1050 740M1300 500L1448 606M1468 620L1700 786M1480 560L1423 605M1390 631L1361 654M1347 665L1290 710M1560 620L1476 689M1472 693L1430 728M1425 732L1360 786M760 700L775 690M805 670L880 620M1064 434L1132 511M1240 360V786M1137 420V645M1123 383L1137 420M1137 420c15-10 30-10 45-15s20-10 18 5-20 25-15 40 20 20 30 35 25 5 25 5M1137 480c20 5 40-10 60-5s25 25 43 15M1137 530c25 0 40 5 55 15s10 25 0 40 5 35 20 40 20 0 28-5M1137 600c20-5 40 10 60 5s30-20 43-15M1120 700c40-20 80 10 130-10M1370 600c20 30 10 60 40 90s40 20 60 40M1440 660c20-10 40 10 60 0M1337.8 490.1l6 4M1463.1 760.8l-6 4M1572.3 757.9l6 4M1427.2 558.1l6 4M1372.2 530.9l-6 -4M1676.4 693.5l-6 0M1371.4 780.4l6 4M840.7 778.5l-6 0M1663.0 758.7l6 -4M1274.8 670.4l6 0M831.9 756.8l-6 -4M1589.5 688.5l6 -4M1720.5 726.1l-6 0M1419.5 748.7l6 0M1450.5 535.4l-6 -4M1470.1 720.7l6 4M1643.1 720.9l-6 4M974.7 669.7l-6 0M1295.0 576.7l-6 -4M1414.3 597.9l-6 4M1377.2 643.7l-6 -4M1597.9 635.4l6 -4M1584.0 631.8l-6 4M1315.5 640.4l-6 0M1417.7 783.3l6 4M1530.9 656.8l-6 -4M1773.5 783.7l6 4M1275.5 688.8l-6 4M1666.8 743.5l6 0M1346.9 671.7l-6 0M978.4 613.1l6 0M1310.9 629.6l6 -4M1617.8 696.7l6 -4M1635.8 756.6l-6 4M1503.0 588.8l6 4M900.7 672.8l6 -4M1302.3 475.0l-6 4M1410.4 533.1l6 4M1288.9 728.4l-6 -4M1706.8 705.6l-6 0M1585.9 736.9l-6 0M913.9 674.8l-6 0M842.4 763.8l6 4M1541.1 609.7l-6 0M1571.4 632.9l6 4M786.8 772.9l-6 -4M1671.6 736.6l6 4M1262.4 625.3l-6 4M811.4 735.5l-6 0M1280.6 497.9l-6 -4M1369.1 602.0l6 4M1024.5 656.3l-6 -4M1554.9 589.3l-6 4M1406.1 477.4l6 -4M1236.1 425.8l6 -4M1441.7 526.5l-6 4M1604.1 765.4l-6 -4M1643.2 702.5l6 -4M1085.6 665.9l-6 -4M1094.4 638.6l6 0M1276.0 632.2l-6 -4M780.5 724.6l-6 4M1638.1 734.3l-6 4M1431.8 728.4l6 4M1281.6 733.1l6 4M1092.3 748.3l-6 0M961.6 701.2l6 0M1299.7 777.7l-6 4M1030.2 628.7l6 4M1343.6 639.6l-6 0M1321.8 586.4l-6 4M1569.5 701.6l6 0M1229.3 622.2l-6 0M1593.2 718.7l-6 0M1444.8 720.2l-6 0M1320.3 474.3l-6 4M1322.9 499.0l-6 4M1591.5 666.9l-6 4M1294.5 462.5l6 -4M1385.6 591.8l-6 -4M1327.2 621.3l6 4M1225.0 758.4l-6 -4M1509.1 767.5l6 -4M1467.1 726.7l6 -4M1507.8 691.3l-6 4M1435.3 583.3l-6 0M1443.9 557.7l6 0M1326.9 587.5l-6 -4M1014.0 762.4l6 0M1612.2 772.8l-6 0M1596.4 714.1l-6 -4M1173.0 384.8l6 -4M1379.4 461.9l6 0M1762.7 759.2l6 -4M1308.6 668.5l6 0M1377.8 594.6l-6 -4M1333.5 581.5l6 -4M1732.2 729.4l6 -4M1184.7 648.6l6 -4M1360.2 442.7l-6 -4M1031.3 744.6l6 4M1253.7 684.7l-6 0M1516.3 730.8l6 -4M1690.5 740.2l-6 0M1308.6 647.4l-6 -4M1301.8 466.5l-6 0M1560.4 610.3l-6 4M1509.5 671.5l6 -4M1302.2 685.0l6 4M884.4 753.6l-6 -4M1258.3 414.0l6 4M1507.1 781.8l6 4M1297.6 462.4l-6 4M1301.4 578.1l6 4M1305.0 581.8l6 -4M1394.4 477.1l6 0M1479.3 619.6l-6 0M1355.4 742.3l-6 0M1685.5 748.3l-6 0M1315.0 493.0l-6 0M985.3 671.6l6 4M1511.5 721.1l-6 -4M1537.4 628.1l6 0M767.7 745.7l-6 4M1187.9 370.7l-6 0M1516.4 758.2l-6 4M1549.4 718.4l6 0M1261.2 687.5l-6 4M1620.0 757.5l6 0M1349.4 493.3l6 0M1654.6 781.8l-6 -4M1286.1 620.9l6 0M1331.8 424.8l6 0M1382.6 502.8l6 -4M1274.9 600.2l6 4M1745.1 760.0l-6 -4M1499.9 711.0l6 -4M784.9 706.5l-6 -4M860.1 777.5l6 0M1330.4 599.9l6 -4M1510.0 738.1l-6 4M1383.4 582.1l-6 0M1607.4 714.3l-6 0M1647.4 677.6l-6 -4M1097.6 562.3l6 -4M1283.3 546.3l6 -4M1437.7 583.3l-6 -4M1566.7 759.3l6 0M1628.0 763.6l6 0M1316.0 738.4l-6 0M1600.3 643.4l6 4M1461.9 763.2l6 4M1356.1 455.7l-6 0M770.9 710.9l-6 4M1552.7 714.8l6 4M1308.0 470.5l-6 4M1125.9 652.9l6 0M1330.7 706.4l6 -4M1291.4 775.1l-6 4M1346.0 617.9l-6 0M1692.8 783.3l-6 4M1230.4 388.0l-6 4M1421.9 746.5l6 -4M1311.1 523.4l6 4M1314.1 457.8l-6 -4M1334.6 772.8l6 0M1259.8 476.1l6 0M1299.0 617.5l6 0M1268.0 703.6l-6 -4M1467.7 721.5l-6 -4M1538.2 756.3l-6 -4M1338.3 435.3l6 4M1556.6 596.0l6 0M1505.2 663.3l-6 0M1100.3 615.9l-6 4M1640.8 673.4l6 -4M1349.9 503.4l6 -4M1387.3 525.1l-6 0M1609.8 779.8l6 -4M1505.0 750.1l-6 4M1288.6 461.5l-6 0M1252.1 645.2l6 -4M1398.8 538.3l6 4M1355.3 502.0l-6 0M1337.6 423.0l6 0M1388.0 775.0l-6 4M1256.0 625.1l-6 4M1447.9 502.5l-6 4M1241.4 521.0l6 0M1518.3 633.1l-6 0M1310.6 565.9l6 0M1672.4 716.5l-6 0M1360.5 612.5l6 -4M1339.7 784.3l-6 0M1447.0 712.4l-6 0M1535.5 614.3l-6 0M1317.5 692.2l-6 0M1498.7 613.5l6 0M1423.9 496.8l6 -4M1558.1 626.0l6 -4M1321.2 739.5l-6 -4M1787.1 775.8l6 4M1312.7 519.8l-6 0M1311.4 618.3l-6 -4M985.0 680.4l-6 0M1330.2 445.4l6 0M1330.7 724.0l-6 -4M805.5 653.1l6 0M1276.9 623.0l-6 0M1067.9 641.3l-6 4M1633.1 662.4l6 0M1345.5 772.3l-6 -4M1588.1 721.8l6 -4M1512.7 772.7l-6 4M1403.2 748.0l6 4M1536.6 728.4l-6 0M1550.1 610.8l6 4M1636.9 768.6l6 4M1261.2 689.0l-6 0M1285.4 495.1l-6 0M1493.7 707.9l6 -4M1256.1 546.5l-6 0M858.3 771.3l6 0M978.4 687.2l-6 4M1496.0 738.7l6 4M1630.5 651.0l-6 -4M1395.2 470.5l-6 -4M1322.4 611.1l-6 4M1541.0 724.8l-6 0M1353.1 618.1l-6 -4M1540.8 666.3l6 4M1338.6 462.2l-6 4M1223.0 637.1l-6 -4M1441.8 774.3l-6 -4M1688.9 731.0l6 -4M1261.1 755.9l-6 -4M1719.2 736.0l-6 0M1510.3 724.8l6 0M1448.4 576.2l-6 0M1326.3 414.6l6 4M1603.3 785.4l6 -4M1693.4 741.6l-6 0M949.5 664.8l6 4M1420.6 735.1l-6 4M1406.0 750.2l-6 -4M1452.8 512.6l-6 -4M1484.5 600.8l-6 0M1279.1 618.1l-6 0M1259.2 544.6l-6 0M1198.0 370.7l6 0M1274.9 609.6l-6 -4M1145.6 773.5l-6 4M1244.6 766.0l-6 4M1587.3 668.4l-6 0M1587.5 721.7l6 4M1528.1 776.2l-6 -4M1052.1 718.5l-6 4M1107.9 773.8l6 0M1584.5 643.3l-6 4M1332.2 654.6l-6 4M1513.4 644.5l-6 -4M1625.4 725.5l6 -4M1584.3 716.8l6 0M1533.3 699.5l-6 0M881.2 712.3l6 4M1232.2 621.5l6 -4M1215.5 653.4l-6 -4M1652.3 697.8l6 -4M1387.8 735.1l-6 0M1539.3 612.6l-6 0M1499.2 751.9l-6 0M1487.1 783.1l-6 0M1552.1 609.3l6 0M1303.6 632.3l-6 -4M1617.0 784.2l-6 0M1368.2 471.1l-6 0M1422.0 732.7l-6 4M1262.7 758.9l6 4M930.6 536.3l6 0M1260.5 630.3l6 4M1237.2 540.7l-6 4M1571.8 765.5l-6 4M1298.5 560.8l6 -4M960.0 741.8l-6 -4M1262.4 618.9l-6 0M1336.0 492.5l-6 0M1310.5 564.1l-6 -4M938.9 706.8l6 -4M1451.1 553.3l-6 -4M1248.7 547.0l6 -4M1542.1 655.4l6 4M1105.8 402.9l-6 -4M1295.6 571.9l-6 4M1308.4 621.2l-6 0M1399.4 773.7l-6 -4M1055.2 552.2l-6 0M1311.9 553.9l6 0M1263.6 649.9l-6 0M1675.2 748.6l-6 0M1618.4 675.7l6 -4M1072.4 493.9l-6 -4M1265.6 703.6l6 0M1591.7 728.6l6 -4M1624.9 737.5l6 -4M1273.6 661.5l-6 -4M1311.9 469.6l-6 4M1416.6 526.9l-6 -4M1092.7 743.6l6 4M1266.1 404.7l-6 -4M1478.0 717.4l6 -4M1348.1 575.4l-6 4M1339.5 475.5l6 0M1638.4 703.0l6 -4M1556.8 742.1l6 4M829.7 777.4l6 0M1452.7 507.8l-6 0M1413.2 586.1l6 -4M1279.7 686.1l6 4M1307.2 624.0l6 -4M1354.9 475.4l-6 0M1444.4 785.5l6 4M1347.9 601.1l6 0M1492.8 738.2l-6 0M956.8 597.1l6 0M1244.3 658.1l-6 0M1363.5 762.9l-6 -4M1201.9 755.6l-6 4M1669.8 766.7l6 4M1309.4 563.8l6 4M1270.3 570.9l-6 -4" fill="none" stroke="#f08a0e" stroke-width="2.7" stroke-linejoin="round" clip-path="url(#mc)"/><circle cx="1297" cy="385" r="14.6" fill="#fff" stroke="#e21c25" stroke-width="2.3"/><path d="M1287.5 385h19M1297 375.5v19" stroke="#e21c25" stroke-width="4.8"/><circle cx="1293" cy="403" r="14.6" fill="#fff" stroke="#e21c25" stroke-width="2.3"/><path d="M1283.5 403h19M1293 393.5v19" stroke="#e21c25" stroke-width="4.8"/><circle cx="1305" cy="405" r="14.6" fill="#fff" stroke="#e21c25" stroke-width="2.3"/><path d="M1295.5 405h19M1305 395.5v19" stroke="#e21c25" stroke-width="4.8"/><circle cx="1386" cy="456" r="14.6" fill="#fff" stroke="#e21c25" stroke-width="2.3"/><path d="M1376.5 456h19M1386 446.5v19" stroke="#e21c25" stroke-width="4.8"/><circle cx="1293" cy="509" r="14.6" fill="#fff" stroke="#e21c25" stroke-width="2.3"/><path d="M1283.5 509h19M1293 499.5v19" stroke="#e21c25" stroke-width="4.8"/><circle cx="1299" cy="502" r="14.6" fill="#fff" stroke="#e21c25" stroke-width="2.3"/><path d="M1289.5 502h19M1299 492.5v19" stroke="#e21c25" stroke-width="4.8"/><circle cx="932" cy="570" r="14.6" fill="#fff" stroke="#e21c25" stroke-width="2.3"/><path d="M922.5 570h19M932 560.5v19" stroke="#e21c25" stroke-width="4.8"/><circle cx="1343" cy="571" r="14.6" fill="#fff" stroke="#e21c25" stroke-width="2.3"/><path d="M1333.5 571h19M1343 561.5v19" stroke="#e21c25" stroke-width="4.8"/><circle cx="1387" cy="566" r="14.6" fill="#fff" stroke="#e21c25" stroke-width="2.3"/><path d="M1377.5 566h19M1387 556.5v19" stroke="#e21c25" stroke-width="4.8"/><circle cx="1451" cy="561" r="14.6" fill="#fff" stroke="#e21c25" stroke-width="2.3"/><path d="M1441.5 561h19M1451 551.5v19" stroke="#e21c25" stroke-width="4.8"/><circle cx="1529" cy="707" r="14.6" fill="#fff" stroke="#e21c25" stroke-width="2.3"/><path d="M1519.5 707h19M1529 697.5v19" stroke="#e21c25" stroke-width="4.8"/><circle cx="1603" cy="714" r="14.6" fill="#fff" stroke="#e21c25" stroke-width="2.3"/><path d="M1593.5 714h19M1603 704.5v19" stroke="#e21c25" stroke-width="4.8"/><circle cx="1525" cy="731" r="14.6" fill="#fff" stroke="#e21c25" stroke-width="2.3"/><path d="M1515.5 731h19M1525 721.5v19" stroke="#e21c25" stroke-width="4.8"/><circle cx="1646" cy="736" r="14.6" fill="#fff" stroke="#e21c25" stroke-width="2.3"/><path d="M1636.5 736h19M1646 726.5v19" stroke="#e21c25" stroke-width="4.8"/><circle cx="1444" cy="742" r="14.6" fill="#fff" stroke="#e21c25" stroke-width="2.3"/><path d="M1434.5 742h19M1444 732.5v19" stroke="#e21c25" stroke-width="4.8"/><circle cx="1727" cy="751" r="14.6" fill="#fff" stroke="#e21c25" stroke-width="2.3"/><path d="M1717.5 751h19M1727 741.5v19" stroke="#e21c25" stroke-width="4.8"/><circle cx="1736" cy="747" r="14.6" fill="#fff" stroke="#e21c25" stroke-width="2.3"/><path d="M1726.5 747h19M1736 737.5v19" stroke="#e21c25" stroke-width="4.8"/><circle cx="1597" cy="764" r="14.6" fill="#fff" stroke="#e21c25" stroke-width="2.3"/><path d="M1587.5 764h19M1597 754.5v19" stroke="#e21c25" stroke-width="4.8"/><circle cx="1243" cy="767" r="14.6" fill="#fff" stroke="#e21c25" stroke-width="2.3"/><path d="M1233.5 767h19M1243 757.5v19" stroke="#e21c25" stroke-width="4.8"/><circle cx="1258" cy="765" r="14.6" fill="#fff" stroke="#e21c25" stroke-width="2.3"/><path d="M1248.5 765h19M1258 755.5v19" stroke="#e21c25" stroke-width="4.8"/><circle cx="1518" cy="790" r="14.6" fill="#fff" stroke="#e21c25" stroke-width="2.3"/><path d="M1508.5 790h19M1518 780.5v19" stroke="#e21c25" stroke-width="4.8"/><circle cx="1219" cy="790" r="14.6" fill="#fff" stroke="#e21c25" stroke-width="2.3"/><path d="M1209.5 790h19M1219 780.5v19" stroke="#e21c25" stroke-width="4.8"/><rect x="605" y="750" width="1565" height="36" fill="url(#msh)"/></svg><div class="dlg"></div><div class="a" style="left:381px;top:786px;width:1789px;height:56px;background:#f0ecf1;border-top-left-radius:19px"></div><div class="a" style="left:381px;top:842px;width:1789px;height:1px;background:#cfcbcf"></div><div class="a" style="left:396px;top:802px;width:24px;height:24px;border-radius:50%;background:#fe5f57;border:1px solid #e3493f"></div><div class="a" style="left:436px;top:802px;width:24px;height:24px;border-radius:50%;background:#febb2e;border:1px solid #e0a018"></div><div class="a" style="left:476px;top:802px;width:24px;height:24px;border-radius:50%;background:#29c840;border:1px solid #1aad2b"></div><div class="t" style="left:777px;width:1000px;text-align:center;top:798.6px;font-size:27.65px;color:#474747;font-weight:bold;">Output OD Matrix — Features Total: 67000, Filtered: 67000, Selected: 0</div><svg class="i" style="left:380px;top:843px" width="1300" height="62" viewBox="380 843 1300 62"><g transform="translate(397 886) rotate(-60)"><path d="M0 0l10-5h22v10h-22z" fill="#f2d83a" stroke="#8a7a10" stroke-width="1.4" /><path d="M0 0l10-5v10z" fill="#ddd" stroke="#8a7a10" stroke-width="1.2" /><path d="M0 0l4-2v4z" fill="#444" stroke="none" stroke-width="2" /><line x1="32" y1="-5" x2="32" y2="5" stroke="#eee" stroke-width="1" /><rect x="32" y="-5" width="5" height="10" rx="0" fill="#f4f4f4" stroke="#8a7a10" stroke-width="1.2" /><line x1="12" y1="-1.5" x2="30" y2="-1.5" stroke="#fff6a0" stroke-width="1.5" /></g><rect x="446" y="859" width="27" height="8" rx="0" fill="#dedcd4" stroke="#cfcdc6" stroke-width="1.2" /><rect x="446" y="869" width="27" height="8" rx="0" fill="#dedcd4" stroke="#cfcdc6" stroke-width="1.2" /><rect x="446" y="879" width="27" height="8" rx="0" fill="#dedcd4" stroke="#cfcdc6" stroke-width="1.2" /><g transform="translate(457 886) rotate(-60)"><path d="M0 0l10-5h16v10h-16z" fill="#dcdad6" stroke="#c9c7c2" stroke-width="1.4" /><path d="M0 0l10-5v10z" fill="#e8e8e8" stroke="#c9c7c2" stroke-width="1.2" /><path d="M0 0l4-2v4z" fill="#ccc" stroke="none" stroke-width="2" /><line x1="26" y1="-5" x2="26" y2="5" stroke="#eee" stroke-width="1" /><rect x="26" y="-5" width="5" height="10" rx="0" fill="#f4f4f4" stroke="#c9c7c2" stroke-width="1.2" /></g><rect x="498" y="858" width="28" height="28" rx="3" fill="#dcdcdc" stroke="#cfcfcf" stroke-width="2" /><rect x="503" y="860" width="17" height="9" rx="0" fill="#eee" stroke="#d0d0d0" stroke-width="1" /><rect x="504" y="876" width="14" height="9" rx="0" fill="#eee" stroke="#d0d0d0" stroke-width="1" /><g transform="translate(512 888) rotate(-60)"><path d="M0 0l10-5h10v10h-10z" fill="#dcdad6" stroke="#c9c7c2" stroke-width="1.4" /><path d="M0 0l10-5v10z" fill="#e8e8e8" stroke="#c9c7c2" stroke-width="1.2" /><path d="M0 0l4-2v4z" fill="#ccc" stroke="none" stroke-width="2" /><line x1="20" y1="-5" x2="20" y2="5" stroke="#eee" stroke-width="1" /><rect x="20" y="-5" width="5" height="10" rx="0" fill="#f4f4f4" stroke="#c9c7c2" stroke-width="1.2" /></g><line x1="545" y1="861" x2="545" y2="883" stroke="#fff" stroke-width="2.5" /><rect x="563" y="858" width="28" height="7" rx="0" fill="#e2e2e2" stroke="#d0d0d0" stroke-width="1" /><rect x="563" y="867" width="28" height="18" rx="0" fill="#f0f0f0" stroke="#d0d0d0" stroke-width="1" /><line x1="566" y1="871" x2="587" y2="871" stroke="#d6d6d6" stroke-width="1.5" /><line x1="566" y1="876" x2="587" y2="876" stroke="#d6d6d6" stroke-width="1.5" /><line x1="566" y1="881" x2="587" y2="881" stroke="#d6d6d6" stroke-width="1.5" /><rect x="576" y="873" width="13" height="13" rx="2" fill="#d6d6d0" stroke="none" stroke-width="2" /><path d="M583 883h10l-5.0 5.5z" fill="#444" stroke="none" stroke-width="2" /><rect x="612" y="858" width="24" height="20" rx="0" fill="#e6e2dc" stroke="#d8d4cc" stroke-width="1" /><path d="M609 864h28M612 866l2 21h18l2-21z" fill="#eadcdc" stroke="#d8c8c8" stroke-width="2.5" /><path d="M662 864c8 3 18 8 26 12M662 874c10 0 18-2 26-6" fill="none" stroke="#d2d2d2" stroke-width="1.8" /><circle cx="690" cy="866" r="3.5" fill="none" stroke="#d0c4c4" stroke-width="2" /><circle cx="690" cy="878" r="3.5" fill="none" stroke="#d0c4c4" stroke-width="2" /><path d="M727 858h10l5 5v17h-15z" fill="#f4f4f4" stroke="#d8d8d8" stroke-width="1.3" /><path d="M716 865h11l5 5v18h-16z" fill="#f8f8f8" stroke="#cbcbcb" stroke-width="1.6" /><rect x="766" y="859" width="21" height="27" rx="0" fill="#ececec" stroke="#d0d0d0" stroke-width="1.8" /><rect x="770" y="857" width="12" height="5" rx="0" fill="#e0e0e0" stroke="#d0d0d0" stroke-width="1" /><path d="M769 864h13l3 3v16h-16z" fill="#f6f6f6" stroke="#cfcfcf" stroke-width="1.3" /><line x1="809" y1="861" x2="809" y2="883" stroke="#fff" stroke-width="2.5" /><rect x="835" y="867" width="18" height="18" rx="0" fill="#fbe25a" stroke="#c9a300" stroke-width="1.6" /><text x="824" y="880" font-size="34" fill="#5a2a7a" font-weight="normal" font-family="Liberation Serif">ε</text><rect x="877" y="859" width="26" height="8" rx="0" fill="#fbe25a" stroke="#c9a300" stroke-width="1.5" /><rect x="877" y="869" width="26" height="8" rx="0" fill="#fbe25a" stroke="#c9a300" stroke-width="1.5" /><rect x="877" y="879" width="26" height="8" rx="0" fill="#fbe25a" stroke="#c9a300" stroke-width="1.5" /><path d="M928 859l26 26h-26z" fill="#fbe25a" stroke="#c9a300" stroke-width="1.5" /><path d="M928 859h26v26z" fill="#ececec" stroke="#666" stroke-width="1.5" /><rect x="977" y="859" width="18" height="18" rx="0" fill="#fbe25a" stroke="#c9a300" stroke-width="1.6" /><rect x="991" y="873" width="15" height="14" rx="2" fill="#e0201a" stroke="none" stroke-width="2" /><circle cx="998.5" cy="880" r="4.5" fill="none" stroke="#fff" stroke-width="1.6" /><line x1="995" y1="883" x2="1002" y2="877" stroke="#fff" stroke-width="1.6" /><rect x="1027" y="857" width="26" height="6" rx="0" fill="#f7e14a" stroke="#33557a" stroke-width="1.5" /><path d="M1028 863h24l-9 10v14l-6-3v-11z" fill="#6c9bcb" stroke="#33557a" stroke-width="1.5" /><rect x="1077" y="859" width="26" height="26" rx="0" fill="#dbe8f6" stroke="#6c9bcb" stroke-width="1.5" /><rect x="1079" y="877" width="22" height="6" rx="0" fill="#fbe25a" stroke="#c9a300" stroke-width="1" /><line x1="1081" y1="864" x2="1099" y2="864" stroke="#6c9bcb" stroke-width="1.2" /><line x1="1081" y1="869" x2="1099" y2="869" stroke="#6c9bcb" stroke-width="1.2" /><line x1="1081" y1="874" x2="1099" y2="874" stroke="#6c9bcb" stroke-width="1.2" /><path d="M1087 879v-12h-4l7-7 7 7h-4v12z" fill="#6c9bcb" stroke="#33557a" stroke-width="1.2" /><rect x="1130" y="861" width="18" height="18" rx="0" fill="#fbe25a" stroke="#c9a300" stroke-width="1.4" /><path d="M1140 857l-6 6h4v7h4v-7h4zM1140 887l-6-6h4v-7h4v7h4zM1125 872l6-6v4h7v4h-7v4zM1155 872l-6-6v4h-7v4h7v4z" fill="#6c9bcb" stroke="#33557a" stroke-width="1.2" /><rect x="1177" y="861" width="16" height="17" rx="0" fill="#fbe25a" stroke="#c9a300" stroke-width="1.4" /><line x1="1185.221825406948" y1="875.778174593052" x2="1173.2010101267767" y2="887.7989898732234" stroke="#333" stroke-width="7" stroke-linecap="square"/><line x1="1181.221825406948" y1="879.778174593052" x2="1174.2010101267767" y2="886.7989898732234" stroke="#f6cc32" stroke-width="3.5" /><circle cx="1183.721825406948" cy="877.278174593052" r="2.2" fill="#000" stroke="none" stroke-width="2" /><circle cx="1193" cy="868" r="11" fill="#ececec" stroke="#5e5e5e" stroke-width="2.2" /><path d="M1186.4 869.1A6.82 6.82 0 0 1 1193.55 861.18" fill="none" stroke="#fff" stroke-width="2.5" opacity="0.8"/><line x1="1223" y1="861" x2="1223" y2="883" stroke="#fff" stroke-width="2.5" /><rect x="1241" y="859" width="26" height="24" rx="0" fill="#f2f2f2" stroke="#d6d6d6" stroke-width="1" /><rect x="1247" y="857" width="6" height="29" rx="0" fill="#dcdad2" stroke="#cfcdc6" stroke-width="1" /><rect x="1256" y="873" width="14" height="14" rx="4" fill="#c8c8c0" stroke="none" stroke-width="2" /><rect x="1257" y="874" width="12" height="6.0" rx="3" fill="#d8d8d0" stroke="none" stroke-width="2" opacity="0.6"/><line x1="1263.0" y1="880.0" x2="1263.0" y2="885.04" stroke="#fff" stroke-width="1.68" /><line x1="1263.0" y1="880.0" x2="1258.6352319649263" y2="882.52" stroke="#fff" stroke-width="1.68" /><line x1="1263.0" y1="880.0" x2="1258.6352319649263" y2="877.48" stroke="#fff" stroke-width="1.68" /><line x1="1263.0" y1="880.0" x2="1263.0" y2="874.96" stroke="#fff" stroke-width="1.68" /><line x1="1263.0" y1="880.0" x2="1267.3647680350737" y2="877.48" stroke="#fff" stroke-width="1.68" /><line x1="1263.0" y1="880.0" x2="1267.3647680350737" y2="882.52" stroke="#fff" stroke-width="1.68" /><circle cx="1263.0" cy="880.0" r="2.8000000000000003" fill="#fff" stroke="none" stroke-width="2" /><circle cx="1263.0" cy="880.0" r="1.12" fill="#c8c8c0" stroke="none" stroke-width="2" /><rect x="1291" y="859" width="26" height="24" rx="0" fill="#f2f2f2" stroke="#d6d6d6" stroke-width="1" /><rect x="1297" y="857" width="6" height="29" rx="0" fill="#e0dcdc" stroke="#d0cccc" stroke-width="1" /><rect x="1305" y="873" width="14" height="14" rx="3" fill="#e6e0e0" stroke="none" stroke-width="2" /><path d="M1308 876l8 8M1316 876l-8 8" fill="none" stroke="#fff" stroke-width="2" /><rect x="1341" y="859" width="26" height="26" rx="0" fill="#dfeaf6" stroke="#6c9bcb" stroke-width="1.5" /><rect x="1342" y="860" width="24" height="5" rx="0" fill="#b9d4f0" stroke="none" stroke-width="2" /><line x1="1345" y1="869" x2="1363" y2="869" stroke="#6c9bcb" stroke-width="1.2" /><line x1="1345" y1="874" x2="1363" y2="874" stroke="#6c9bcb" stroke-width="1.2" /><line x1="1345" y1="879" x2="1363" y2="879" stroke="#6c9bcb" stroke-width="1.2" /><g transform="translate(1345 886) rotate(-58)"><path d="M0 0l7-3.5h24v7h-24z" fill="#e8792a" stroke="#8a4010" stroke-width="1" /><path d="M0 0l7-3.5v7z" fill="#ddd" stroke="#666" stroke-width="1" /><rect x="31" y="-3.5" width="4" height="7" rx="0" fill="#eee" stroke="#999" stroke-width="1" /></g><rect x="1390" y="882" width="29" height="4" rx="0" fill="#888" stroke="#555" stroke-width="1.2" /><line x1="1392" y1="859" x2="1392" y2="882" stroke="#555" stroke-width="1.6" /><line x1="1417" y1="859" x2="1417" y2="882" stroke="#555" stroke-width="1.6" /><line x1="1392" y1="862" x2="1417" y2="862" stroke="#555" stroke-width="1.4" /><circle cx="1401" cy="862" r="3" fill="#f4a0a0" stroke="#a01818" stroke-width="1.2" /><circle cx="1411" cy="862" r="3" fill="#f4a0a0" stroke="#a01818" stroke-width="1.2" /><line x1="1392" y1="869" x2="1417" y2="869" stroke="#555" stroke-width="1.4" /><circle cx="1398" cy="869" r="3" fill="#b9e4b4" stroke="#3b8a3b" stroke-width="1.2" /><circle cx="1404" cy="869" r="3" fill="#b9e4b4" stroke="#3b8a3b" stroke-width="1.2" /><line x1="1392" y1="877" x2="1417" y2="877" stroke="#555" stroke-width="1.4" /><circle cx="1395" cy="877" r="3" fill="#bcdcf2" stroke="#365b7b" stroke-width="1.2" /><circle cx="1403" cy="877" r="3" fill="#bcdcf2" stroke="#365b7b" stroke-width="1.2" /><circle cx="1411" cy="877" r="3" fill="#bcdcf2" stroke="#365b7b" stroke-width="1.2" /><line x1="1437" y1="861" x2="1437" y2="883" stroke="#fff" stroke-width="2.5" /><rect x="1456" y="859" width="25" height="7" rx="0" fill="#fff" stroke="#999" stroke-width="1.2" /><line x1="1464" y1="862.5" x2="1477" y2="862.5" stroke="#555" stroke-width="2" /><rect x="1456" y="868" width="25" height="7" rx="0" fill="#b8f0b0" stroke="#3a9a3a" stroke-width="1.2" /><line x1="1464" y1="871.5" x2="1477" y2="871.5" stroke="#555" stroke-width="2" /><rect x="1456" y="877" width="25" height="7" rx="0" fill="#fff" stroke="#999" stroke-width="1.2" /><rect x="1459" y="879" width="4" height="3" rx="0" fill="#a01010" stroke="none" stroke-width="2" /><line x1="1465" y1="880.5" x2="1477" y2="880.5" stroke="#f0a0a0" stroke-width="2" /><line x1="1501" y1="861" x2="1501" y2="883" stroke="#fff" stroke-width="2.5" /><rect x="1527" y="855" width="6" height="7" rx="2" transform="rotate(0 1530 869)" fill="#eee" stroke="#888" stroke-width="1.2"/><rect x="1527" y="855" width="6" height="7" rx="2" transform="rotate(45 1530 869)" fill="#eee" stroke="#888" stroke-width="1.2"/><rect x="1527" y="855" width="6" height="7" rx="2" transform="rotate(90 1530 869)" fill="#eee" stroke="#888" stroke-width="1.2"/><rect x="1527" y="855" width="6" height="7" rx="2" transform="rotate(135 1530 869)" fill="#eee" stroke="#888" stroke-width="1.2"/><rect x="1527" y="855" width="6" height="7" rx="2" transform="rotate(180 1530 869)" fill="#eee" stroke="#888" stroke-width="1.2"/><rect x="1527" y="855" width="6" height="7" rx="2" transform="rotate(225 1530 869)" fill="#eee" stroke="#888" stroke-width="1.2"/><rect x="1527" y="855" width="6" height="7" rx="2" transform="rotate(270 1530 869)" fill="#eee" stroke="#888" stroke-width="1.2"/><rect x="1527" y="855" width="6" height="7" rx="2" transform="rotate(315 1530 869)" fill="#eee" stroke="#888" stroke-width="1.2"/><circle cx="1530" cy="869" r="10" fill="#eee" stroke="#888" stroke-width="1.2" /><circle cx="1530" cy="869" r="7.5" fill="#6c9bcb" stroke="#33557a" stroke-width="1.2" /><path d="M1527 865l7 4-7 4z" fill="#fff" stroke="none" stroke-width="2" /><path d="M1535 873l1 14 4-3 3 5 2-1-3-5h5z" fill="#fff" stroke="#333" stroke-width="1" stroke-linejoin="round"/><rect x="1573" y="859" width="22" height="22" rx="0" fill="#fff" stroke="#777" stroke-width="1.5" /><rect x="1573" y="859" width="22" height="4" rx="0" fill="#666" stroke="none" stroke-width="2" /><rect x="1568" y="869" width="20" height="17" rx="0" fill="#dfeaf6" stroke="#777" stroke-width="1.5" /><rect x="1569" y="870" width="18" height="3" rx="0" fill="#b9d4f0" stroke="none" stroke-width="2" /><line x1="1571" y1="876" x2="1575" y2="876" stroke="#6c9bcb" stroke-width="1.2" /><line x1="1577" y1="876" x2="1585" y2="876" stroke="#6c9bcb" stroke-width="1.2" /><line x1="1571" y1="880" x2="1575" y2="880" stroke="#6c9bcb" stroke-width="1.2" /><line x1="1577" y1="880" x2="1585" y2="880" stroke="#6c9bcb" stroke-width="1.2" /><line x1="1571" y1="883" x2="1575" y2="883" stroke="#6c9bcb" stroke-width="1.2" /><line x1="1577" y1="883" x2="1585" y2="883" stroke="#6c9bcb" stroke-width="1.2" /></svg><div class="a" style="left:381px;top:904px;width:1789px;height:558px;background:#fff;border-top:1px solid #c4c4c4"></div><div class="a" style="left:1666px;top:905px;width:474px;height:34px;background:#ececec"></div><div class="hd" style="left:381px;width:85px;border-right:none"></div><div class="hd" style="left:466px;width:200px"></div><div class="t" style="left:66px;width:1000px;text-align:center;top:910.7px;font-size:24px;color:#1c1c1c;font-weight:normal;">origin_id</div><div class="hd" style="left:666px;width:200px"></div><div class="t" style="left:266px;width:1000px;text-align:center;top:910.7px;font-size:24px;color:#1c1c1c;font-weight:normal;">destination_id</div><div class="hd" style="left:866px;width:200px"></div><div class="t" style="left:466px;width:1000px;text-align:center;top:910.7px;font-size:24px;color:#1c1c1c;font-weight:normal;">entry_cost</div><div class="hd" style="left:1066px;width:200px"></div><div class="t" style="left:666px;width:1000px;text-align:center;top:910.7px;font-size:24px;color:#1c1c1c;font-weight:normal;">network_cost</div><div class="hd" style="left:1266px;width:200px"></div><div class="t" style="left:866px;width:1000px;text-align:center;top:910.7px;font-size:24px;color:#1c1c1c;font-weight:normal;">exit_cost</div><div class="hd" style="left:1466px;width:200px"></div><div class="t" style="left:1066px;width:1000px;text-align:center;top:910.7px;font-size:24px;color:#1c1c1c;font-weight:normal;">total_cost</div><div class="a" style="left:466px;top:939px;width:1200px;height:60px;background:#ffffff"></div><div class="a" style="left:466px;top:998px;width:1200px;height:1px;background:#d2d2d2"></div><div class="rn" style="top:939px;height:60px"></div><div class="t" style="left:387px;top:959.5px;font-size:22.5px;color:#111;font-weight:normal;">1</div><div class="t" style="right:1511px;top:954.2px;font-size:27.5px;color:#262626;font-weight:normal;letter-spacing:0.6px">6775862</div><div class="t" style="right:1311px;top:954.2px;font-size:27.5px;color:#262626;font-weight:normal;letter-spacing:0.6px">394</div><div class="t" style="right:1111px;top:954.2px;font-size:27.5px;color:#262626;font-weight:normal;letter-spacing:0.6px">18.7936154</div><div class="t" style="right:911px;top:954.2px;font-size:27.5px;color:#262626;font-weight:normal;letter-spacing:0.3px">3562.34805<span style="letter-spacing:-0.8px">...</span></div><div class="t" style="right:711px;top:954.2px;font-size:27.5px;color:#262626;font-weight:normal;letter-spacing:0.6px">23.2018549</div><div class="t" style="right:511px;top:954.2px;font-size:27.5px;color:#262626;font-weight:normal;letter-spacing:0.6px">3604.3435207</div><div class="a" style="left:466px;top:999px;width:1200px;height:60px;background:#f2f4f3"></div><div class="a" style="left:466px;top:1058px;width:1200px;height:1px;background:#d2d2d2"></div><div class="rn" style="top:999px;height:60px"></div><div class="t" style="left:387px;top:1019.5px;font-size:22.5px;color:#111;font-weight:normal;">2</div><div class="t" style="right:1511px;top:1014.2px;font-size:27.5px;color:#262626;font-weight:normal;letter-spacing:0.6px">6775862</div><div class="t" style="right:1311px;top:1014.2px;font-size:27.5px;color:#262626;font-weight:normal;letter-spacing:0.6px">396</div><div class="t" style="right:1111px;top:1014.2px;font-size:27.5px;color:#262626;font-weight:normal;letter-spacing:0.6px">18.7936154</div><div class="t" style="right:911px;top:1014.2px;font-size:27.5px;color:#262626;font-weight:normal;letter-spacing:0.3px">11459.43452<span style="letter-spacing:-0.8px">...</span></div><div class="t" style="right:711px;top:1014.2px;font-size:27.5px;color:#262626;font-weight:normal;letter-spacing:0.6px">15.3853557</div><div class="t" style="right:511px;top:1014.2px;font-size:27.5px;color:#262626;font-weight:normal;letter-spacing:0.3px">11493.61349<span style="letter-spacing:-0.8px">...</span></div><div class="a" style="left:466px;top:1059px;width:1200px;height:60px;background:#ffffff"></div><div class="a" style="left:466px;top:1118px;width:1200px;height:1px;background:#d2d2d2"></div><div class="rn" style="top:1059px;height:60px"></div><div class="t" style="left:387px;top:1079.5px;font-size:22.5px;color:#111;font-weight:normal;">3</div><div class="t" style="right:1511px;top:1074.2px;font-size:27.5px;color:#262626;font-weight:normal;letter-spacing:0.6px">6775862</div><div class="t" style="right:1311px;top:1074.2px;font-size:27.5px;color:#262626;font-weight:normal;letter-spacing:0.6px">397</div><div class="t" style="right:1111px;top:1074.2px;font-size:27.5px;color:#262626;font-weight:normal;letter-spacing:0.6px">18.7936154</div><div class="t" style="right:911px;top:1074.2px;font-size:27.5px;color:#262626;font-weight:normal;letter-spacing:0.6px">8198.0162317</div><div class="t" style="right:711px;top:1074.2px;font-size:27.5px;color:#262626;font-weight:normal;letter-spacing:0.6px">24.7341626</div><div class="t" style="right:511px;top:1074.2px;font-size:27.5px;color:#262626;font-weight:normal;letter-spacing:0.6px">8241.5440097</div><div class="a" style="left:466px;top:1119px;width:1200px;height:60px;background:#f2f4f3"></div><div class="a" style="left:466px;top:1178px;width:1200px;height:1px;background:#d2d2d2"></div><div class="rn" style="top:1119px;height:60px"></div><div class="t" style="left:387px;top:1139.5px;font-size:22.5px;color:#111;font-weight:normal;">4</div><div class="t" style="right:1511px;top:1134.2px;font-size:27.5px;color:#262626;font-weight:normal;letter-spacing:0.6px">6775862</div><div class="t" style="right:1311px;top:1134.2px;font-size:27.5px;color:#262626;font-weight:normal;letter-spacing:0.6px">398</div><div class="t" style="right:1111px;top:1134.2px;font-size:27.5px;color:#262626;font-weight:normal;letter-spacing:0.6px">18.7936154</div><div class="t" style="right:911px;top:1134.2px;font-size:27.5px;color:#262626;font-weight:normal;letter-spacing:0.6px">8198.0162317</div><div class="t" style="right:711px;top:1134.2px;font-size:27.5px;color:#262626;font-weight:normal;letter-spacing:0.6px">24.7341626</div><div class="t" style="right:511px;top:1134.2px;font-size:27.5px;color:#262626;font-weight:normal;letter-spacing:0.6px">8241.5440097</div><div class="a" style="left:466px;top:1179px;width:1200px;height:60px;background:#ffffff"></div><div class="a" style="left:466px;top:1238px;width:1200px;height:1px;background:#d2d2d2"></div><div class="rn" style="top:1179px;height:60px"></div><div class="t" style="left:387px;top:1199.5px;font-size:22.5px;color:#111;font-weight:normal;">5</div><div class="t" style="right:1511px;top:1194.2px;font-size:27.5px;color:#262626;font-weight:normal;letter-spacing:0.6px">6775862</div><div class="t" style="right:1311px;top:1194.2px;font-size:27.5px;color:#262626;font-weight:normal;letter-spacing:0.6px">399</div><div class="t" style="right:1111px;top:1194.2px;font-size:27.5px;color:#262626;font-weight:normal;letter-spacing:0.6px">18.7936154</div><div class="t" style="right:911px;top:1194.2px;font-size:27.5px;color:#262626;font-weight:normal;letter-spacing:0.6px">5302.0398276</div><div class="t" style="right:711px;top:1194.2px;font-size:27.5px;color:#262626;font-weight:normal;letter-spacing:0.6px">97.4015343</div><div class="t" style="right:511px;top:1194.2px;font-size:27.5px;color:#262626;font-weight:normal;letter-spacing:0.6px">5418.2349774</div><div class="a" style="left:466px;top:1239px;width:1200px;height:60px;background:#f2f4f3"></div><div class="a" style="left:466px;top:1298px;width:1200px;height:1px;background:#d2d2d2"></div><div class="rn" style="top:1239px;height:60px"></div><div class="t" style="left:387px;top:1259.5px;font-size:22.5px;color:#111;font-weight:normal;">6</div><div class="t" style="right:1511px;top:1254.2px;font-size:27.5px;color:#262626;font-weight:normal;letter-spacing:0.6px">6775862</div><div class="t" style="right:1311px;top:1254.2px;font-size:27.5px;color:#262626;font-weight:normal;letter-spacing:0.6px">400</div><div class="t" style="right:1111px;top:1254.2px;font-size:27.5px;color:#262626;font-weight:normal;letter-spacing:0.6px">18.7936154</div><div class="t" style="right:911px;top:1254.2px;font-size:27.5px;color:#262626;font-weight:normal;letter-spacing:0.3px">10044.65257<span style="letter-spacing:-0.8px">...</span></div><div class="t" style="right:711px;top:1254.2px;font-size:27.5px;color:#262626;font-weight:normal;letter-spacing:0.6px">44.6148803</div><div class="t" style="right:511px;top:1254.2px;font-size:27.5px;color:#262626;font-weight:normal;letter-spacing:0.3px">10108.06106<span style="letter-spacing:-0.8px">...</span></div><div class="a" style="left:466px;top:1299px;width:1200px;height:60px;background:#ffffff"></div><div class="a" style="left:466px;top:1358px;width:1200px;height:1px;background:#d2d2d2"></div><div class="rn" style="top:1299px;height:60px"></div><div class="t" style="left:387px;top:1319.5px;font-size:22.5px;color:#111;font-weight:normal;">7</div><div class="t" style="right:1511px;top:1314.2px;font-size:27.5px;color:#262626;font-weight:normal;letter-spacing:0.6px">6775862</div><div class="t" style="right:1311px;top:1314.2px;font-size:27.5px;color:#262626;font-weight:normal;letter-spacing:0.6px">401</div><div class="t" style="right:1111px;top:1314.2px;font-size:27.5px;color:#262626;font-weight:normal;letter-spacing:0.6px">18.7936154</div><div class="t" style="right:911px;top:1314.2px;font-size:27.5px;color:#262626;font-weight:normal;letter-spacing:0.3px">10712.46952<span style="letter-spacing:-0.8px">...</span></div><div class="t" style="right:711px;top:1314.2px;font-size:27.5px;color:#262626;font-weight:normal;letter-spacing:0.6px">29.5031576</div><div class="t" style="right:511px;top:1314.2px;font-size:27.5px;color:#262626;font-weight:normal;letter-spacing:0.3px">10760.76629<span style="letter-spacing:-0.8px">...</span></div><div class="a" style="left:466px;top:1359px;width:1200px;height:60px;background:#f2f4f3"></div><div class="a" style="left:466px;top:1418px;width:1200px;height:1px;background:#d2d2d2"></div><div class="rn" style="top:1359px;height:60px"></div><div class="t" style="left:387px;top:1379.5px;font-size:22.5px;color:#111;font-weight:normal;">8</div><div class="t" style="right:1511px;top:1374.2px;font-size:27.5px;color:#262626;font-weight:normal;letter-spacing:0.6px">6775862</div><div class="t" style="right:1311px;top:1374.2px;font-size:27.5px;color:#262626;font-weight:normal;letter-spacing:0.6px">402</div><div class="t" style="right:1111px;top:1374.2px;font-size:27.5px;color:#262626;font-weight:normal;letter-spacing:0.6px">18.7936154</div><div class="t" style="right:911px;top:1374.2px;font-size:27.5px;color:#262626;font-weight:normal;letter-spacing:0.3px">12031.27102<span style="letter-spacing:-0.8px">...</span></div><div class="t" style="right:711px;top:1374.2px;font-size:27.5px;color:#262626;font-weight:normal;letter-spacing:0.6px">27.7644202</div><div class="t" style="right:511px;top:1374.2px;font-size:27.5px;color:#262626;font-weight:normal;letter-spacing:0.3px">12077.82906<span style="letter-spacing:-0.8px">...</span></div><div class="a" style="left:466px;top:1419px;width:1200px;height:43px;background:#ffffff"></div><div class="rn" style="top:1419px;height:43px"></div><div class="t" style="left:387px;top:1439.5px;font-size:22.5px;color:#111;font-weight:normal;">9</div><div class="t" style="right:1511px;top:1434.2px;font-size:27.5px;color:#262626;font-weight:normal;letter-spacing:0.6px">6775862</div><div class="t" style="right:1311px;top:1434.2px;font-size:27.5px;color:#262626;font-weight:normal;letter-spacing:0.6px">404</div><div class="t" style="right:1111px;top:1434.2px;font-size:27.5px;color:#262626;font-weight:normal;letter-spacing:0.6px">18.7936154</div><div class="t" style="right:911px;top:1434.2px;font-size:27.5px;color:#262626;font-weight:normal;letter-spacing:0.6px">9670.6949132</div><div class="t" style="right:711px;top:1434.2px;font-size:27.5px;color:#262626;font-weight:normal;letter-spacing:0.6px">37.0972593</div><div class="t" style="right:511px;top:1434.2px;font-size:27.5px;color:#262626;font-weight:normal;letter-spacing:0.6px">9726.5857880</div><div class="a" style="left:666px;top:939px;width:1px;height:523px;background:#d4d4d4"></div><div class="a" style="left:866px;top:939px;width:1px;height:523px;background:#d4d4d4"></div><div class="a" style="left:1066px;top:939px;width:1px;height:523px;background:#d4d4d4"></div><div class="a" style="left:1266px;top:939px;width:1px;height:523px;background:#d4d4d4"></div><div class="a" style="left:1466px;top:939px;width:1px;height:523px;background:#d4d4d4"></div><div class="a" style="left:1666px;top:939px;width:1px;height:523px;background:#d4d4d4"></div><div class="a" style="left:468px;top:940px;width:198px;height:58px;border:3px solid #00f27a;background:linear-gradient(#f7f8fc,#eef1f6)"></div><div class="t" style="right:1511px;top:954.2px;font-size:27.5px;color:#262626;font-weight:normal;letter-spacing:0.6px">6775862</div><div class="a" style="left:1464px;top:908px;width:201px;height:555px;border:3px solid #ff2a12"></div><div class="a" style="left:2140px;top:905px;width:30px;height:557px;background:linear-gradient(90deg,#f2f2f2,#fafafa);border-left:1px solid #cfcfcf"></div><div class="a" style="left:2141px;top:986px;width:28px;height:448px;background:#e0e0e0;border-right:1px solid #d0d0d0"></div><div class="a" style="left:2141px;top:932px;width:28px;height:2px;background:#c4c4c4"></div><div class="a" style="left:2141px;top:985px;width:28px;height:2px;background:#c4c4c4"></div><div class="a" style="left:2141px;top:1433px;width:28px;height:2px;background:#c4c4c4"></div><div class="a" style="left:2146px;top:912px;width:0;height:0;border-left:9px solid transparent;border-right:9px solid transparent;border-bottom:9px solid #555"></div><div class="a" style="left:2146px;top:1442px;width:0;height:0;border-left:9px solid transparent;border-right:9px solid transparent;border-top:9px solid #555"></div><div class="a" style="left:381px;top:1462px;width:1789px;height:1px;background:#c4c4c4"></div><div class="a" style="left:387px;top:1471px;width:238px;height:44px;background:linear-gradient(#fbfbfb,#f1f1f1);border:1.5px solid #adadad;border-radius:7px"></div><div class="t" style="left:428px;top:1483.1px;font-size:21.2px;color:#111;font-weight:normal;">Show All Features</div><div class="a" style="left:609px;top:1503px;width:0;height:0;border-left:6px solid transparent;border-right:6px solid transparent;border-top:7px solid #555"></div><svg class="i" style="left:380px;top:1462px" width="1790" height="56" viewBox="380 1462 1790 56"><rect x="396" y="1480" width="25" height="25" rx="0" fill="#eaf1fa" stroke="#6c9bcb" stroke-width="1.5" /><rect x="397" y="1481" width="23" height="5" rx="0" fill="#b9d4f0" stroke="none" stroke-width="2" /><rect x="399" y="1482" width="5" height="3" rx="0" fill="#6c9bcb" stroke="none" stroke-width="2" /><rect x="406" y="1482" width="12" height="3" rx="0" fill="#6c9bcb" stroke="none" stroke-width="2" /><line x1="399" y1="1490" x2="404" y2="1490" stroke="#6c9bcb" stroke-width="1.3" /><line x1="406" y1="1490" x2="418" y2="1490" stroke="#6c9bcb" stroke-width="1.3" /><line x1="399" y1="1494" x2="404" y2="1494" stroke="#6c9bcb" stroke-width="1.3" /><line x1="406" y1="1494" x2="418" y2="1494" stroke="#6c9bcb" stroke-width="1.3" /><line x1="399" y1="1498" x2="404" y2="1498" stroke="#6c9bcb" stroke-width="1.3" /><line x1="406" y1="1498" x2="418" y2="1498" stroke="#6c9bcb" stroke-width="1.3" /><line x1="399" y1="1502" x2="404" y2="1502" stroke="#6c9bcb" stroke-width="1.3" /><line x1="406" y1="1502" x2="418" y2="1502" stroke="#6c9bcb" stroke-width="1.3" /><rect x="2078" y="1479" width="26" height="26" rx="0" fill="#fff" stroke="#7fa7d6" stroke-width="1.4" /><rect x="2085" y="1483" width="16" height="7" rx="0" fill="#fff" stroke="#6c9bcb" stroke-width="1.2" /><rect x="2085" y="1494" width="16" height="7" rx="0" fill="#fff" stroke="#6c9bcb" stroke-width="1.2" /><line x1="2081" y1="1486.5" x2="2084" y2="1486.5" stroke="#333" stroke-width="1.5" /><line x1="2081" y1="1497.5" x2="2084" y2="1497.5" stroke="#333" stroke-width="1.5" /><rect x="2117" y="1472" width="44" height="40" rx="5" fill="#d8d8d8" stroke="#a8a8a8" stroke-width="1.5" /><rect x="2127" y="1479" width="26" height="26" rx="0" fill="#eaf1fa" stroke="#6c9bcb" stroke-width="1.5" /><rect x="2128" y="1480" width="24" height="5" rx="0" fill="#b9d4f0" stroke="none" stroke-width="2" /><rect x="2130" y="1481" width="5" height="3" rx="0" fill="#6c9bcb" stroke="none" stroke-width="2" /><rect x="2137" y="1481" width="13" height="3" rx="0" fill="#6c9bcb" stroke="none" stroke-width="2" /><line x1="2130" y1="1489" x2="2135" y2="1489" stroke="#6c9bcb" stroke-width="1.3" /><line x1="2137" y1="1489" x2="2150" y2="1489" stroke="#6c9bcb" stroke-width="1.3" /><line x1="2130" y1="1493" x2="2135" y2="1493" stroke="#6c9bcb" stroke-width="1.3" /><line x1="2137" y1="1493" x2="2150" y2="1493" stroke="#6c9bcb" stroke-width="1.3" /><line x1="2130" y1="1497" x2="2135" y2="1497" stroke="#6c9bcb" stroke-width="1.3" /><line x1="2137" y1="1497" x2="2150" y2="1497" stroke="#6c9bcb" stroke-width="1.3" /><line x1="2130" y1="1501" x2="2135" y2="1501" stroke="#6c9bcb" stroke-width="1.3" /><line x1="2137" y1="1501" x2="2150" y2="1501" stroke="#6c9bcb" stroke-width="1.3" /></svg>
</body></html>
